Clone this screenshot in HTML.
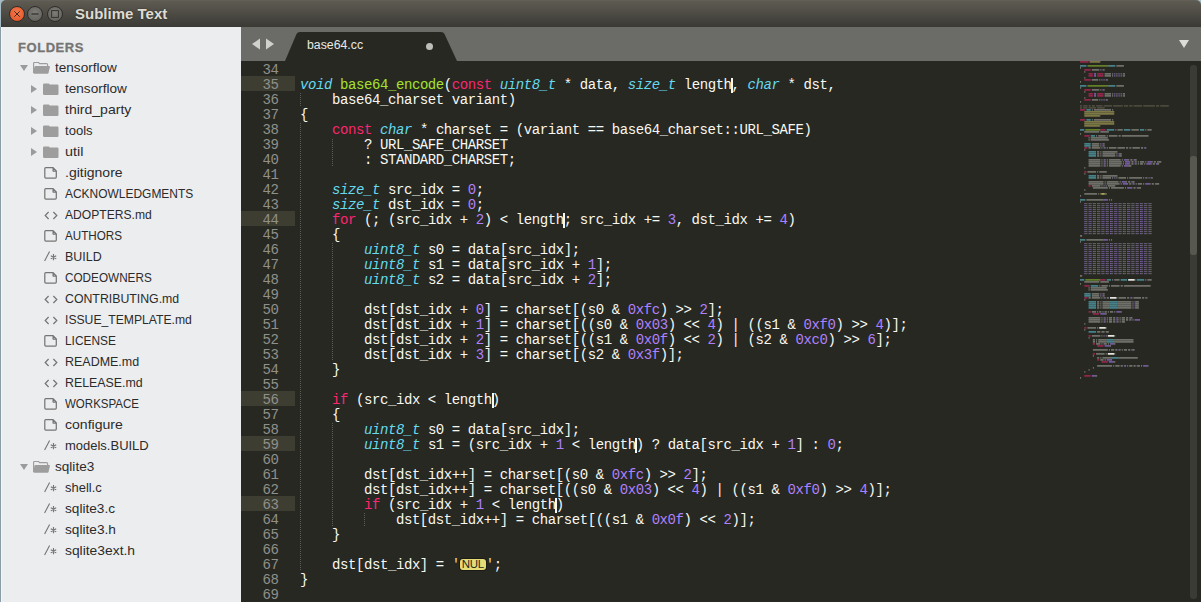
<!DOCTYPE html>
<html><head><meta charset="utf-8">
<style>
*{margin:0;padding:0;box-sizing:border-box}
html,body{width:1201px;height:602px;overflow:hidden;background:#a5bcc6}
body{position:relative;font-family:"Liberation Sans",sans-serif}
#title{position:absolute;left:1px;top:0;width:1200px;height:27px;border-radius:5px 5px 0 0;
 background:linear-gradient(#67645a 0,#5e5b52 1px,#3c3b36 26px);box-shadow:inset 0 -1px 0 #3a3934}
#title .t{position:absolute;left:74px;top:5px;font:bold 15px "Liberation Sans",sans-serif;color:#dfdbd2;letter-spacing:0;text-shadow:0 0 2px rgba(0,0,0,0.45)}
.wb{position:absolute;top:5.5px;width:16px;height:16px;border-radius:50%;border:1px solid #2e2d2a}
#bc{left:7.6px;background:radial-gradient(circle at 50% 40%,#f57a4f,#e0501f)}
#bm{left:26.4px;background:radial-gradient(circle at 50% 40%,#7d7c77,#5d5c57)}
#bx{left:45.7px;background:radial-gradient(circle at 50% 40%,#7d7c77,#5d5c57)}
#side{position:absolute;left:1px;top:27px;width:240px;height:575px;background:#ecedef}
#sideborder{position:absolute;left:0;top:27px;width:1px;height:575px;background:#8b9ea6;box-shadow:1px 0 0 #f3f4f6}
.si{position:absolute;font-size:13.5px;line-height:18px;color:#2b2b2b;white-space:pre;transform-origin:0 0}
.hdr{position:absolute;left:18px;top:40px;font:bold 13px "Liberation Sans",sans-serif;color:#767573;letter-spacing:0.55px;-webkit-text-stroke:0.3px #767573}
.tri-d{position:absolute;width:0;height:0;border-left:4px solid transparent;border-right:4px solid transparent;border-top:6px solid #9a9b9c}
.tri-r{position:absolute;width:0;height:0;border-top:4px solid transparent;border-bottom:4px solid transparent;border-left:6px solid #9a9b9c}
.ic{position:absolute}
.cic{position:absolute;font:13px "Liberation Mono",monospace;color:#8a8b8c;line-height:16px;letter-spacing:-1px}
#tabbar{position:absolute;left:241px;top:27px;width:960px;height:34px;background:#6b6c67}
#editor{position:absolute;left:241px;top:61px;width:960px;height:541px;background:#272822;overflow:hidden}
#edge{position:absolute;left:241px;top:27px;width:1px;height:575px;background:#dcdcdc}
.hl{position:absolute;left:241px;width:54px;height:15px;background:#3e3d32}
.ln{position:absolute;left:242px;width:36.5px;text-align:right;height:15px;margin-top:2px;font:14px "Liberation Mono",monospace;letter-spacing:-0.41px;line-height:15px;color:#90908a}
.cl{position:absolute;left:300px;height:15px;margin-top:2px;font:14px "Liberation Mono",monospace;letter-spacing:-0.41px;line-height:15px;color:#f8f8f2;white-space:pre}
.k{color:#f92672}
.t{color:#66d9ef;font-style:italic}
.f{color:#a6e22e}
.n{color:#ae81ff}
.s{color:#e6db74}
.nul{display:inline-block;position:relative;top:1px;vertical-align:top;width:26px;height:11px;background:#e6db74;color:#272822;border-radius:3px;box-shadow:0 0 0 1px #1a1a16;font:11.5px "Liberation Sans",sans-serif;letter-spacing:-0.2px;line-height:11px;text-align:center}
.ig{position:absolute;width:1px;background:repeating-linear-gradient(#5c5d56 0 1px,transparent 1px 2px)}
.cur{position:absolute;width:2px;height:15px;background:#f8f8f0}
#scroll{position:absolute;left:1190px;top:65px;width:7px;height:534px;border-radius:3px;background:#3a3b35}
#thumb{position:absolute;left:1190px;top:156px;width:7px;height:99px;border-radius:3px;background:#57584f}

#mini{position:absolute;left:1080px;top:61px}
#mini .c{color:#75715e}
#mini .b{background:#f8f8f2;color:#f8f8f2}
#tab{position:absolute;left:280px;top:31px}
.arrow{position:absolute}
#dd{position:absolute;left:1179px;top:40px;width:0;height:0;border-left:5px solid transparent;border-right:5px solid transparent;border-top:8px solid #dcdcd8}
#tabtitle{position:absolute;left:307px;top:38px;font:12.3px "Liberation Sans",sans-serif;color:#e8e8e2}
#dot{position:absolute;left:426px;top:43px;width:7px;height:7px;border-radius:50%;background:#bdbdb9}
</style></head><body>
<div id="title">
 <div class="wb" id="bc"><svg width="14" height="14" viewBox="0 0 14 14" style="position:absolute;left:0;top:0"><path d="M4.3,4.3 L9.7,9.7 M9.7,4.3 L4.3,9.7" stroke="#3a2418" stroke-width="0.95"/></svg></div><div class="wb" id="bm"><svg width="14" height="14" viewBox="0 0 14 14" style="position:absolute;left:0;top:0"><path d="M3.5,7 L10.5,7" stroke="#2e2d2a" stroke-width="1.2"/></svg></div><div class="wb" id="bx"><svg width="14" height="14" viewBox="0 0 14 14" style="position:absolute;left:0;top:0"><rect x="3.6" y="3.6" width="6.8" height="6.8" fill="none" stroke="#33322e" stroke-width="0.95"/></svg></div>
 <div class="t">Sublime Text</div>
</div>
<div id="side">
</div>
<div id="sideborder"></div>
<div class="hdr">FOLDERS</div>
<div class="tri-d" style="left:20px;top:65px"></div>
<svg class="ic" style="left:32px;top:61px" width="20" height="14" viewBox="0 0 20 14"><path d="M1.6,12 L1.6,2.3 Q1.6,1.5 2.4,1.5 L6.6,1.5 L7.6,2.6 L14.6,2.6 Q15.6,2.6 15.6,3.6 L15.6,5.5" fill="none" stroke="#9d9d9d" stroke-width="1.15"/><path d="M3.6,5 L17.2,5 Q18.1,5 17.9,5.9 L16.5,11.9 Q16.3,12.7 15.5,12.7 L2.2,12.7 Q1.1,12.7 1.3,11.6 L2.4,5.9 Q2.6,5 3.6,5 Z" fill="#9d9d9d"/></svg>
<div class="si" style="left:55px;top:59px;transform:scaleX(1.0053)">tensorflow</div>
<div class="tri-r" style="left:31px;top:85px"></div>
<svg class="ic" style="left:42.5px;top:83px" width="16" height="13" viewBox="0 0 16 13"><path d="M0,1.8 Q0,0.5 1.3,0.5 L5.8,0.5 L6.8,1.6 L14.3,1.6 Q15.5,1.6 15.5,2.8 L15.5,10.8 Q15.5,12 14.3,12 L1.3,12 Q0,12 0,10.8 Z" fill="#9d9d9d"/></svg>
<div class="si" style="left:65px;top:80px;transform:scaleX(1.0053)">tensorflow</div>
<div class="tri-r" style="left:31px;top:106px"></div>
<svg class="ic" style="left:42.5px;top:104px" width="16" height="13" viewBox="0 0 16 13"><path d="M0,1.8 Q0,0.5 1.3,0.5 L5.8,0.5 L6.8,1.6 L14.3,1.6 Q15.5,1.6 15.5,2.8 L15.5,10.8 Q15.5,12 14.3,12 L1.3,12 Q0,12 0,10.8 Z" fill="#9d9d9d"/></svg>
<div class="si" style="left:65px;top:101px;transform:scaleX(1.0400)">third_party</div>
<div class="tri-r" style="left:31px;top:127px"></div>
<svg class="ic" style="left:42.5px;top:125px" width="16" height="13" viewBox="0 0 16 13"><path d="M0,1.8 Q0,0.5 1.3,0.5 L5.8,0.5 L6.8,1.6 L14.3,1.6 Q15.5,1.6 15.5,2.8 L15.5,10.8 Q15.5,12 14.3,12 L1.3,12 Q0,12 0,10.8 Z" fill="#9d9d9d"/></svg>
<div class="si" style="left:65px;top:122px;transform:scaleX(0.9668)">tools</div>
<div class="tri-r" style="left:31px;top:148px"></div>
<svg class="ic" style="left:42.5px;top:146px" width="16" height="13" viewBox="0 0 16 13"><path d="M0,1.8 Q0,0.5 1.3,0.5 L5.8,0.5 L6.8,1.6 L14.3,1.6 Q15.5,1.6 15.5,2.8 L15.5,10.8 Q15.5,12 14.3,12 L1.3,12 Q0,12 0,10.8 Z" fill="#9d9d9d"/></svg>
<div class="si" style="left:65px;top:143px;transform:scaleX(1.0612)">util</div>
<svg class="ic" style="left:43px;top:167px" width="15" height="13" viewBox="0 0 15 13"><path d="M2.7,0.7 L10.1,0.7 L13.3,3.9 L13.3,10.1 Q13.3,11.1 12.3,11.1 L2.8,11.1 Q1.8,11.1 1.8,10.1 L1.8,1.7 Q1.8,0.7 2.7,0.7 Z M10.1,0.9 L10.1,4.1 L13.1,4.1" fill="none" stroke="#767676" stroke-width="1.25" stroke-linejoin="round"/></svg>
<div class="si" style="left:65px;top:164px;transform:scaleX(1.0371)">.gitignore</div>
<svg class="ic" style="left:43px;top:188px" width="15" height="13" viewBox="0 0 15 13"><path d="M2.7,0.7 L10.1,0.7 L13.3,3.9 L13.3,10.1 Q13.3,11.1 12.3,11.1 L2.8,11.1 Q1.8,11.1 1.8,10.1 L1.8,1.7 Q1.8,0.7 2.7,0.7 Z M10.1,0.9 L10.1,4.1 L13.1,4.1" fill="none" stroke="#767676" stroke-width="1.25" stroke-linejoin="round"/></svg>
<div class="si" style="left:65px;top:185px;transform:scaleX(0.8859)">ACKNOWLEDGMENTS</div>
<svg class="ic" style="left:43.5px;top:210.5px" width="14" height="10" viewBox="0 0 14 10"><path d="M4.6,1 L1.2,4.5 L4.6,8 M9.4,1 L12.8,4.5 L9.4,8" fill="none" stroke="#767676" stroke-width="1.25"/></svg>
<div class="si" style="left:65px;top:206px;transform:scaleX(0.8965)">ADOPTERS.md</div>
<svg class="ic" style="left:43px;top:230px" width="15" height="13" viewBox="0 0 15 13"><path d="M2.7,0.7 L10.1,0.7 L13.3,3.9 L13.3,10.1 Q13.3,11.1 12.3,11.1 L2.8,11.1 Q1.8,11.1 1.8,10.1 L1.8,1.7 Q1.8,0.7 2.7,0.7 Z M10.1,0.9 L10.1,4.1 L13.1,4.1" fill="none" stroke="#767676" stroke-width="1.25" stroke-linejoin="round"/></svg>
<div class="si" style="left:65px;top:227px;transform:scaleX(0.8628)">AUTHORS</div>
<svg class="ic" style="left:43px;top:251px" width="14" height="14" viewBox="0 0 14 14"><path d="M1.6,10 L6.6,0.4" stroke="#767676" stroke-width="1.1" fill="none"/><path d="M10.5,3.1 L10.5,9.3 M7.8,4.65 L13.2,7.75 M7.8,7.75 L13.2,4.65" stroke="#767676" stroke-width="1.15" fill="none"/></svg>
<div class="si" style="left:65px;top:248px;transform:scaleX(0.9206)">BUILD</div>
<svg class="ic" style="left:43px;top:272px" width="15" height="13" viewBox="0 0 15 13"><path d="M2.7,0.7 L10.1,0.7 L13.3,3.9 L13.3,10.1 Q13.3,11.1 12.3,11.1 L2.8,11.1 Q1.8,11.1 1.8,10.1 L1.8,1.7 Q1.8,0.7 2.7,0.7 Z M10.1,0.9 L10.1,4.1 L13.1,4.1" fill="none" stroke="#767676" stroke-width="1.25" stroke-linejoin="round"/></svg>
<div class="si" style="left:65px;top:269px;transform:scaleX(0.8696)">CODEOWNERS</div>
<svg class="ic" style="left:43.5px;top:294.5px" width="14" height="10" viewBox="0 0 14 10"><path d="M4.6,1 L1.2,4.5 L4.6,8 M9.4,1 L12.8,4.5 L9.4,8" fill="none" stroke="#767676" stroke-width="1.25"/></svg>
<div class="si" style="left:65px;top:290px;transform:scaleX(0.9119)">CONTRIBUTING.md</div>
<svg class="ic" style="left:43.5px;top:315.5px" width="14" height="10" viewBox="0 0 14 10"><path d="M4.6,1 L1.2,4.5 L4.6,8 M9.4,1 L12.8,4.5 L9.4,8" fill="none" stroke="#767676" stroke-width="1.25"/></svg>
<div class="si" style="left:65px;top:311px;transform:scaleX(0.9013)">ISSUE_TEMPLATE.md</div>
<svg class="ic" style="left:43px;top:335px" width="15" height="13" viewBox="0 0 15 13"><path d="M2.7,0.7 L10.1,0.7 L13.3,3.9 L13.3,10.1 Q13.3,11.1 12.3,11.1 L2.8,11.1 Q1.8,11.1 1.8,10.1 L1.8,1.7 Q1.8,0.7 2.7,0.7 Z M10.1,0.9 L10.1,4.1 L13.1,4.1" fill="none" stroke="#767676" stroke-width="1.25" stroke-linejoin="round"/></svg>
<div class="si" style="left:65px;top:332px;transform:scaleX(0.8811)">LICENSE</div>
<svg class="ic" style="left:43.5px;top:357.5px" width="14" height="10" viewBox="0 0 14 10"><path d="M4.6,1 L1.2,4.5 L4.6,8 M9.4,1 L12.8,4.5 L9.4,8" fill="none" stroke="#767676" stroke-width="1.25"/></svg>
<div class="si" style="left:65px;top:353px;transform:scaleX(0.9235)">README.md</div>
<svg class="ic" style="left:43.5px;top:378.5px" width="14" height="10" viewBox="0 0 14 10"><path d="M4.6,1 L1.2,4.5 L4.6,8 M9.4,1 L12.8,4.5 L9.4,8" fill="none" stroke="#767676" stroke-width="1.25"/></svg>
<div class="si" style="left:65px;top:374px;transform:scaleX(0.9158)">RELEASE.md</div>
<svg class="ic" style="left:43px;top:398px" width="15" height="13" viewBox="0 0 15 13"><path d="M2.7,0.7 L10.1,0.7 L13.3,3.9 L13.3,10.1 Q13.3,11.1 12.3,11.1 L2.8,11.1 Q1.8,11.1 1.8,10.1 L1.8,1.7 Q1.8,0.7 2.7,0.7 Z M10.1,0.9 L10.1,4.1 L13.1,4.1" fill="none" stroke="#767676" stroke-width="1.25" stroke-linejoin="round"/></svg>
<div class="si" style="left:65px;top:395px;transform:scaleX(0.8532)">WORKSPACE</div>
<svg class="ic" style="left:43px;top:419px" width="15" height="13" viewBox="0 0 15 13"><path d="M2.7,0.7 L10.1,0.7 L13.3,3.9 L13.3,10.1 Q13.3,11.1 12.3,11.1 L2.8,11.1 Q1.8,11.1 1.8,10.1 L1.8,1.7 Q1.8,0.7 2.7,0.7 Z M10.1,0.9 L10.1,4.1 L13.1,4.1" fill="none" stroke="#767676" stroke-width="1.25" stroke-linejoin="round"/></svg>
<div class="si" style="left:65px;top:416px;transform:scaleX(1.0419)">configure</div>
<svg class="ic" style="left:43px;top:440px" width="14" height="14" viewBox="0 0 14 14"><path d="M1.6,10 L6.6,0.4" stroke="#767676" stroke-width="1.1" fill="none"/><path d="M10.5,3.1 L10.5,9.3 M7.8,4.65 L13.2,7.75 M7.8,7.75 L13.2,4.65" stroke="#767676" stroke-width="1.15" fill="none"/></svg>
<div class="si" style="left:65px;top:437px;transform:scaleX(0.9620)">models.BUILD</div>
<div class="tri-d" style="left:20px;top:464px"></div>
<svg class="ic" style="left:32px;top:460px" width="20" height="14" viewBox="0 0 20 14"><path d="M1.6,12 L1.6,2.3 Q1.6,1.5 2.4,1.5 L6.6,1.5 L7.6,2.6 L14.6,2.6 Q15.6,2.6 15.6,3.6 L15.6,5.5" fill="none" stroke="#9d9d9d" stroke-width="1.15"/><path d="M3.6,5 L17.2,5 Q18.1,5 17.9,5.9 L16.5,11.9 Q16.3,12.7 15.5,12.7 L2.2,12.7 Q1.1,12.7 1.3,11.6 L2.4,5.9 Q2.6,5 3.6,5 Z" fill="#9d9d9d"/></svg>
<div class="si" style="left:55px;top:458px;transform:scaleX(1.0063)">sqlite3</div>
<svg class="ic" style="left:43px;top:482px" width="14" height="14" viewBox="0 0 14 14"><path d="M1.6,10 L6.6,0.4" stroke="#767676" stroke-width="1.1" fill="none"/><path d="M10.5,3.1 L10.5,9.3 M7.8,4.65 L13.2,7.75 M7.8,7.75 L13.2,4.65" stroke="#767676" stroke-width="1.15" fill="none"/></svg>
<div class="si" style="left:65px;top:479px;transform:scaleX(0.9601)">shell.c</div>
<svg class="ic" style="left:43px;top:503px" width="14" height="14" viewBox="0 0 14 14"><path d="M1.6,10 L6.6,0.4" stroke="#767676" stroke-width="1.1" fill="none"/><path d="M10.5,3.1 L10.5,9.3 M7.8,4.65 L13.2,7.75 M7.8,7.75 L13.2,4.65" stroke="#767676" stroke-width="1.15" fill="none"/></svg>
<div class="si" style="left:65px;top:500px;transform:scaleX(1.0111)">sqlite3.c</div>
<svg class="ic" style="left:43px;top:524px" width="14" height="14" viewBox="0 0 14 14"><path d="M1.6,10 L6.6,0.4" stroke="#767676" stroke-width="1.1" fill="none"/><path d="M10.5,3.1 L10.5,9.3 M7.8,4.65 L13.2,7.75 M7.8,7.75 L13.2,4.65" stroke="#767676" stroke-width="1.15" fill="none"/></svg>
<div class="si" style="left:65px;top:521px;transform:scaleX(1.0130)">sqlite3.h</div>
<svg class="ic" style="left:43px;top:545px" width="14" height="14" viewBox="0 0 14 14"><path d="M1.6,10 L6.6,0.4" stroke="#767676" stroke-width="1.1" fill="none"/><path d="M10.5,3.1 L10.5,9.3 M7.8,4.65 L13.2,7.75 M7.8,7.75 L13.2,4.65" stroke="#767676" stroke-width="1.15" fill="none"/></svg>
<div class="si" style="left:65px;top:542px;transform:scaleX(1.0256)">sqlite3ext.h</div>
<div id="tabbar"></div>
<svg id="tab" width="182" height="31" viewBox="0 0 182 31"><path d="M5,30 L16.5,3 Q17.5,1 20,1 L161,1 Q163.5,1 164.5,3 L177,30 Z" fill="#272822"/></svg>
<svg class="arrow" style="left:251px;top:38px" width="24" height="12" viewBox="0 0 24 12"><path d="M9,0.5 L9,11.5 L1,6 Z M15,0.5 L15,11.5 L23,6 Z" fill="#d0d0cc"/></svg>
<div id="dd"></div>
<div id="tabtitle">base64.cc</div>
<div id="dot"></div>
<div id="editor"></div>

<div class="ln" style="top:61px">34</div>
<div class="cl" style="top:61px"></div>
<div class="hl" style="top:76px"></div>
<div class="ln" style="top:76px">35</div>
<div class="cl" style="top:76px"><span class="t">void</span> <span class="f">base64_encode</span>(<span class="k">const</span> <span class="t">uint8_t</span> * data, <span class="t">size_t</span> length, <span class="t">char</span> * dst,</div>
<div class="cur" style="top:78px;left:731px"></div>
<div class="ln" style="top:91px">36</div>
<div class="cl" style="top:91px">    base64_charset variant)</div>
<div class="ln" style="top:106px">37</div>
<div class="cl" style="top:106px">{</div>
<div class="ln" style="top:121px">38</div>
<div class="cl" style="top:121px">    <span class="k">const</span> <span class="t">char</span> * charset = (variant == base64_charset::URL_SAFE)</div>
<div class="ln" style="top:136px">39</div>
<div class="cl" style="top:136px">        ? URL_SAFE_CHARSET</div>
<div class="ln" style="top:151px">40</div>
<div class="cl" style="top:151px">        : STANDARD_CHARSET;</div>
<div class="ln" style="top:166px">41</div>
<div class="cl" style="top:166px"></div>
<div class="ln" style="top:181px">42</div>
<div class="cl" style="top:181px">    <span class="t">size_t</span> src_idx = <span class="n">0</span>;</div>
<div class="ln" style="top:196px">43</div>
<div class="cl" style="top:196px">    <span class="t">size_t</span> dst_idx = <span class="n">0</span>;</div>
<div class="hl" style="top:211px"></div>
<div class="ln" style="top:211px">44</div>
<div class="cl" style="top:211px">    <span class="k">for</span> (; (src_idx + <span class="n">2</span>) &lt; length; src_idx += <span class="n">3</span>, dst_idx += <span class="n">4</span>)</div>
<div class="cur" style="top:213px;left:563px"></div>
<div class="ln" style="top:226px">45</div>
<div class="cl" style="top:226px">    {</div>
<div class="ln" style="top:241px">46</div>
<div class="cl" style="top:241px">        <span class="t">uint8_t</span> s0 = data[src_idx];</div>
<div class="ln" style="top:256px">47</div>
<div class="cl" style="top:256px">        <span class="t">uint8_t</span> s1 = data[src_idx + <span class="n">1</span>];</div>
<div class="ln" style="top:271px">48</div>
<div class="cl" style="top:271px">        <span class="t">uint8_t</span> s2 = data[src_idx + <span class="n">2</span>];</div>
<div class="ln" style="top:286px">49</div>
<div class="cl" style="top:286px"></div>
<div class="ln" style="top:301px">50</div>
<div class="cl" style="top:301px">        dst[dst_idx + <span class="n">0</span>] = charset[(s0 &amp; <span class="n">0xfc</span>) &gt;&gt; <span class="n">2</span>];</div>
<div class="ln" style="top:316px">51</div>
<div class="cl" style="top:316px">        dst[dst_idx + <span class="n">1</span>] = charset[((s0 &amp; <span class="n">0x03</span>) &lt;&lt; <span class="n">4</span>) | ((s1 &amp; <span class="n">0xf0</span>) &gt;&gt; <span class="n">4</span>)];</div>
<div class="ln" style="top:331px">52</div>
<div class="cl" style="top:331px">        dst[dst_idx + <span class="n">2</span>] = charset[((s1 &amp; <span class="n">0x0f</span>) &lt;&lt; <span class="n">2</span>) | (s2 &amp; <span class="n">0xc0</span>) &gt;&gt; <span class="n">6</span>];</div>
<div class="ln" style="top:346px">53</div>
<div class="cl" style="top:346px">        dst[dst_idx + <span class="n">3</span>] = charset[(s2 &amp; <span class="n">0x3f</span>)];</div>
<div class="ln" style="top:361px">54</div>
<div class="cl" style="top:361px">    }</div>
<div class="ln" style="top:376px">55</div>
<div class="cl" style="top:376px"></div>
<div class="hl" style="top:391px"></div>
<div class="ln" style="top:391px">56</div>
<div class="cl" style="top:391px">    <span class="k">if</span> (src_idx &lt; length)</div>
<div class="cur" style="top:393px;left:492px"></div>
<div class="ln" style="top:406px">57</div>
<div class="cl" style="top:406px">    {</div>
<div class="ln" style="top:421px">58</div>
<div class="cl" style="top:421px">        <span class="t">uint8_t</span> s0 = data[src_idx];</div>
<div class="hl" style="top:436px"></div>
<div class="ln" style="top:436px">59</div>
<div class="cl" style="top:436px">        <span class="t">uint8_t</span> s1 = (src_idx + <span class="n">1</span> &lt; length) ? data[src_idx + <span class="n">1</span>] : <span class="n">0</span>;</div>
<div class="cur" style="top:438px;left:635px"></div>
<div class="ln" style="top:451px">60</div>
<div class="cl" style="top:451px"></div>
<div class="ln" style="top:466px">61</div>
<div class="cl" style="top:466px">        dst[dst_idx++] = charset[(s0 &amp; <span class="n">0xfc</span>) &gt;&gt; <span class="n">2</span>];</div>
<div class="ln" style="top:481px">62</div>
<div class="cl" style="top:481px">        dst[dst_idx++] = charset[((s0 &amp; <span class="n">0x03</span>) &lt;&lt; <span class="n">4</span>) | ((s1 &amp; <span class="n">0xf0</span>) &gt;&gt; <span class="n">4</span>)];</div>
<div class="hl" style="top:496px"></div>
<div class="ln" style="top:496px">63</div>
<div class="cl" style="top:496px">        <span class="k">if</span> (src_idx + <span class="n">1</span> &lt; length)</div>
<div class="cur" style="top:498px;left:555px"></div>
<div class="ln" style="top:511px">64</div>
<div class="cl" style="top:511px">            dst[dst_idx++] = charset[((s1 &amp; <span class="n">0x0f</span>) &lt;&lt; <span class="n">2</span>)];</div>
<div class="ln" style="top:526px">65</div>
<div class="cl" style="top:526px">    }</div>
<div class="ln" style="top:541px">66</div>
<div class="cl" style="top:541px"></div>
<div class="ln" style="top:556px">67</div>
<div class="cl" style="top:556px">    dst[dst_idx] = <span class="s">&#x27;</span><span class="nul">NUL</span><span class="s">&#x27;</span>;</div>
<div class="ln" style="top:571px">68</div>
<div class="cl" style="top:571px">}</div>
<div class="ln" style="top:586px">69</div>
<div class="cl" style="top:586px"></div>
<div class="ig" style="top:93px;left:300px;height:13px"></div>
<div class="ig" style="top:123px;left:300px;height:448px"></div>
<div class="ig" style="top:139px;left:332px;height:27px"></div>
<div class="ig" style="top:243px;left:332px;height:118px"></div>
<div class="ig" style="top:423px;left:332px;height:103px"></div>
<div class="ig" style="top:513px;left:364px;height:13px"></div>
<svg id="mini" width="110" height="320" viewBox="0 0 110 320"><rect x="0.00" y="0" width="8.56" height="1.75" fill="#f92672" fill-opacity="0.5"/><rect x="9.63" y="0" width="10.70" height="1.75" fill="#e6db74" fill-opacity="0.45"/><rect x="0.00" y="4" width="6.42" height="1.75" fill="#66d9ef" fill-opacity="0.5"/><rect x="7.49" y="4" width="20.33" height="1.75" fill="#a6e22e" fill-opacity="0.47"/><rect x="27.82" y="4" width="1.07" height="1.75" fill="#f8f8f2" fill-opacity="0.34"/><rect x="28.89" y="4" width="6.42" height="1.75" fill="#66d9ef" fill-opacity="0.5"/><rect x="36.38" y="4" width="7.49" height="1.75" fill="#f8f8f2" fill-opacity="0.34"/><rect x="0.00" y="6" width="1.07" height="1.75" fill="#f8f8f2" fill-opacity="0.34"/><rect x="4.28" y="8" width="6.42" height="1.75" fill="#f92672" fill-opacity="0.5"/><rect x="11.77" y="8" width="7.49" height="1.75" fill="#f8f8f2" fill-opacity="0.34"/><rect x="20.33" y="8" width="1.07" height="1.75" fill="#f8f8f2" fill-opacity="0.34"/><rect x="22.47" y="8" width="1.07" height="1.75" fill="#ae81ff" fill-opacity="0.55"/><rect x="23.54" y="8" width="1.07" height="1.75" fill="#f8f8f2" fill-opacity="0.34"/><rect x="4.28" y="10" width="1.07" height="1.75" fill="#f8f8f2" fill-opacity="0.34"/><rect x="8.56" y="12" width="4.28" height="1.75" fill="#f92672" fill-opacity="0.5"/><rect x="13.91" y="12" width="1.07" height="1.75" fill="#ae81ff" fill-opacity="0.55"/><rect x="14.98" y="12" width="1.07" height="1.75" fill="#f8f8f2" fill-opacity="0.34"/><rect x="17.12" y="12" width="6.42" height="1.75" fill="#f92672" fill-opacity="0.5"/><rect x="24.61" y="12" width="6.42" height="1.75" fill="#f8f8f2" fill-opacity="0.34"/><rect x="32.10" y="12" width="1.07" height="1.75" fill="#f8f8f2" fill-opacity="0.34"/><rect x="34.24" y="12" width="1.07" height="1.75" fill="#ae81ff" fill-opacity="0.55"/><rect x="36.38" y="12" width="1.07" height="1.75" fill="#f8f8f2" fill-opacity="0.34"/><rect x="38.52" y="12" width="1.07" height="1.75" fill="#ae81ff" fill-opacity="0.55"/><rect x="40.66" y="12" width="1.07" height="1.75" fill="#f8f8f2" fill-opacity="0.34"/><rect x="42.80" y="12" width="1.07" height="1.75" fill="#ae81ff" fill-opacity="0.55"/><rect x="43.87" y="12" width="1.07" height="1.75" fill="#f8f8f2" fill-opacity="0.34"/><rect x="8.56" y="14" width="4.28" height="1.75" fill="#f92672" fill-opacity="0.5"/><rect x="13.91" y="14" width="1.07" height="1.75" fill="#ae81ff" fill-opacity="0.55"/><rect x="14.98" y="14" width="1.07" height="1.75" fill="#f8f8f2" fill-opacity="0.34"/><rect x="17.12" y="14" width="6.42" height="1.75" fill="#f92672" fill-opacity="0.5"/><rect x="24.61" y="14" width="6.42" height="1.75" fill="#f8f8f2" fill-opacity="0.34"/><rect x="32.10" y="14" width="1.07" height="1.75" fill="#f8f8f2" fill-opacity="0.34"/><rect x="34.24" y="14" width="1.07" height="1.75" fill="#ae81ff" fill-opacity="0.55"/><rect x="36.38" y="14" width="1.07" height="1.75" fill="#f8f8f2" fill-opacity="0.34"/><rect x="38.52" y="14" width="1.07" height="1.75" fill="#ae81ff" fill-opacity="0.55"/><rect x="40.66" y="14" width="1.07" height="1.75" fill="#f8f8f2" fill-opacity="0.34"/><rect x="42.80" y="14" width="1.07" height="1.75" fill="#ae81ff" fill-opacity="0.55"/><rect x="43.87" y="14" width="1.07" height="1.75" fill="#f8f8f2" fill-opacity="0.34"/><rect x="4.28" y="16" width="1.07" height="1.75" fill="#f8f8f2" fill-opacity="0.34"/><rect x="4.28" y="18" width="6.42" height="1.75" fill="#f92672" fill-opacity="0.5"/><rect x="11.77" y="18" width="6.42" height="1.75" fill="#f8f8f2" fill-opacity="0.34"/><rect x="19.26" y="18" width="1.07" height="1.75" fill="#f8f8f2" fill-opacity="0.34"/><rect x="21.40" y="18" width="1.07" height="1.75" fill="#ae81ff" fill-opacity="0.55"/><rect x="23.54" y="18" width="1.07" height="1.75" fill="#f8f8f2" fill-opacity="0.34"/><rect x="25.68" y="18" width="1.07" height="1.75" fill="#ae81ff" fill-opacity="0.55"/><rect x="26.75" y="18" width="1.07" height="1.75" fill="#f8f8f2" fill-opacity="0.34"/><rect x="0.00" y="20" width="1.07" height="1.75" fill="#f8f8f2" fill-opacity="0.34"/><rect x="0.00" y="24" width="6.42" height="1.75" fill="#66d9ef" fill-opacity="0.5"/><rect x="7.49" y="24" width="20.33" height="1.75" fill="#a6e22e" fill-opacity="0.47"/><rect x="27.82" y="24" width="1.07" height="1.75" fill="#f8f8f2" fill-opacity="0.34"/><rect x="28.89" y="24" width="6.42" height="1.75" fill="#66d9ef" fill-opacity="0.5"/><rect x="36.38" y="24" width="7.49" height="1.75" fill="#f8f8f2" fill-opacity="0.34"/><rect x="0.00" y="26" width="1.07" height="1.75" fill="#f8f8f2" fill-opacity="0.34"/><rect x="4.28" y="28" width="6.42" height="1.75" fill="#f92672" fill-opacity="0.5"/><rect x="11.77" y="28" width="7.49" height="1.75" fill="#f8f8f2" fill-opacity="0.34"/><rect x="20.33" y="28" width="1.07" height="1.75" fill="#f8f8f2" fill-opacity="0.34"/><rect x="22.47" y="28" width="1.07" height="1.75" fill="#ae81ff" fill-opacity="0.55"/><rect x="23.54" y="28" width="1.07" height="1.75" fill="#f8f8f2" fill-opacity="0.34"/><rect x="4.28" y="30" width="1.07" height="1.75" fill="#f8f8f2" fill-opacity="0.34"/><rect x="8.56" y="32" width="4.28" height="1.75" fill="#f92672" fill-opacity="0.5"/><rect x="13.91" y="32" width="1.07" height="1.75" fill="#ae81ff" fill-opacity="0.55"/><rect x="14.98" y="32" width="1.07" height="1.75" fill="#f8f8f2" fill-opacity="0.34"/><rect x="17.12" y="32" width="6.42" height="1.75" fill="#f92672" fill-opacity="0.5"/><rect x="24.61" y="32" width="6.42" height="1.75" fill="#f8f8f2" fill-opacity="0.34"/><rect x="32.10" y="32" width="1.07" height="1.75" fill="#f8f8f2" fill-opacity="0.34"/><rect x="34.24" y="32" width="1.07" height="1.75" fill="#ae81ff" fill-opacity="0.55"/><rect x="36.38" y="32" width="1.07" height="1.75" fill="#f8f8f2" fill-opacity="0.34"/><rect x="38.52" y="32" width="1.07" height="1.75" fill="#ae81ff" fill-opacity="0.55"/><rect x="40.66" y="32" width="1.07" height="1.75" fill="#f8f8f2" fill-opacity="0.34"/><rect x="42.80" y="32" width="1.07" height="1.75" fill="#ae81ff" fill-opacity="0.55"/><rect x="43.87" y="32" width="1.07" height="1.75" fill="#f8f8f2" fill-opacity="0.34"/><rect x="8.56" y="34" width="4.28" height="1.75" fill="#f92672" fill-opacity="0.5"/><rect x="13.91" y="34" width="1.07" height="1.75" fill="#ae81ff" fill-opacity="0.55"/><rect x="14.98" y="34" width="1.07" height="1.75" fill="#f8f8f2" fill-opacity="0.34"/><rect x="17.12" y="34" width="6.42" height="1.75" fill="#f92672" fill-opacity="0.5"/><rect x="24.61" y="34" width="6.42" height="1.75" fill="#f8f8f2" fill-opacity="0.34"/><rect x="32.10" y="34" width="1.07" height="1.75" fill="#f8f8f2" fill-opacity="0.34"/><rect x="34.24" y="34" width="1.07" height="1.75" fill="#ae81ff" fill-opacity="0.55"/><rect x="36.38" y="34" width="1.07" height="1.75" fill="#f8f8f2" fill-opacity="0.34"/><rect x="38.52" y="34" width="1.07" height="1.75" fill="#ae81ff" fill-opacity="0.55"/><rect x="40.66" y="34" width="1.07" height="1.75" fill="#f8f8f2" fill-opacity="0.34"/><rect x="42.80" y="34" width="1.07" height="1.75" fill="#ae81ff" fill-opacity="0.55"/><rect x="43.87" y="34" width="1.07" height="1.75" fill="#f8f8f2" fill-opacity="0.34"/><rect x="4.28" y="36" width="1.07" height="1.75" fill="#f8f8f2" fill-opacity="0.34"/><rect x="4.28" y="38" width="6.42" height="1.75" fill="#f92672" fill-opacity="0.5"/><rect x="11.77" y="38" width="6.42" height="1.75" fill="#f8f8f2" fill-opacity="0.34"/><rect x="19.26" y="38" width="1.07" height="1.75" fill="#f8f8f2" fill-opacity="0.34"/><rect x="21.40" y="38" width="1.07" height="1.75" fill="#ae81ff" fill-opacity="0.55"/><rect x="23.54" y="38" width="1.07" height="1.75" fill="#f8f8f2" fill-opacity="0.34"/><rect x="25.68" y="38" width="1.07" height="1.75" fill="#ae81ff" fill-opacity="0.55"/><rect x="26.75" y="38" width="1.07" height="1.75" fill="#f8f8f2" fill-opacity="0.34"/><rect x="0.00" y="40" width="1.07" height="1.75" fill="#f8f8f2" fill-opacity="0.34"/><rect x="0.00" y="44" width="2.14" height="1.75" fill="#75715e" fill-opacity="0.45"/><rect x="3.21" y="44" width="4.28" height="1.75" fill="#75715e" fill-opacity="0.45"/><rect x="8.56" y="44" width="2.14" height="1.75" fill="#75715e" fill-opacity="0.45"/><rect x="11.77" y="44" width="3.21" height="1.75" fill="#75715e" fill-opacity="0.45"/><rect x="16.05" y="44" width="6.42" height="1.75" fill="#75715e" fill-opacity="0.45"/><rect x="23.54" y="44" width="8.56" height="1.75" fill="#75715e" fill-opacity="0.45"/><rect x="33.17" y="44" width="9.63" height="1.75" fill="#75715e" fill-opacity="0.45"/><rect x="43.87" y="44" width="4.28" height="1.75" fill="#75715e" fill-opacity="0.45"/><rect x="49.22" y="44" width="3.21" height="1.75" fill="#75715e" fill-opacity="0.45"/><rect x="53.50" y="44" width="8.56" height="1.75" fill="#75715e" fill-opacity="0.45"/><rect x="63.13" y="44" width="11.77" height="1.75" fill="#75715e" fill-opacity="0.45"/><rect x="75.97" y="44" width="3.21" height="1.75" fill="#75715e" fill-opacity="0.45"/><rect x="80.25" y="44" width="8.56" height="1.75" fill="#75715e" fill-opacity="0.45"/><rect x="0.00" y="46" width="2.14" height="1.75" fill="#75715e" fill-opacity="0.45"/><rect x="3.21" y="46" width="4.28" height="1.75" fill="#75715e" fill-opacity="0.45"/><rect x="8.56" y="46" width="7.49" height="1.75" fill="#75715e" fill-opacity="0.45"/><rect x="17.12" y="46" width="7.49" height="1.75" fill="#75715e" fill-opacity="0.45"/><rect x="0.00" y="48" width="5.35" height="1.75" fill="#f92672" fill-opacity="0.5"/><rect x="6.42" y="48" width="4.28" height="1.75" fill="#66d9ef" fill-opacity="0.5"/><rect x="11.77" y="48" width="1.07" height="1.75" fill="#f8f8f2" fill-opacity="0.34"/><rect x="13.91" y="48" width="17.12" height="1.75" fill="#f8f8f2" fill-opacity="0.34"/><rect x="32.10" y="48" width="1.07" height="1.75" fill="#f8f8f2" fill-opacity="0.34"/><rect x="4.28" y="50" width="29.96" height="1.75" fill="#e6db74" fill-opacity="0.45"/><rect x="4.28" y="52" width="29.96" height="1.75" fill="#e6db74" fill-opacity="0.45"/><rect x="4.28" y="54" width="14.98" height="1.75" fill="#e6db74" fill-opacity="0.45"/><rect x="19.26" y="54" width="1.07" height="1.75" fill="#f8f8f2" fill-opacity="0.34"/><rect x="0.00" y="58" width="5.35" height="1.75" fill="#f92672" fill-opacity="0.5"/><rect x="6.42" y="58" width="4.28" height="1.75" fill="#66d9ef" fill-opacity="0.5"/><rect x="11.77" y="58" width="1.07" height="1.75" fill="#f8f8f2" fill-opacity="0.34"/><rect x="13.91" y="58" width="17.12" height="1.75" fill="#f8f8f2" fill-opacity="0.34"/><rect x="32.10" y="58" width="1.07" height="1.75" fill="#f8f8f2" fill-opacity="0.34"/><rect x="4.28" y="60" width="29.96" height="1.75" fill="#e6db74" fill-opacity="0.45"/><rect x="4.28" y="62" width="29.96" height="1.75" fill="#e6db74" fill-opacity="0.45"/><rect x="4.28" y="64" width="14.98" height="1.75" fill="#e6db74" fill-opacity="0.45"/><rect x="19.26" y="64" width="1.07" height="1.75" fill="#f8f8f2" fill-opacity="0.34"/><rect x="0.00" y="68" width="4.28" height="1.75" fill="#66d9ef" fill-opacity="0.5"/><rect x="5.35" y="68" width="13.91" height="1.75" fill="#a6e22e" fill-opacity="0.47"/><rect x="19.26" y="68" width="1.07" height="1.75" fill="#f8f8f2" fill-opacity="0.34"/><rect x="20.33" y="68" width="5.35" height="1.75" fill="#f92672" fill-opacity="0.5"/><rect x="26.75" y="68" width="7.49" height="1.75" fill="#66d9ef" fill-opacity="0.5"/><rect x="35.31" y="68" width="1.07" height="1.75" fill="#f8f8f2" fill-opacity="0.34"/><rect x="37.45" y="68" width="5.35" height="1.75" fill="#f8f8f2" fill-opacity="0.34"/><rect x="43.87" y="68" width="6.42" height="1.75" fill="#66d9ef" fill-opacity="0.5"/><rect x="51.36" y="68" width="7.49" height="1.75" fill="#f8f8f2" fill-opacity="0.34"/><rect x="59.92" y="68" width="4.28" height="1.75" fill="#66d9ef" fill-opacity="0.5"/><rect x="65.27" y="68" width="1.07" height="1.75" fill="#f8f8f2" fill-opacity="0.34"/><rect x="67.41" y="68" width="4.28" height="1.75" fill="#f8f8f2" fill-opacity="0.34"/><rect x="4.28" y="70" width="14.98" height="1.75" fill="#f8f8f2" fill-opacity="0.34"/><rect x="20.33" y="70" width="8.56" height="1.75" fill="#f8f8f2" fill-opacity="0.34"/><rect x="0.00" y="72" width="1.07" height="1.75" fill="#f8f8f2" fill-opacity="0.34"/><rect x="4.28" y="74" width="5.35" height="1.75" fill="#f92672" fill-opacity="0.5"/><rect x="10.70" y="74" width="4.28" height="1.75" fill="#66d9ef" fill-opacity="0.5"/><rect x="16.05" y="74" width="1.07" height="1.75" fill="#f8f8f2" fill-opacity="0.34"/><rect x="18.19" y="74" width="7.49" height="1.75" fill="#f8f8f2" fill-opacity="0.34"/><rect x="26.75" y="74" width="1.07" height="1.75" fill="#f8f8f2" fill-opacity="0.34"/><rect x="28.89" y="74" width="8.56" height="1.75" fill="#f8f8f2" fill-opacity="0.34"/><rect x="38.52" y="74" width="2.14" height="1.75" fill="#f8f8f2" fill-opacity="0.34"/><rect x="41.73" y="74" width="26.75" height="1.75" fill="#f8f8f2" fill-opacity="0.34"/><rect x="8.56" y="76" width="1.07" height="1.75" fill="#f8f8f2" fill-opacity="0.34"/><rect x="10.70" y="76" width="17.12" height="1.75" fill="#f8f8f2" fill-opacity="0.34"/><rect x="8.56" y="78" width="1.07" height="1.75" fill="#f8f8f2" fill-opacity="0.34"/><rect x="10.70" y="78" width="18.19" height="1.75" fill="#f8f8f2" fill-opacity="0.34"/><rect x="4.28" y="82" width="6.42" height="1.75" fill="#66d9ef" fill-opacity="0.5"/><rect x="11.77" y="82" width="7.49" height="1.75" fill="#f8f8f2" fill-opacity="0.34"/><rect x="20.33" y="82" width="1.07" height="1.75" fill="#f8f8f2" fill-opacity="0.34"/><rect x="22.47" y="82" width="1.07" height="1.75" fill="#ae81ff" fill-opacity="0.55"/><rect x="23.54" y="82" width="1.07" height="1.75" fill="#f8f8f2" fill-opacity="0.34"/><rect x="4.28" y="84" width="6.42" height="1.75" fill="#66d9ef" fill-opacity="0.5"/><rect x="11.77" y="84" width="7.49" height="1.75" fill="#f8f8f2" fill-opacity="0.34"/><rect x="20.33" y="84" width="1.07" height="1.75" fill="#f8f8f2" fill-opacity="0.34"/><rect x="22.47" y="84" width="1.07" height="1.75" fill="#ae81ff" fill-opacity="0.55"/><rect x="23.54" y="84" width="1.07" height="1.75" fill="#f8f8f2" fill-opacity="0.34"/><rect x="4.28" y="86" width="3.21" height="1.75" fill="#f92672" fill-opacity="0.5"/><rect x="8.56" y="86" width="2.14" height="1.75" fill="#f8f8f2" fill-opacity="0.34"/><rect x="11.77" y="86" width="8.56" height="1.75" fill="#f8f8f2" fill-opacity="0.34"/><rect x="21.40" y="86" width="1.07" height="1.75" fill="#f8f8f2" fill-opacity="0.34"/><rect x="23.54" y="86" width="1.07" height="1.75" fill="#ae81ff" fill-opacity="0.55"/><rect x="24.61" y="86" width="1.07" height="1.75" fill="#f8f8f2" fill-opacity="0.34"/><rect x="26.75" y="86" width="1.07" height="1.75" fill="#f8f8f2" fill-opacity="0.34"/><rect x="28.89" y="86" width="7.49" height="1.75" fill="#f8f8f2" fill-opacity="0.34"/><rect x="37.45" y="86" width="7.49" height="1.75" fill="#f8f8f2" fill-opacity="0.34"/><rect x="46.01" y="86" width="2.14" height="1.75" fill="#f8f8f2" fill-opacity="0.34"/><rect x="49.22" y="86" width="1.07" height="1.75" fill="#ae81ff" fill-opacity="0.55"/><rect x="50.29" y="86" width="1.07" height="1.75" fill="#f8f8f2" fill-opacity="0.34"/><rect x="52.43" y="86" width="7.49" height="1.75" fill="#f8f8f2" fill-opacity="0.34"/><rect x="60.99" y="86" width="2.14" height="1.75" fill="#f8f8f2" fill-opacity="0.34"/><rect x="64.20" y="86" width="1.07" height="1.75" fill="#ae81ff" fill-opacity="0.55"/><rect x="65.27" y="86" width="1.07" height="1.75" fill="#f8f8f2" fill-opacity="0.34"/><rect x="4.28" y="88" width="1.07" height="1.75" fill="#f8f8f2" fill-opacity="0.34"/><rect x="8.56" y="90" width="7.49" height="1.75" fill="#66d9ef" fill-opacity="0.5"/><rect x="17.12" y="90" width="2.14" height="1.75" fill="#f8f8f2" fill-opacity="0.34"/><rect x="20.33" y="90" width="1.07" height="1.75" fill="#f8f8f2" fill-opacity="0.34"/><rect x="22.47" y="90" width="14.98" height="1.75" fill="#f8f8f2" fill-opacity="0.34"/><rect x="8.56" y="92" width="7.49" height="1.75" fill="#66d9ef" fill-opacity="0.5"/><rect x="17.12" y="92" width="2.14" height="1.75" fill="#f8f8f2" fill-opacity="0.34"/><rect x="20.33" y="92" width="1.07" height="1.75" fill="#f8f8f2" fill-opacity="0.34"/><rect x="22.47" y="92" width="12.84" height="1.75" fill="#f8f8f2" fill-opacity="0.34"/><rect x="36.38" y="92" width="1.07" height="1.75" fill="#f8f8f2" fill-opacity="0.34"/><rect x="38.52" y="92" width="1.07" height="1.75" fill="#ae81ff" fill-opacity="0.55"/><rect x="39.59" y="92" width="2.14" height="1.75" fill="#f8f8f2" fill-opacity="0.34"/><rect x="8.56" y="94" width="7.49" height="1.75" fill="#66d9ef" fill-opacity="0.5"/><rect x="17.12" y="94" width="2.14" height="1.75" fill="#f8f8f2" fill-opacity="0.34"/><rect x="20.33" y="94" width="1.07" height="1.75" fill="#f8f8f2" fill-opacity="0.34"/><rect x="22.47" y="94" width="12.84" height="1.75" fill="#f8f8f2" fill-opacity="0.34"/><rect x="36.38" y="94" width="1.07" height="1.75" fill="#f8f8f2" fill-opacity="0.34"/><rect x="38.52" y="94" width="1.07" height="1.75" fill="#ae81ff" fill-opacity="0.55"/><rect x="39.59" y="94" width="2.14" height="1.75" fill="#f8f8f2" fill-opacity="0.34"/><rect x="8.56" y="98" width="11.77" height="1.75" fill="#f8f8f2" fill-opacity="0.34"/><rect x="21.40" y="98" width="1.07" height="1.75" fill="#f8f8f2" fill-opacity="0.34"/><rect x="23.54" y="98" width="1.07" height="1.75" fill="#ae81ff" fill-opacity="0.55"/><rect x="24.61" y="98" width="1.07" height="1.75" fill="#f8f8f2" fill-opacity="0.34"/><rect x="26.75" y="98" width="1.07" height="1.75" fill="#f8f8f2" fill-opacity="0.34"/><rect x="28.89" y="98" width="11.77" height="1.75" fill="#f8f8f2" fill-opacity="0.34"/><rect x="41.73" y="98" width="1.07" height="1.75" fill="#f8f8f2" fill-opacity="0.34"/><rect x="43.87" y="98" width="4.28" height="1.75" fill="#ae81ff" fill-opacity="0.55"/><rect x="48.15" y="98" width="1.07" height="1.75" fill="#f8f8f2" fill-opacity="0.34"/><rect x="50.29" y="98" width="2.14" height="1.75" fill="#f8f8f2" fill-opacity="0.34"/><rect x="53.50" y="98" width="1.07" height="1.75" fill="#ae81ff" fill-opacity="0.55"/><rect x="54.57" y="98" width="2.14" height="1.75" fill="#f8f8f2" fill-opacity="0.34"/><rect x="8.56" y="100" width="11.77" height="1.75" fill="#f8f8f2" fill-opacity="0.34"/><rect x="21.40" y="100" width="1.07" height="1.75" fill="#f8f8f2" fill-opacity="0.34"/><rect x="23.54" y="100" width="1.07" height="1.75" fill="#ae81ff" fill-opacity="0.55"/><rect x="24.61" y="100" width="1.07" height="1.75" fill="#f8f8f2" fill-opacity="0.34"/><rect x="26.75" y="100" width="1.07" height="1.75" fill="#f8f8f2" fill-opacity="0.34"/><rect x="28.89" y="100" width="12.84" height="1.75" fill="#f8f8f2" fill-opacity="0.34"/><rect x="42.80" y="100" width="1.07" height="1.75" fill="#f8f8f2" fill-opacity="0.34"/><rect x="44.94" y="100" width="4.28" height="1.75" fill="#ae81ff" fill-opacity="0.55"/><rect x="49.22" y="100" width="1.07" height="1.75" fill="#f8f8f2" fill-opacity="0.34"/><rect x="51.36" y="100" width="2.14" height="1.75" fill="#f8f8f2" fill-opacity="0.34"/><rect x="54.57" y="100" width="1.07" height="1.75" fill="#ae81ff" fill-opacity="0.55"/><rect x="55.64" y="100" width="1.07" height="1.75" fill="#f8f8f2" fill-opacity="0.34"/><rect x="57.78" y="100" width="1.07" height="1.75" fill="#f8f8f2" fill-opacity="0.34"/><rect x="59.92" y="100" width="4.28" height="1.75" fill="#f8f8f2" fill-opacity="0.34"/><rect x="65.27" y="100" width="1.07" height="1.75" fill="#f8f8f2" fill-opacity="0.34"/><rect x="67.41" y="100" width="4.28" height="1.75" fill="#ae81ff" fill-opacity="0.55"/><rect x="71.69" y="100" width="1.07" height="1.75" fill="#f8f8f2" fill-opacity="0.34"/><rect x="73.83" y="100" width="2.14" height="1.75" fill="#f8f8f2" fill-opacity="0.34"/><rect x="77.04" y="100" width="1.07" height="1.75" fill="#ae81ff" fill-opacity="0.55"/><rect x="78.11" y="100" width="3.21" height="1.75" fill="#f8f8f2" fill-opacity="0.34"/><rect x="8.56" y="102" width="11.77" height="1.75" fill="#f8f8f2" fill-opacity="0.34"/><rect x="21.40" y="102" width="1.07" height="1.75" fill="#f8f8f2" fill-opacity="0.34"/><rect x="23.54" y="102" width="1.07" height="1.75" fill="#ae81ff" fill-opacity="0.55"/><rect x="24.61" y="102" width="1.07" height="1.75" fill="#f8f8f2" fill-opacity="0.34"/><rect x="26.75" y="102" width="1.07" height="1.75" fill="#f8f8f2" fill-opacity="0.34"/><rect x="28.89" y="102" width="12.84" height="1.75" fill="#f8f8f2" fill-opacity="0.34"/><rect x="42.80" y="102" width="1.07" height="1.75" fill="#f8f8f2" fill-opacity="0.34"/><rect x="44.94" y="102" width="4.28" height="1.75" fill="#ae81ff" fill-opacity="0.55"/><rect x="49.22" y="102" width="1.07" height="1.75" fill="#f8f8f2" fill-opacity="0.34"/><rect x="51.36" y="102" width="2.14" height="1.75" fill="#f8f8f2" fill-opacity="0.34"/><rect x="54.57" y="102" width="1.07" height="1.75" fill="#ae81ff" fill-opacity="0.55"/><rect x="55.64" y="102" width="1.07" height="1.75" fill="#f8f8f2" fill-opacity="0.34"/><rect x="57.78" y="102" width="1.07" height="1.75" fill="#f8f8f2" fill-opacity="0.34"/><rect x="59.92" y="102" width="3.21" height="1.75" fill="#f8f8f2" fill-opacity="0.34"/><rect x="64.20" y="102" width="1.07" height="1.75" fill="#f8f8f2" fill-opacity="0.34"/><rect x="66.34" y="102" width="4.28" height="1.75" fill="#ae81ff" fill-opacity="0.55"/><rect x="70.62" y="102" width="1.07" height="1.75" fill="#f8f8f2" fill-opacity="0.34"/><rect x="72.76" y="102" width="2.14" height="1.75" fill="#f8f8f2" fill-opacity="0.34"/><rect x="75.97" y="102" width="1.07" height="1.75" fill="#ae81ff" fill-opacity="0.55"/><rect x="77.04" y="102" width="2.14" height="1.75" fill="#f8f8f2" fill-opacity="0.34"/><rect x="8.56" y="104" width="11.77" height="1.75" fill="#f8f8f2" fill-opacity="0.34"/><rect x="21.40" y="104" width="1.07" height="1.75" fill="#f8f8f2" fill-opacity="0.34"/><rect x="23.54" y="104" width="1.07" height="1.75" fill="#ae81ff" fill-opacity="0.55"/><rect x="24.61" y="104" width="1.07" height="1.75" fill="#f8f8f2" fill-opacity="0.34"/><rect x="26.75" y="104" width="1.07" height="1.75" fill="#f8f8f2" fill-opacity="0.34"/><rect x="28.89" y="104" width="11.77" height="1.75" fill="#f8f8f2" fill-opacity="0.34"/><rect x="41.73" y="104" width="1.07" height="1.75" fill="#f8f8f2" fill-opacity="0.34"/><rect x="43.87" y="104" width="4.28" height="1.75" fill="#ae81ff" fill-opacity="0.55"/><rect x="48.15" y="104" width="3.21" height="1.75" fill="#f8f8f2" fill-opacity="0.34"/><rect x="4.28" y="106" width="1.07" height="1.75" fill="#f8f8f2" fill-opacity="0.34"/><rect x="4.28" y="110" width="2.14" height="1.75" fill="#f92672" fill-opacity="0.5"/><rect x="7.49" y="110" width="8.56" height="1.75" fill="#f8f8f2" fill-opacity="0.34"/><rect x="17.12" y="110" width="1.07" height="1.75" fill="#f8f8f2" fill-opacity="0.34"/><rect x="19.26" y="110" width="7.49" height="1.75" fill="#f8f8f2" fill-opacity="0.34"/><rect x="4.28" y="112" width="1.07" height="1.75" fill="#f8f8f2" fill-opacity="0.34"/><rect x="8.56" y="114" width="7.49" height="1.75" fill="#66d9ef" fill-opacity="0.5"/><rect x="17.12" y="114" width="2.14" height="1.75" fill="#f8f8f2" fill-opacity="0.34"/><rect x="20.33" y="114" width="1.07" height="1.75" fill="#f8f8f2" fill-opacity="0.34"/><rect x="22.47" y="114" width="14.98" height="1.75" fill="#f8f8f2" fill-opacity="0.34"/><rect x="8.56" y="116" width="7.49" height="1.75" fill="#66d9ef" fill-opacity="0.5"/><rect x="17.12" y="116" width="2.14" height="1.75" fill="#f8f8f2" fill-opacity="0.34"/><rect x="20.33" y="116" width="1.07" height="1.75" fill="#f8f8f2" fill-opacity="0.34"/><rect x="22.47" y="116" width="8.56" height="1.75" fill="#f8f8f2" fill-opacity="0.34"/><rect x="32.10" y="116" width="1.07" height="1.75" fill="#f8f8f2" fill-opacity="0.34"/><rect x="34.24" y="116" width="1.07" height="1.75" fill="#ae81ff" fill-opacity="0.55"/><rect x="36.38" y="116" width="1.07" height="1.75" fill="#f8f8f2" fill-opacity="0.34"/><rect x="38.52" y="116" width="7.49" height="1.75" fill="#f8f8f2" fill-opacity="0.34"/><rect x="47.08" y="116" width="1.07" height="1.75" fill="#f8f8f2" fill-opacity="0.34"/><rect x="49.22" y="116" width="12.84" height="1.75" fill="#f8f8f2" fill-opacity="0.34"/><rect x="63.13" y="116" width="1.07" height="1.75" fill="#f8f8f2" fill-opacity="0.34"/><rect x="65.27" y="116" width="1.07" height="1.75" fill="#ae81ff" fill-opacity="0.55"/><rect x="66.34" y="116" width="1.07" height="1.75" fill="#f8f8f2" fill-opacity="0.34"/><rect x="68.48" y="116" width="1.07" height="1.75" fill="#f8f8f2" fill-opacity="0.34"/><rect x="70.62" y="116" width="1.07" height="1.75" fill="#ae81ff" fill-opacity="0.55"/><rect x="71.69" y="116" width="1.07" height="1.75" fill="#f8f8f2" fill-opacity="0.34"/><rect x="8.56" y="120" width="14.98" height="1.75" fill="#f8f8f2" fill-opacity="0.34"/><rect x="24.61" y="120" width="1.07" height="1.75" fill="#f8f8f2" fill-opacity="0.34"/><rect x="26.75" y="120" width="11.77" height="1.75" fill="#f8f8f2" fill-opacity="0.34"/><rect x="39.59" y="120" width="1.07" height="1.75" fill="#f8f8f2" fill-opacity="0.34"/><rect x="41.73" y="120" width="4.28" height="1.75" fill="#ae81ff" fill-opacity="0.55"/><rect x="46.01" y="120" width="1.07" height="1.75" fill="#f8f8f2" fill-opacity="0.34"/><rect x="48.15" y="120" width="2.14" height="1.75" fill="#f8f8f2" fill-opacity="0.34"/><rect x="51.36" y="120" width="1.07" height="1.75" fill="#ae81ff" fill-opacity="0.55"/><rect x="52.43" y="120" width="2.14" height="1.75" fill="#f8f8f2" fill-opacity="0.34"/><rect x="8.56" y="122" width="14.98" height="1.75" fill="#f8f8f2" fill-opacity="0.34"/><rect x="24.61" y="122" width="1.07" height="1.75" fill="#f8f8f2" fill-opacity="0.34"/><rect x="26.75" y="122" width="12.84" height="1.75" fill="#f8f8f2" fill-opacity="0.34"/><rect x="40.66" y="122" width="1.07" height="1.75" fill="#f8f8f2" fill-opacity="0.34"/><rect x="42.80" y="122" width="4.28" height="1.75" fill="#ae81ff" fill-opacity="0.55"/><rect x="47.08" y="122" width="1.07" height="1.75" fill="#f8f8f2" fill-opacity="0.34"/><rect x="49.22" y="122" width="2.14" height="1.75" fill="#f8f8f2" fill-opacity="0.34"/><rect x="52.43" y="122" width="1.07" height="1.75" fill="#ae81ff" fill-opacity="0.55"/><rect x="53.50" y="122" width="1.07" height="1.75" fill="#f8f8f2" fill-opacity="0.34"/><rect x="55.64" y="122" width="1.07" height="1.75" fill="#f8f8f2" fill-opacity="0.34"/><rect x="57.78" y="122" width="4.28" height="1.75" fill="#f8f8f2" fill-opacity="0.34"/><rect x="63.13" y="122" width="1.07" height="1.75" fill="#f8f8f2" fill-opacity="0.34"/><rect x="65.27" y="122" width="4.28" height="1.75" fill="#ae81ff" fill-opacity="0.55"/><rect x="69.55" y="122" width="1.07" height="1.75" fill="#f8f8f2" fill-opacity="0.34"/><rect x="71.69" y="122" width="2.14" height="1.75" fill="#f8f8f2" fill-opacity="0.34"/><rect x="74.90" y="122" width="1.07" height="1.75" fill="#ae81ff" fill-opacity="0.55"/><rect x="75.97" y="122" width="3.21" height="1.75" fill="#f8f8f2" fill-opacity="0.34"/><rect x="8.56" y="124" width="2.14" height="1.75" fill="#f92672" fill-opacity="0.5"/><rect x="11.77" y="124" width="8.56" height="1.75" fill="#f8f8f2" fill-opacity="0.34"/><rect x="21.40" y="124" width="1.07" height="1.75" fill="#f8f8f2" fill-opacity="0.34"/><rect x="23.54" y="124" width="1.07" height="1.75" fill="#ae81ff" fill-opacity="0.55"/><rect x="25.68" y="124" width="1.07" height="1.75" fill="#f8f8f2" fill-opacity="0.34"/><rect x="27.82" y="124" width="7.49" height="1.75" fill="#f8f8f2" fill-opacity="0.34"/><rect x="12.84" y="126" width="14.98" height="1.75" fill="#f8f8f2" fill-opacity="0.34"/><rect x="28.89" y="126" width="1.07" height="1.75" fill="#f8f8f2" fill-opacity="0.34"/><rect x="31.03" y="126" width="12.84" height="1.75" fill="#f8f8f2" fill-opacity="0.34"/><rect x="44.94" y="126" width="1.07" height="1.75" fill="#f8f8f2" fill-opacity="0.34"/><rect x="47.08" y="126" width="4.28" height="1.75" fill="#ae81ff" fill-opacity="0.55"/><rect x="51.36" y="126" width="1.07" height="1.75" fill="#f8f8f2" fill-opacity="0.34"/><rect x="53.50" y="126" width="2.14" height="1.75" fill="#f8f8f2" fill-opacity="0.34"/><rect x="56.71" y="126" width="1.07" height="1.75" fill="#ae81ff" fill-opacity="0.55"/><rect x="57.78" y="126" width="3.21" height="1.75" fill="#f8f8f2" fill-opacity="0.34"/><rect x="4.28" y="128" width="1.07" height="1.75" fill="#f8f8f2" fill-opacity="0.34"/><rect x="4.28" y="132" width="12.84" height="1.75" fill="#f8f8f2" fill-opacity="0.34"/><rect x="18.19" y="132" width="1.07" height="1.75" fill="#f8f8f2" fill-opacity="0.34"/><rect x="20.33" y="132" width="1.07" height="1.75" fill="#e6db74" fill-opacity="0.45"/><rect x="21.40" y="132" width="3.21" height="1.75" fill="#e6db74" fill-opacity="0.7"/><rect x="24.61" y="132" width="1.07" height="1.75" fill="#e6db74" fill-opacity="0.45"/><rect x="25.68" y="132" width="1.07" height="1.75" fill="#f8f8f2" fill-opacity="0.34"/><rect x="0.00" y="134" width="1.07" height="1.75" fill="#f8f8f2" fill-opacity="0.34"/><rect x="0.00" y="138" width="5.35" height="1.75" fill="#66d9ef" fill-opacity="0.5"/><rect x="6.42" y="138" width="17.12" height="1.75" fill="#f8f8f2" fill-opacity="0.34"/><rect x="23.54" y="138" width="3.21" height="1.75" fill="#ae81ff" fill-opacity="0.55"/><rect x="26.75" y="138" width="1.07" height="1.75" fill="#f8f8f2" fill-opacity="0.34"/><rect x="28.89" y="138" width="1.07" height="1.75" fill="#f8f8f2" fill-opacity="0.34"/><rect x="31.03" y="138" width="1.07" height="1.75" fill="#f8f8f2" fill-opacity="0.34"/><rect x="0.00" y="140" width="1.07" height="1.75" fill="#f8f8f2" fill-opacity="0.34"/><rect x="4.28" y="142" width="1.07" height="1.2" fill="#ae81ff" fill-opacity="0.55"/><rect x="5.35" y="142" width="2.14" height="1.2" fill="#f8f8f2" fill-opacity="0.25"/><rect x="8.56" y="142" width="1.07" height="1.2" fill="#ae81ff" fill-opacity="0.55"/><rect x="9.63" y="142" width="2.14" height="1.2" fill="#f8f8f2" fill-opacity="0.25"/><rect x="12.84" y="142" width="1.07" height="1.2" fill="#ae81ff" fill-opacity="0.55"/><rect x="13.91" y="142" width="2.14" height="1.2" fill="#f8f8f2" fill-opacity="0.25"/><rect x="17.12" y="142" width="1.07" height="1.2" fill="#ae81ff" fill-opacity="0.55"/><rect x="18.19" y="142" width="2.14" height="1.2" fill="#f8f8f2" fill-opacity="0.25"/><rect x="21.40" y="142" width="1.07" height="1.2" fill="#ae81ff" fill-opacity="0.55"/><rect x="22.47" y="142" width="2.14" height="1.2" fill="#f8f8f2" fill-opacity="0.25"/><rect x="25.68" y="142" width="1.07" height="1.2" fill="#ae81ff" fill-opacity="0.55"/><rect x="26.75" y="142" width="2.14" height="1.2" fill="#f8f8f2" fill-opacity="0.25"/><rect x="29.96" y="142" width="1.07" height="1.2" fill="#ae81ff" fill-opacity="0.55"/><rect x="31.03" y="142" width="2.14" height="1.2" fill="#f8f8f2" fill-opacity="0.25"/><rect x="34.24" y="142" width="1.07" height="1.2" fill="#ae81ff" fill-opacity="0.55"/><rect x="35.31" y="142" width="2.14" height="1.2" fill="#f8f8f2" fill-opacity="0.25"/><rect x="38.52" y="142" width="1.07" height="1.2" fill="#ae81ff" fill-opacity="0.55"/><rect x="39.59" y="142" width="2.14" height="1.2" fill="#f8f8f2" fill-opacity="0.25"/><rect x="42.80" y="142" width="1.07" height="1.2" fill="#ae81ff" fill-opacity="0.55"/><rect x="43.87" y="142" width="2.14" height="1.2" fill="#f8f8f2" fill-opacity="0.25"/><rect x="47.08" y="142" width="1.07" height="1.2" fill="#ae81ff" fill-opacity="0.55"/><rect x="48.15" y="142" width="2.14" height="1.2" fill="#f8f8f2" fill-opacity="0.25"/><rect x="51.36" y="142" width="1.07" height="1.2" fill="#ae81ff" fill-opacity="0.55"/><rect x="52.43" y="142" width="2.14" height="1.2" fill="#f8f8f2" fill-opacity="0.25"/><rect x="55.64" y="142" width="1.07" height="1.2" fill="#ae81ff" fill-opacity="0.55"/><rect x="56.71" y="142" width="2.14" height="1.2" fill="#f8f8f2" fill-opacity="0.25"/><rect x="59.92" y="142" width="1.07" height="1.2" fill="#ae81ff" fill-opacity="0.55"/><rect x="60.99" y="142" width="2.14" height="1.2" fill="#f8f8f2" fill-opacity="0.25"/><rect x="64.20" y="142" width="1.07" height="1.2" fill="#ae81ff" fill-opacity="0.55"/><rect x="65.27" y="142" width="2.14" height="1.2" fill="#f8f8f2" fill-opacity="0.25"/><rect x="68.48" y="142" width="1.07" height="1.2" fill="#ae81ff" fill-opacity="0.55"/><rect x="69.55" y="142" width="2.14" height="1.2" fill="#f8f8f2" fill-opacity="0.25"/><rect x="4.28" y="144" width="1.07" height="1.2" fill="#ae81ff" fill-opacity="0.55"/><rect x="5.35" y="144" width="2.14" height="1.2" fill="#f8f8f2" fill-opacity="0.25"/><rect x="8.56" y="144" width="1.07" height="1.2" fill="#ae81ff" fill-opacity="0.55"/><rect x="9.63" y="144" width="2.14" height="1.2" fill="#f8f8f2" fill-opacity="0.25"/><rect x="12.84" y="144" width="1.07" height="1.2" fill="#ae81ff" fill-opacity="0.55"/><rect x="13.91" y="144" width="2.14" height="1.2" fill="#f8f8f2" fill-opacity="0.25"/><rect x="17.12" y="144" width="1.07" height="1.2" fill="#ae81ff" fill-opacity="0.55"/><rect x="18.19" y="144" width="2.14" height="1.2" fill="#f8f8f2" fill-opacity="0.25"/><rect x="21.40" y="144" width="1.07" height="1.2" fill="#ae81ff" fill-opacity="0.55"/><rect x="22.47" y="144" width="2.14" height="1.2" fill="#f8f8f2" fill-opacity="0.25"/><rect x="25.68" y="144" width="1.07" height="1.2" fill="#ae81ff" fill-opacity="0.55"/><rect x="26.75" y="144" width="2.14" height="1.2" fill="#f8f8f2" fill-opacity="0.25"/><rect x="29.96" y="144" width="1.07" height="1.2" fill="#ae81ff" fill-opacity="0.55"/><rect x="31.03" y="144" width="2.14" height="1.2" fill="#f8f8f2" fill-opacity="0.25"/><rect x="34.24" y="144" width="1.07" height="1.2" fill="#ae81ff" fill-opacity="0.55"/><rect x="35.31" y="144" width="2.14" height="1.2" fill="#f8f8f2" fill-opacity="0.25"/><rect x="38.52" y="144" width="1.07" height="1.2" fill="#ae81ff" fill-opacity="0.55"/><rect x="39.59" y="144" width="2.14" height="1.2" fill="#f8f8f2" fill-opacity="0.25"/><rect x="42.80" y="144" width="1.07" height="1.2" fill="#ae81ff" fill-opacity="0.55"/><rect x="43.87" y="144" width="2.14" height="1.2" fill="#f8f8f2" fill-opacity="0.25"/><rect x="47.08" y="144" width="1.07" height="1.2" fill="#ae81ff" fill-opacity="0.55"/><rect x="48.15" y="144" width="2.14" height="1.2" fill="#f8f8f2" fill-opacity="0.25"/><rect x="51.36" y="144" width="1.07" height="1.2" fill="#ae81ff" fill-opacity="0.55"/><rect x="52.43" y="144" width="2.14" height="1.2" fill="#f8f8f2" fill-opacity="0.25"/><rect x="55.64" y="144" width="1.07" height="1.2" fill="#ae81ff" fill-opacity="0.55"/><rect x="56.71" y="144" width="2.14" height="1.2" fill="#f8f8f2" fill-opacity="0.25"/><rect x="59.92" y="144" width="1.07" height="1.2" fill="#ae81ff" fill-opacity="0.55"/><rect x="60.99" y="144" width="2.14" height="1.2" fill="#f8f8f2" fill-opacity="0.25"/><rect x="64.20" y="144" width="1.07" height="1.2" fill="#ae81ff" fill-opacity="0.55"/><rect x="65.27" y="144" width="2.14" height="1.2" fill="#f8f8f2" fill-opacity="0.25"/><rect x="68.48" y="144" width="1.07" height="1.2" fill="#ae81ff" fill-opacity="0.55"/><rect x="69.55" y="144" width="2.14" height="1.2" fill="#f8f8f2" fill-opacity="0.25"/><rect x="4.28" y="146" width="1.07" height="1.2" fill="#ae81ff" fill-opacity="0.55"/><rect x="5.35" y="146" width="2.14" height="1.2" fill="#f8f8f2" fill-opacity="0.25"/><rect x="8.56" y="146" width="1.07" height="1.2" fill="#ae81ff" fill-opacity="0.55"/><rect x="9.63" y="146" width="2.14" height="1.2" fill="#f8f8f2" fill-opacity="0.25"/><rect x="12.84" y="146" width="1.07" height="1.2" fill="#ae81ff" fill-opacity="0.55"/><rect x="13.91" y="146" width="2.14" height="1.2" fill="#f8f8f2" fill-opacity="0.25"/><rect x="17.12" y="146" width="1.07" height="1.2" fill="#ae81ff" fill-opacity="0.55"/><rect x="18.19" y="146" width="2.14" height="1.2" fill="#f8f8f2" fill-opacity="0.25"/><rect x="21.40" y="146" width="1.07" height="1.2" fill="#ae81ff" fill-opacity="0.55"/><rect x="22.47" y="146" width="2.14" height="1.2" fill="#f8f8f2" fill-opacity="0.25"/><rect x="25.68" y="146" width="1.07" height="1.2" fill="#ae81ff" fill-opacity="0.55"/><rect x="26.75" y="146" width="2.14" height="1.2" fill="#f8f8f2" fill-opacity="0.25"/><rect x="29.96" y="146" width="1.07" height="1.2" fill="#ae81ff" fill-opacity="0.55"/><rect x="31.03" y="146" width="2.14" height="1.2" fill="#f8f8f2" fill-opacity="0.25"/><rect x="34.24" y="146" width="1.07" height="1.2" fill="#ae81ff" fill-opacity="0.55"/><rect x="35.31" y="146" width="2.14" height="1.2" fill="#f8f8f2" fill-opacity="0.25"/><rect x="38.52" y="146" width="1.07" height="1.2" fill="#ae81ff" fill-opacity="0.55"/><rect x="39.59" y="146" width="2.14" height="1.2" fill="#f8f8f2" fill-opacity="0.25"/><rect x="42.80" y="146" width="1.07" height="1.2" fill="#ae81ff" fill-opacity="0.55"/><rect x="43.87" y="146" width="2.14" height="1.2" fill="#f8f8f2" fill-opacity="0.25"/><rect x="47.08" y="146" width="1.07" height="1.2" fill="#ae81ff" fill-opacity="0.55"/><rect x="48.15" y="146" width="2.14" height="1.2" fill="#f8f8f2" fill-opacity="0.25"/><rect x="51.36" y="146" width="1.07" height="1.2" fill="#ae81ff" fill-opacity="0.55"/><rect x="52.43" y="146" width="2.14" height="1.2" fill="#f8f8f2" fill-opacity="0.25"/><rect x="55.64" y="146" width="1.07" height="1.2" fill="#ae81ff" fill-opacity="0.55"/><rect x="56.71" y="146" width="2.14" height="1.2" fill="#f8f8f2" fill-opacity="0.25"/><rect x="59.92" y="146" width="1.07" height="1.2" fill="#ae81ff" fill-opacity="0.55"/><rect x="60.99" y="146" width="2.14" height="1.2" fill="#f8f8f2" fill-opacity="0.25"/><rect x="64.20" y="146" width="1.07" height="1.2" fill="#ae81ff" fill-opacity="0.55"/><rect x="65.27" y="146" width="2.14" height="1.2" fill="#f8f8f2" fill-opacity="0.25"/><rect x="68.48" y="146" width="1.07" height="1.2" fill="#ae81ff" fill-opacity="0.55"/><rect x="69.55" y="146" width="2.14" height="1.2" fill="#f8f8f2" fill-opacity="0.25"/><rect x="4.28" y="148" width="1.07" height="1.2" fill="#ae81ff" fill-opacity="0.55"/><rect x="5.35" y="148" width="2.14" height="1.2" fill="#f8f8f2" fill-opacity="0.25"/><rect x="8.56" y="148" width="1.07" height="1.2" fill="#ae81ff" fill-opacity="0.55"/><rect x="9.63" y="148" width="2.14" height="1.2" fill="#ae81ff" fill-opacity="0.45"/><rect x="12.84" y="148" width="1.07" height="1.2" fill="#ae81ff" fill-opacity="0.55"/><rect x="13.91" y="148" width="2.14" height="1.2" fill="#f8f8f2" fill-opacity="0.25"/><rect x="17.12" y="148" width="1.07" height="1.2" fill="#ae81ff" fill-opacity="0.55"/><rect x="18.19" y="148" width="2.14" height="1.2" fill="#f8f8f2" fill-opacity="0.25"/><rect x="21.40" y="148" width="1.07" height="1.2" fill="#ae81ff" fill-opacity="0.55"/><rect x="22.47" y="148" width="2.14" height="1.2" fill="#ae81ff" fill-opacity="0.45"/><rect x="25.68" y="148" width="1.07" height="1.2" fill="#ae81ff" fill-opacity="0.55"/><rect x="26.75" y="148" width="2.14" height="1.2" fill="#f8f8f2" fill-opacity="0.25"/><rect x="29.96" y="148" width="1.07" height="1.2" fill="#ae81ff" fill-opacity="0.55"/><rect x="31.03" y="148" width="2.14" height="1.2" fill="#f8f8f2" fill-opacity="0.25"/><rect x="34.24" y="148" width="1.07" height="1.2" fill="#ae81ff" fill-opacity="0.55"/><rect x="35.31" y="148" width="2.14" height="1.2" fill="#ae81ff" fill-opacity="0.45"/><rect x="38.52" y="148" width="1.07" height="1.2" fill="#ae81ff" fill-opacity="0.55"/><rect x="39.59" y="148" width="2.14" height="1.2" fill="#f8f8f2" fill-opacity="0.25"/><rect x="42.80" y="148" width="1.07" height="1.2" fill="#ae81ff" fill-opacity="0.55"/><rect x="43.87" y="148" width="2.14" height="1.2" fill="#f8f8f2" fill-opacity="0.25"/><rect x="47.08" y="148" width="1.07" height="1.2" fill="#ae81ff" fill-opacity="0.55"/><rect x="48.15" y="148" width="2.14" height="1.2" fill="#ae81ff" fill-opacity="0.45"/><rect x="51.36" y="148" width="1.07" height="1.2" fill="#ae81ff" fill-opacity="0.55"/><rect x="52.43" y="148" width="2.14" height="1.2" fill="#f8f8f2" fill-opacity="0.25"/><rect x="55.64" y="148" width="1.07" height="1.2" fill="#ae81ff" fill-opacity="0.55"/><rect x="56.71" y="148" width="2.14" height="1.2" fill="#f8f8f2" fill-opacity="0.25"/><rect x="59.92" y="148" width="1.07" height="1.2" fill="#ae81ff" fill-opacity="0.55"/><rect x="60.99" y="148" width="2.14" height="1.2" fill="#ae81ff" fill-opacity="0.45"/><rect x="64.20" y="148" width="1.07" height="1.2" fill="#ae81ff" fill-opacity="0.55"/><rect x="65.27" y="148" width="2.14" height="1.2" fill="#f8f8f2" fill-opacity="0.25"/><rect x="68.48" y="148" width="1.07" height="1.2" fill="#ae81ff" fill-opacity="0.55"/><rect x="69.55" y="148" width="2.14" height="1.2" fill="#f8f8f2" fill-opacity="0.25"/><rect x="4.28" y="150" width="1.07" height="1.2" fill="#ae81ff" fill-opacity="0.55"/><rect x="5.35" y="150" width="2.14" height="1.2" fill="#f8f8f2" fill-opacity="0.25"/><rect x="8.56" y="150" width="1.07" height="1.2" fill="#ae81ff" fill-opacity="0.55"/><rect x="9.63" y="150" width="2.14" height="1.2" fill="#ae81ff" fill-opacity="0.45"/><rect x="12.84" y="150" width="1.07" height="1.2" fill="#ae81ff" fill-opacity="0.55"/><rect x="13.91" y="150" width="2.14" height="1.2" fill="#f8f8f2" fill-opacity="0.25"/><rect x="17.12" y="150" width="1.07" height="1.2" fill="#ae81ff" fill-opacity="0.55"/><rect x="18.19" y="150" width="2.14" height="1.2" fill="#f8f8f2" fill-opacity="0.25"/><rect x="21.40" y="150" width="1.07" height="1.2" fill="#ae81ff" fill-opacity="0.55"/><rect x="22.47" y="150" width="2.14" height="1.2" fill="#ae81ff" fill-opacity="0.45"/><rect x="25.68" y="150" width="1.07" height="1.2" fill="#ae81ff" fill-opacity="0.55"/><rect x="26.75" y="150" width="2.14" height="1.2" fill="#f8f8f2" fill-opacity="0.25"/><rect x="29.96" y="150" width="1.07" height="1.2" fill="#ae81ff" fill-opacity="0.55"/><rect x="31.03" y="150" width="2.14" height="1.2" fill="#f8f8f2" fill-opacity="0.25"/><rect x="34.24" y="150" width="1.07" height="1.2" fill="#ae81ff" fill-opacity="0.55"/><rect x="35.31" y="150" width="2.14" height="1.2" fill="#ae81ff" fill-opacity="0.45"/><rect x="38.52" y="150" width="1.07" height="1.2" fill="#ae81ff" fill-opacity="0.55"/><rect x="39.59" y="150" width="2.14" height="1.2" fill="#f8f8f2" fill-opacity="0.25"/><rect x="42.80" y="150" width="1.07" height="1.2" fill="#ae81ff" fill-opacity="0.55"/><rect x="43.87" y="150" width="2.14" height="1.2" fill="#f8f8f2" fill-opacity="0.25"/><rect x="47.08" y="150" width="1.07" height="1.2" fill="#ae81ff" fill-opacity="0.55"/><rect x="48.15" y="150" width="2.14" height="1.2" fill="#ae81ff" fill-opacity="0.45"/><rect x="51.36" y="150" width="1.07" height="1.2" fill="#ae81ff" fill-opacity="0.55"/><rect x="52.43" y="150" width="2.14" height="1.2" fill="#f8f8f2" fill-opacity="0.25"/><rect x="55.64" y="150" width="1.07" height="1.2" fill="#ae81ff" fill-opacity="0.55"/><rect x="56.71" y="150" width="2.14" height="1.2" fill="#f8f8f2" fill-opacity="0.25"/><rect x="59.92" y="150" width="1.07" height="1.2" fill="#ae81ff" fill-opacity="0.55"/><rect x="60.99" y="150" width="2.14" height="1.2" fill="#ae81ff" fill-opacity="0.45"/><rect x="64.20" y="150" width="1.07" height="1.2" fill="#ae81ff" fill-opacity="0.55"/><rect x="65.27" y="150" width="2.14" height="1.2" fill="#f8f8f2" fill-opacity="0.25"/><rect x="68.48" y="150" width="1.07" height="1.2" fill="#ae81ff" fill-opacity="0.55"/><rect x="69.55" y="150" width="2.14" height="1.2" fill="#f8f8f2" fill-opacity="0.25"/><rect x="4.28" y="152" width="1.07" height="1.2" fill="#ae81ff" fill-opacity="0.55"/><rect x="5.35" y="152" width="2.14" height="1.2" fill="#f8f8f2" fill-opacity="0.25"/><rect x="8.56" y="152" width="1.07" height="1.2" fill="#ae81ff" fill-opacity="0.55"/><rect x="9.63" y="152" width="2.14" height="1.2" fill="#ae81ff" fill-opacity="0.45"/><rect x="12.84" y="152" width="1.07" height="1.2" fill="#ae81ff" fill-opacity="0.55"/><rect x="13.91" y="152" width="2.14" height="1.2" fill="#f8f8f2" fill-opacity="0.25"/><rect x="17.12" y="152" width="1.07" height="1.2" fill="#ae81ff" fill-opacity="0.55"/><rect x="18.19" y="152" width="2.14" height="1.2" fill="#f8f8f2" fill-opacity="0.25"/><rect x="21.40" y="152" width="1.07" height="1.2" fill="#ae81ff" fill-opacity="0.55"/><rect x="22.47" y="152" width="2.14" height="1.2" fill="#ae81ff" fill-opacity="0.45"/><rect x="25.68" y="152" width="1.07" height="1.2" fill="#ae81ff" fill-opacity="0.55"/><rect x="26.75" y="152" width="2.14" height="1.2" fill="#f8f8f2" fill-opacity="0.25"/><rect x="29.96" y="152" width="1.07" height="1.2" fill="#ae81ff" fill-opacity="0.55"/><rect x="31.03" y="152" width="2.14" height="1.2" fill="#f8f8f2" fill-opacity="0.25"/><rect x="34.24" y="152" width="1.07" height="1.2" fill="#ae81ff" fill-opacity="0.55"/><rect x="35.31" y="152" width="2.14" height="1.2" fill="#ae81ff" fill-opacity="0.45"/><rect x="38.52" y="152" width="1.07" height="1.2" fill="#ae81ff" fill-opacity="0.55"/><rect x="39.59" y="152" width="2.14" height="1.2" fill="#f8f8f2" fill-opacity="0.25"/><rect x="42.80" y="152" width="1.07" height="1.2" fill="#ae81ff" fill-opacity="0.55"/><rect x="43.87" y="152" width="2.14" height="1.2" fill="#f8f8f2" fill-opacity="0.25"/><rect x="47.08" y="152" width="1.07" height="1.2" fill="#ae81ff" fill-opacity="0.55"/><rect x="48.15" y="152" width="2.14" height="1.2" fill="#ae81ff" fill-opacity="0.45"/><rect x="51.36" y="152" width="1.07" height="1.2" fill="#ae81ff" fill-opacity="0.55"/><rect x="52.43" y="152" width="2.14" height="1.2" fill="#f8f8f2" fill-opacity="0.25"/><rect x="55.64" y="152" width="1.07" height="1.2" fill="#ae81ff" fill-opacity="0.55"/><rect x="56.71" y="152" width="2.14" height="1.2" fill="#f8f8f2" fill-opacity="0.25"/><rect x="59.92" y="152" width="1.07" height="1.2" fill="#ae81ff" fill-opacity="0.55"/><rect x="60.99" y="152" width="2.14" height="1.2" fill="#ae81ff" fill-opacity="0.45"/><rect x="64.20" y="152" width="1.07" height="1.2" fill="#ae81ff" fill-opacity="0.55"/><rect x="65.27" y="152" width="2.14" height="1.2" fill="#f8f8f2" fill-opacity="0.25"/><rect x="68.48" y="152" width="1.07" height="1.2" fill="#ae81ff" fill-opacity="0.55"/><rect x="69.55" y="152" width="2.14" height="1.2" fill="#f8f8f2" fill-opacity="0.25"/><rect x="4.28" y="154" width="1.07" height="1.2" fill="#ae81ff" fill-opacity="0.55"/><rect x="5.35" y="154" width="2.14" height="1.2" fill="#f8f8f2" fill-opacity="0.25"/><rect x="8.56" y="154" width="1.07" height="1.2" fill="#ae81ff" fill-opacity="0.55"/><rect x="9.63" y="154" width="2.14" height="1.2" fill="#ae81ff" fill-opacity="0.45"/><rect x="12.84" y="154" width="1.07" height="1.2" fill="#ae81ff" fill-opacity="0.55"/><rect x="13.91" y="154" width="2.14" height="1.2" fill="#f8f8f2" fill-opacity="0.25"/><rect x="17.12" y="154" width="1.07" height="1.2" fill="#ae81ff" fill-opacity="0.55"/><rect x="18.19" y="154" width="2.14" height="1.2" fill="#f8f8f2" fill-opacity="0.25"/><rect x="21.40" y="154" width="1.07" height="1.2" fill="#ae81ff" fill-opacity="0.55"/><rect x="22.47" y="154" width="2.14" height="1.2" fill="#ae81ff" fill-opacity="0.45"/><rect x="25.68" y="154" width="1.07" height="1.2" fill="#ae81ff" fill-opacity="0.55"/><rect x="26.75" y="154" width="2.14" height="1.2" fill="#f8f8f2" fill-opacity="0.25"/><rect x="29.96" y="154" width="1.07" height="1.2" fill="#ae81ff" fill-opacity="0.55"/><rect x="31.03" y="154" width="2.14" height="1.2" fill="#f8f8f2" fill-opacity="0.25"/><rect x="34.24" y="154" width="1.07" height="1.2" fill="#ae81ff" fill-opacity="0.55"/><rect x="35.31" y="154" width="2.14" height="1.2" fill="#ae81ff" fill-opacity="0.45"/><rect x="38.52" y="154" width="1.07" height="1.2" fill="#ae81ff" fill-opacity="0.55"/><rect x="39.59" y="154" width="2.14" height="1.2" fill="#f8f8f2" fill-opacity="0.25"/><rect x="42.80" y="154" width="1.07" height="1.2" fill="#ae81ff" fill-opacity="0.55"/><rect x="43.87" y="154" width="2.14" height="1.2" fill="#f8f8f2" fill-opacity="0.25"/><rect x="47.08" y="154" width="1.07" height="1.2" fill="#ae81ff" fill-opacity="0.55"/><rect x="48.15" y="154" width="2.14" height="1.2" fill="#ae81ff" fill-opacity="0.45"/><rect x="51.36" y="154" width="1.07" height="1.2" fill="#ae81ff" fill-opacity="0.55"/><rect x="52.43" y="154" width="2.14" height="1.2" fill="#f8f8f2" fill-opacity="0.25"/><rect x="55.64" y="154" width="1.07" height="1.2" fill="#ae81ff" fill-opacity="0.55"/><rect x="56.71" y="154" width="2.14" height="1.2" fill="#f8f8f2" fill-opacity="0.25"/><rect x="59.92" y="154" width="1.07" height="1.2" fill="#ae81ff" fill-opacity="0.55"/><rect x="60.99" y="154" width="2.14" height="1.2" fill="#ae81ff" fill-opacity="0.45"/><rect x="64.20" y="154" width="1.07" height="1.2" fill="#ae81ff" fill-opacity="0.55"/><rect x="65.27" y="154" width="2.14" height="1.2" fill="#f8f8f2" fill-opacity="0.25"/><rect x="68.48" y="154" width="1.07" height="1.2" fill="#ae81ff" fill-opacity="0.55"/><rect x="69.55" y="154" width="2.14" height="1.2" fill="#f8f8f2" fill-opacity="0.25"/><rect x="4.28" y="156" width="1.07" height="1.2" fill="#ae81ff" fill-opacity="0.55"/><rect x="5.35" y="156" width="2.14" height="1.2" fill="#f8f8f2" fill-opacity="0.25"/><rect x="8.56" y="156" width="1.07" height="1.2" fill="#ae81ff" fill-opacity="0.55"/><rect x="9.63" y="156" width="2.14" height="1.2" fill="#ae81ff" fill-opacity="0.45"/><rect x="12.84" y="156" width="1.07" height="1.2" fill="#ae81ff" fill-opacity="0.55"/><rect x="13.91" y="156" width="2.14" height="1.2" fill="#f8f8f2" fill-opacity="0.25"/><rect x="17.12" y="156" width="1.07" height="1.2" fill="#ae81ff" fill-opacity="0.55"/><rect x="18.19" y="156" width="2.14" height="1.2" fill="#f8f8f2" fill-opacity="0.25"/><rect x="21.40" y="156" width="1.07" height="1.2" fill="#ae81ff" fill-opacity="0.55"/><rect x="22.47" y="156" width="2.14" height="1.2" fill="#ae81ff" fill-opacity="0.45"/><rect x="25.68" y="156" width="1.07" height="1.2" fill="#ae81ff" fill-opacity="0.55"/><rect x="26.75" y="156" width="2.14" height="1.2" fill="#f8f8f2" fill-opacity="0.25"/><rect x="29.96" y="156" width="1.07" height="1.2" fill="#ae81ff" fill-opacity="0.55"/><rect x="31.03" y="156" width="2.14" height="1.2" fill="#f8f8f2" fill-opacity="0.25"/><rect x="34.24" y="156" width="1.07" height="1.2" fill="#ae81ff" fill-opacity="0.55"/><rect x="35.31" y="156" width="2.14" height="1.2" fill="#ae81ff" fill-opacity="0.45"/><rect x="38.52" y="156" width="1.07" height="1.2" fill="#ae81ff" fill-opacity="0.55"/><rect x="39.59" y="156" width="2.14" height="1.2" fill="#f8f8f2" fill-opacity="0.25"/><rect x="42.80" y="156" width="1.07" height="1.2" fill="#ae81ff" fill-opacity="0.55"/><rect x="43.87" y="156" width="2.14" height="1.2" fill="#f8f8f2" fill-opacity="0.25"/><rect x="47.08" y="156" width="1.07" height="1.2" fill="#ae81ff" fill-opacity="0.55"/><rect x="48.15" y="156" width="2.14" height="1.2" fill="#ae81ff" fill-opacity="0.45"/><rect x="51.36" y="156" width="1.07" height="1.2" fill="#ae81ff" fill-opacity="0.55"/><rect x="52.43" y="156" width="2.14" height="1.2" fill="#f8f8f2" fill-opacity="0.25"/><rect x="55.64" y="156" width="1.07" height="1.2" fill="#ae81ff" fill-opacity="0.55"/><rect x="56.71" y="156" width="2.14" height="1.2" fill="#f8f8f2" fill-opacity="0.25"/><rect x="59.92" y="156" width="1.07" height="1.2" fill="#ae81ff" fill-opacity="0.55"/><rect x="60.99" y="156" width="2.14" height="1.2" fill="#ae81ff" fill-opacity="0.45"/><rect x="64.20" y="156" width="1.07" height="1.2" fill="#ae81ff" fill-opacity="0.55"/><rect x="65.27" y="156" width="2.14" height="1.2" fill="#f8f8f2" fill-opacity="0.25"/><rect x="68.48" y="156" width="1.07" height="1.2" fill="#ae81ff" fill-opacity="0.55"/><rect x="69.55" y="156" width="2.14" height="1.2" fill="#f8f8f2" fill-opacity="0.25"/><rect x="4.28" y="158" width="1.07" height="1.2" fill="#ae81ff" fill-opacity="0.55"/><rect x="5.35" y="158" width="2.14" height="1.2" fill="#f8f8f2" fill-opacity="0.25"/><rect x="8.56" y="158" width="1.07" height="1.2" fill="#ae81ff" fill-opacity="0.55"/><rect x="9.63" y="158" width="2.14" height="1.2" fill="#ae81ff" fill-opacity="0.45"/><rect x="12.84" y="158" width="1.07" height="1.2" fill="#ae81ff" fill-opacity="0.55"/><rect x="13.91" y="158" width="2.14" height="1.2" fill="#f8f8f2" fill-opacity="0.25"/><rect x="17.12" y="158" width="1.07" height="1.2" fill="#ae81ff" fill-opacity="0.55"/><rect x="18.19" y="158" width="2.14" height="1.2" fill="#f8f8f2" fill-opacity="0.25"/><rect x="21.40" y="158" width="1.07" height="1.2" fill="#ae81ff" fill-opacity="0.55"/><rect x="22.47" y="158" width="2.14" height="1.2" fill="#ae81ff" fill-opacity="0.45"/><rect x="25.68" y="158" width="1.07" height="1.2" fill="#ae81ff" fill-opacity="0.55"/><rect x="26.75" y="158" width="2.14" height="1.2" fill="#f8f8f2" fill-opacity="0.25"/><rect x="29.96" y="158" width="1.07" height="1.2" fill="#ae81ff" fill-opacity="0.55"/><rect x="31.03" y="158" width="2.14" height="1.2" fill="#f8f8f2" fill-opacity="0.25"/><rect x="34.24" y="158" width="1.07" height="1.2" fill="#ae81ff" fill-opacity="0.55"/><rect x="35.31" y="158" width="2.14" height="1.2" fill="#ae81ff" fill-opacity="0.45"/><rect x="38.52" y="158" width="1.07" height="1.2" fill="#ae81ff" fill-opacity="0.55"/><rect x="39.59" y="158" width="2.14" height="1.2" fill="#f8f8f2" fill-opacity="0.25"/><rect x="42.80" y="158" width="1.07" height="1.2" fill="#ae81ff" fill-opacity="0.55"/><rect x="43.87" y="158" width="2.14" height="1.2" fill="#f8f8f2" fill-opacity="0.25"/><rect x="47.08" y="158" width="1.07" height="1.2" fill="#ae81ff" fill-opacity="0.55"/><rect x="48.15" y="158" width="2.14" height="1.2" fill="#ae81ff" fill-opacity="0.45"/><rect x="51.36" y="158" width="1.07" height="1.2" fill="#ae81ff" fill-opacity="0.55"/><rect x="52.43" y="158" width="2.14" height="1.2" fill="#f8f8f2" fill-opacity="0.25"/><rect x="55.64" y="158" width="1.07" height="1.2" fill="#ae81ff" fill-opacity="0.55"/><rect x="56.71" y="158" width="2.14" height="1.2" fill="#f8f8f2" fill-opacity="0.25"/><rect x="59.92" y="158" width="1.07" height="1.2" fill="#ae81ff" fill-opacity="0.55"/><rect x="60.99" y="158" width="2.14" height="1.2" fill="#ae81ff" fill-opacity="0.45"/><rect x="64.20" y="158" width="1.07" height="1.2" fill="#ae81ff" fill-opacity="0.55"/><rect x="65.27" y="158" width="2.14" height="1.2" fill="#f8f8f2" fill-opacity="0.25"/><rect x="68.48" y="158" width="1.07" height="1.2" fill="#ae81ff" fill-opacity="0.55"/><rect x="69.55" y="158" width="2.14" height="1.2" fill="#f8f8f2" fill-opacity="0.25"/><rect x="4.28" y="160" width="1.07" height="1.2" fill="#ae81ff" fill-opacity="0.55"/><rect x="5.35" y="160" width="2.14" height="1.2" fill="#f8f8f2" fill-opacity="0.25"/><rect x="8.56" y="160" width="1.07" height="1.2" fill="#ae81ff" fill-opacity="0.55"/><rect x="9.63" y="160" width="2.14" height="1.2" fill="#ae81ff" fill-opacity="0.45"/><rect x="12.84" y="160" width="1.07" height="1.2" fill="#ae81ff" fill-opacity="0.55"/><rect x="13.91" y="160" width="2.14" height="1.2" fill="#f8f8f2" fill-opacity="0.25"/><rect x="17.12" y="160" width="1.07" height="1.2" fill="#ae81ff" fill-opacity="0.55"/><rect x="18.19" y="160" width="2.14" height="1.2" fill="#f8f8f2" fill-opacity="0.25"/><rect x="21.40" y="160" width="1.07" height="1.2" fill="#ae81ff" fill-opacity="0.55"/><rect x="22.47" y="160" width="2.14" height="1.2" fill="#ae81ff" fill-opacity="0.45"/><rect x="25.68" y="160" width="1.07" height="1.2" fill="#ae81ff" fill-opacity="0.55"/><rect x="26.75" y="160" width="2.14" height="1.2" fill="#f8f8f2" fill-opacity="0.25"/><rect x="29.96" y="160" width="1.07" height="1.2" fill="#ae81ff" fill-opacity="0.55"/><rect x="31.03" y="160" width="2.14" height="1.2" fill="#f8f8f2" fill-opacity="0.25"/><rect x="34.24" y="160" width="1.07" height="1.2" fill="#ae81ff" fill-opacity="0.55"/><rect x="35.31" y="160" width="2.14" height="1.2" fill="#ae81ff" fill-opacity="0.45"/><rect x="38.52" y="160" width="1.07" height="1.2" fill="#ae81ff" fill-opacity="0.55"/><rect x="39.59" y="160" width="2.14" height="1.2" fill="#f8f8f2" fill-opacity="0.25"/><rect x="42.80" y="160" width="1.07" height="1.2" fill="#ae81ff" fill-opacity="0.55"/><rect x="43.87" y="160" width="2.14" height="1.2" fill="#f8f8f2" fill-opacity="0.25"/><rect x="47.08" y="160" width="1.07" height="1.2" fill="#ae81ff" fill-opacity="0.55"/><rect x="48.15" y="160" width="2.14" height="1.2" fill="#ae81ff" fill-opacity="0.45"/><rect x="51.36" y="160" width="1.07" height="1.2" fill="#ae81ff" fill-opacity="0.55"/><rect x="52.43" y="160" width="2.14" height="1.2" fill="#f8f8f2" fill-opacity="0.25"/><rect x="55.64" y="160" width="1.07" height="1.2" fill="#ae81ff" fill-opacity="0.55"/><rect x="56.71" y="160" width="2.14" height="1.2" fill="#f8f8f2" fill-opacity="0.25"/><rect x="59.92" y="160" width="1.07" height="1.2" fill="#ae81ff" fill-opacity="0.55"/><rect x="60.99" y="160" width="2.14" height="1.2" fill="#ae81ff" fill-opacity="0.45"/><rect x="64.20" y="160" width="1.07" height="1.2" fill="#ae81ff" fill-opacity="0.55"/><rect x="65.27" y="160" width="2.14" height="1.2" fill="#f8f8f2" fill-opacity="0.25"/><rect x="68.48" y="160" width="1.07" height="1.2" fill="#ae81ff" fill-opacity="0.55"/><rect x="69.55" y="160" width="2.14" height="1.2" fill="#f8f8f2" fill-opacity="0.25"/><rect x="4.28" y="162" width="1.07" height="1.2" fill="#ae81ff" fill-opacity="0.55"/><rect x="5.35" y="162" width="2.14" height="1.2" fill="#f8f8f2" fill-opacity="0.25"/><rect x="8.56" y="162" width="1.07" height="1.2" fill="#ae81ff" fill-opacity="0.55"/><rect x="9.63" y="162" width="2.14" height="1.2" fill="#ae81ff" fill-opacity="0.45"/><rect x="12.84" y="162" width="1.07" height="1.2" fill="#ae81ff" fill-opacity="0.55"/><rect x="13.91" y="162" width="2.14" height="1.2" fill="#f8f8f2" fill-opacity="0.25"/><rect x="17.12" y="162" width="1.07" height="1.2" fill="#ae81ff" fill-opacity="0.55"/><rect x="18.19" y="162" width="2.14" height="1.2" fill="#f8f8f2" fill-opacity="0.25"/><rect x="21.40" y="162" width="1.07" height="1.2" fill="#ae81ff" fill-opacity="0.55"/><rect x="22.47" y="162" width="2.14" height="1.2" fill="#ae81ff" fill-opacity="0.45"/><rect x="25.68" y="162" width="1.07" height="1.2" fill="#ae81ff" fill-opacity="0.55"/><rect x="26.75" y="162" width="2.14" height="1.2" fill="#f8f8f2" fill-opacity="0.25"/><rect x="29.96" y="162" width="1.07" height="1.2" fill="#ae81ff" fill-opacity="0.55"/><rect x="31.03" y="162" width="2.14" height="1.2" fill="#f8f8f2" fill-opacity="0.25"/><rect x="34.24" y="162" width="1.07" height="1.2" fill="#ae81ff" fill-opacity="0.55"/><rect x="35.31" y="162" width="2.14" height="1.2" fill="#ae81ff" fill-opacity="0.45"/><rect x="38.52" y="162" width="1.07" height="1.2" fill="#ae81ff" fill-opacity="0.55"/><rect x="39.59" y="162" width="2.14" height="1.2" fill="#f8f8f2" fill-opacity="0.25"/><rect x="42.80" y="162" width="1.07" height="1.2" fill="#ae81ff" fill-opacity="0.55"/><rect x="43.87" y="162" width="2.14" height="1.2" fill="#f8f8f2" fill-opacity="0.25"/><rect x="47.08" y="162" width="1.07" height="1.2" fill="#ae81ff" fill-opacity="0.55"/><rect x="48.15" y="162" width="2.14" height="1.2" fill="#ae81ff" fill-opacity="0.45"/><rect x="51.36" y="162" width="1.07" height="1.2" fill="#ae81ff" fill-opacity="0.55"/><rect x="52.43" y="162" width="2.14" height="1.2" fill="#f8f8f2" fill-opacity="0.25"/><rect x="55.64" y="162" width="1.07" height="1.2" fill="#ae81ff" fill-opacity="0.55"/><rect x="56.71" y="162" width="2.14" height="1.2" fill="#f8f8f2" fill-opacity="0.25"/><rect x="59.92" y="162" width="1.07" height="1.2" fill="#ae81ff" fill-opacity="0.55"/><rect x="60.99" y="162" width="2.14" height="1.2" fill="#ae81ff" fill-opacity="0.45"/><rect x="64.20" y="162" width="1.07" height="1.2" fill="#ae81ff" fill-opacity="0.55"/><rect x="65.27" y="162" width="2.14" height="1.2" fill="#f8f8f2" fill-opacity="0.25"/><rect x="68.48" y="162" width="1.07" height="1.2" fill="#ae81ff" fill-opacity="0.55"/><rect x="69.55" y="162" width="2.14" height="1.2" fill="#f8f8f2" fill-opacity="0.25"/><rect x="4.28" y="164" width="1.07" height="1.2" fill="#ae81ff" fill-opacity="0.55"/><rect x="5.35" y="164" width="2.14" height="1.2" fill="#f8f8f2" fill-opacity="0.25"/><rect x="8.56" y="164" width="1.07" height="1.2" fill="#ae81ff" fill-opacity="0.55"/><rect x="9.63" y="164" width="2.14" height="1.2" fill="#ae81ff" fill-opacity="0.45"/><rect x="12.84" y="164" width="1.07" height="1.2" fill="#ae81ff" fill-opacity="0.55"/><rect x="13.91" y="164" width="2.14" height="1.2" fill="#f8f8f2" fill-opacity="0.25"/><rect x="17.12" y="164" width="1.07" height="1.2" fill="#ae81ff" fill-opacity="0.55"/><rect x="18.19" y="164" width="2.14" height="1.2" fill="#f8f8f2" fill-opacity="0.25"/><rect x="21.40" y="164" width="1.07" height="1.2" fill="#ae81ff" fill-opacity="0.55"/><rect x="22.47" y="164" width="2.14" height="1.2" fill="#ae81ff" fill-opacity="0.45"/><rect x="25.68" y="164" width="1.07" height="1.2" fill="#ae81ff" fill-opacity="0.55"/><rect x="26.75" y="164" width="2.14" height="1.2" fill="#f8f8f2" fill-opacity="0.25"/><rect x="29.96" y="164" width="1.07" height="1.2" fill="#ae81ff" fill-opacity="0.55"/><rect x="31.03" y="164" width="2.14" height="1.2" fill="#f8f8f2" fill-opacity="0.25"/><rect x="34.24" y="164" width="1.07" height="1.2" fill="#ae81ff" fill-opacity="0.55"/><rect x="35.31" y="164" width="2.14" height="1.2" fill="#ae81ff" fill-opacity="0.45"/><rect x="38.52" y="164" width="1.07" height="1.2" fill="#ae81ff" fill-opacity="0.55"/><rect x="39.59" y="164" width="2.14" height="1.2" fill="#f8f8f2" fill-opacity="0.25"/><rect x="42.80" y="164" width="1.07" height="1.2" fill="#ae81ff" fill-opacity="0.55"/><rect x="43.87" y="164" width="2.14" height="1.2" fill="#f8f8f2" fill-opacity="0.25"/><rect x="47.08" y="164" width="1.07" height="1.2" fill="#ae81ff" fill-opacity="0.55"/><rect x="48.15" y="164" width="2.14" height="1.2" fill="#ae81ff" fill-opacity="0.45"/><rect x="51.36" y="164" width="1.07" height="1.2" fill="#ae81ff" fill-opacity="0.55"/><rect x="52.43" y="164" width="2.14" height="1.2" fill="#f8f8f2" fill-opacity="0.25"/><rect x="55.64" y="164" width="1.07" height="1.2" fill="#ae81ff" fill-opacity="0.55"/><rect x="56.71" y="164" width="2.14" height="1.2" fill="#f8f8f2" fill-opacity="0.25"/><rect x="59.92" y="164" width="1.07" height="1.2" fill="#ae81ff" fill-opacity="0.55"/><rect x="60.99" y="164" width="2.14" height="1.2" fill="#ae81ff" fill-opacity="0.45"/><rect x="64.20" y="164" width="1.07" height="1.2" fill="#ae81ff" fill-opacity="0.55"/><rect x="65.27" y="164" width="2.14" height="1.2" fill="#f8f8f2" fill-opacity="0.25"/><rect x="68.48" y="164" width="1.07" height="1.2" fill="#ae81ff" fill-opacity="0.55"/><rect x="69.55" y="164" width="2.14" height="1.2" fill="#f8f8f2" fill-opacity="0.25"/><rect x="4.28" y="166" width="1.07" height="1.2" fill="#ae81ff" fill-opacity="0.55"/><rect x="5.35" y="166" width="2.14" height="1.2" fill="#f8f8f2" fill-opacity="0.25"/><rect x="8.56" y="166" width="1.07" height="1.2" fill="#ae81ff" fill-opacity="0.55"/><rect x="9.63" y="166" width="2.14" height="1.2" fill="#f8f8f2" fill-opacity="0.25"/><rect x="12.84" y="166" width="1.07" height="1.2" fill="#ae81ff" fill-opacity="0.55"/><rect x="13.91" y="166" width="2.14" height="1.2" fill="#f8f8f2" fill-opacity="0.25"/><rect x="17.12" y="166" width="1.07" height="1.2" fill="#ae81ff" fill-opacity="0.55"/><rect x="18.19" y="166" width="2.14" height="1.2" fill="#f8f8f2" fill-opacity="0.25"/><rect x="21.40" y="166" width="1.07" height="1.2" fill="#ae81ff" fill-opacity="0.55"/><rect x="22.47" y="166" width="2.14" height="1.2" fill="#f8f8f2" fill-opacity="0.25"/><rect x="25.68" y="166" width="1.07" height="1.2" fill="#ae81ff" fill-opacity="0.55"/><rect x="26.75" y="166" width="2.14" height="1.2" fill="#f8f8f2" fill-opacity="0.25"/><rect x="29.96" y="166" width="1.07" height="1.2" fill="#ae81ff" fill-opacity="0.55"/><rect x="31.03" y="166" width="2.14" height="1.2" fill="#f8f8f2" fill-opacity="0.25"/><rect x="34.24" y="166" width="1.07" height="1.2" fill="#ae81ff" fill-opacity="0.55"/><rect x="35.31" y="166" width="2.14" height="1.2" fill="#f8f8f2" fill-opacity="0.25"/><rect x="38.52" y="166" width="1.07" height="1.2" fill="#ae81ff" fill-opacity="0.55"/><rect x="39.59" y="166" width="2.14" height="1.2" fill="#f8f8f2" fill-opacity="0.25"/><rect x="42.80" y="166" width="1.07" height="1.2" fill="#ae81ff" fill-opacity="0.55"/><rect x="43.87" y="166" width="2.14" height="1.2" fill="#f8f8f2" fill-opacity="0.25"/><rect x="47.08" y="166" width="1.07" height="1.2" fill="#ae81ff" fill-opacity="0.55"/><rect x="48.15" y="166" width="2.14" height="1.2" fill="#f8f8f2" fill-opacity="0.25"/><rect x="51.36" y="166" width="1.07" height="1.2" fill="#ae81ff" fill-opacity="0.55"/><rect x="52.43" y="166" width="2.14" height="1.2" fill="#f8f8f2" fill-opacity="0.25"/><rect x="55.64" y="166" width="1.07" height="1.2" fill="#ae81ff" fill-opacity="0.55"/><rect x="56.71" y="166" width="2.14" height="1.2" fill="#f8f8f2" fill-opacity="0.25"/><rect x="59.92" y="166" width="1.07" height="1.2" fill="#ae81ff" fill-opacity="0.55"/><rect x="60.99" y="166" width="2.14" height="1.2" fill="#f8f8f2" fill-opacity="0.25"/><rect x="64.20" y="166" width="1.07" height="1.2" fill="#ae81ff" fill-opacity="0.55"/><rect x="65.27" y="166" width="2.14" height="1.2" fill="#f8f8f2" fill-opacity="0.25"/><rect x="68.48" y="166" width="1.07" height="1.2" fill="#ae81ff" fill-opacity="0.55"/><rect x="69.55" y="166" width="2.14" height="1.2" fill="#f8f8f2" fill-opacity="0.25"/><rect x="4.28" y="168" width="1.07" height="1.2" fill="#ae81ff" fill-opacity="0.55"/><rect x="5.35" y="168" width="2.14" height="1.2" fill="#f8f8f2" fill-opacity="0.25"/><rect x="8.56" y="168" width="1.07" height="1.2" fill="#ae81ff" fill-opacity="0.55"/><rect x="9.63" y="168" width="2.14" height="1.2" fill="#f8f8f2" fill-opacity="0.25"/><rect x="12.84" y="168" width="1.07" height="1.2" fill="#ae81ff" fill-opacity="0.55"/><rect x="13.91" y="168" width="2.14" height="1.2" fill="#f8f8f2" fill-opacity="0.25"/><rect x="17.12" y="168" width="1.07" height="1.2" fill="#ae81ff" fill-opacity="0.55"/><rect x="18.19" y="168" width="2.14" height="1.2" fill="#f8f8f2" fill-opacity="0.25"/><rect x="21.40" y="168" width="1.07" height="1.2" fill="#ae81ff" fill-opacity="0.55"/><rect x="22.47" y="168" width="2.14" height="1.2" fill="#f8f8f2" fill-opacity="0.25"/><rect x="25.68" y="168" width="1.07" height="1.2" fill="#ae81ff" fill-opacity="0.55"/><rect x="26.75" y="168" width="2.14" height="1.2" fill="#f8f8f2" fill-opacity="0.25"/><rect x="29.96" y="168" width="1.07" height="1.2" fill="#ae81ff" fill-opacity="0.55"/><rect x="31.03" y="168" width="2.14" height="1.2" fill="#f8f8f2" fill-opacity="0.25"/><rect x="34.24" y="168" width="1.07" height="1.2" fill="#ae81ff" fill-opacity="0.55"/><rect x="35.31" y="168" width="2.14" height="1.2" fill="#f8f8f2" fill-opacity="0.25"/><rect x="38.52" y="168" width="1.07" height="1.2" fill="#ae81ff" fill-opacity="0.55"/><rect x="39.59" y="168" width="2.14" height="1.2" fill="#f8f8f2" fill-opacity="0.25"/><rect x="42.80" y="168" width="1.07" height="1.2" fill="#ae81ff" fill-opacity="0.55"/><rect x="43.87" y="168" width="2.14" height="1.2" fill="#f8f8f2" fill-opacity="0.25"/><rect x="47.08" y="168" width="1.07" height="1.2" fill="#ae81ff" fill-opacity="0.55"/><rect x="48.15" y="168" width="2.14" height="1.2" fill="#f8f8f2" fill-opacity="0.25"/><rect x="51.36" y="168" width="1.07" height="1.2" fill="#ae81ff" fill-opacity="0.55"/><rect x="52.43" y="168" width="2.14" height="1.2" fill="#f8f8f2" fill-opacity="0.25"/><rect x="55.64" y="168" width="1.07" height="1.2" fill="#ae81ff" fill-opacity="0.55"/><rect x="56.71" y="168" width="2.14" height="1.2" fill="#f8f8f2" fill-opacity="0.25"/><rect x="59.92" y="168" width="1.07" height="1.2" fill="#ae81ff" fill-opacity="0.55"/><rect x="60.99" y="168" width="2.14" height="1.2" fill="#f8f8f2" fill-opacity="0.25"/><rect x="64.20" y="168" width="1.07" height="1.2" fill="#ae81ff" fill-opacity="0.55"/><rect x="65.27" y="168" width="2.14" height="1.2" fill="#f8f8f2" fill-opacity="0.25"/><rect x="68.48" y="168" width="1.07" height="1.2" fill="#ae81ff" fill-opacity="0.55"/><rect x="69.55" y="168" width="2.14" height="1.2" fill="#f8f8f2" fill-opacity="0.25"/><rect x="4.28" y="170" width="1.07" height="1.2" fill="#ae81ff" fill-opacity="0.55"/><rect x="5.35" y="170" width="2.14" height="1.2" fill="#f8f8f2" fill-opacity="0.25"/><rect x="8.56" y="170" width="1.07" height="1.2" fill="#ae81ff" fill-opacity="0.55"/><rect x="9.63" y="170" width="2.14" height="1.2" fill="#f8f8f2" fill-opacity="0.25"/><rect x="12.84" y="170" width="1.07" height="1.2" fill="#ae81ff" fill-opacity="0.55"/><rect x="13.91" y="170" width="2.14" height="1.2" fill="#f8f8f2" fill-opacity="0.25"/><rect x="17.12" y="170" width="1.07" height="1.2" fill="#ae81ff" fill-opacity="0.55"/><rect x="18.19" y="170" width="2.14" height="1.2" fill="#f8f8f2" fill-opacity="0.25"/><rect x="21.40" y="170" width="1.07" height="1.2" fill="#ae81ff" fill-opacity="0.55"/><rect x="22.47" y="170" width="2.14" height="1.2" fill="#f8f8f2" fill-opacity="0.25"/><rect x="25.68" y="170" width="1.07" height="1.2" fill="#ae81ff" fill-opacity="0.55"/><rect x="26.75" y="170" width="2.14" height="1.2" fill="#f8f8f2" fill-opacity="0.25"/><rect x="29.96" y="170" width="1.07" height="1.2" fill="#ae81ff" fill-opacity="0.55"/><rect x="31.03" y="170" width="2.14" height="1.2" fill="#f8f8f2" fill-opacity="0.25"/><rect x="34.24" y="170" width="1.07" height="1.2" fill="#ae81ff" fill-opacity="0.55"/><rect x="35.31" y="170" width="2.14" height="1.2" fill="#f8f8f2" fill-opacity="0.25"/><rect x="38.52" y="170" width="1.07" height="1.2" fill="#ae81ff" fill-opacity="0.55"/><rect x="39.59" y="170" width="2.14" height="1.2" fill="#f8f8f2" fill-opacity="0.25"/><rect x="42.80" y="170" width="1.07" height="1.2" fill="#ae81ff" fill-opacity="0.55"/><rect x="43.87" y="170" width="2.14" height="1.2" fill="#f8f8f2" fill-opacity="0.25"/><rect x="47.08" y="170" width="1.07" height="1.2" fill="#ae81ff" fill-opacity="0.55"/><rect x="48.15" y="170" width="2.14" height="1.2" fill="#f8f8f2" fill-opacity="0.25"/><rect x="51.36" y="170" width="1.07" height="1.2" fill="#ae81ff" fill-opacity="0.55"/><rect x="52.43" y="170" width="2.14" height="1.2" fill="#f8f8f2" fill-opacity="0.25"/><rect x="55.64" y="170" width="1.07" height="1.2" fill="#ae81ff" fill-opacity="0.55"/><rect x="56.71" y="170" width="2.14" height="1.2" fill="#f8f8f2" fill-opacity="0.25"/><rect x="59.92" y="170" width="1.07" height="1.2" fill="#ae81ff" fill-opacity="0.55"/><rect x="60.99" y="170" width="2.14" height="1.2" fill="#f8f8f2" fill-opacity="0.25"/><rect x="64.20" y="170" width="1.07" height="1.2" fill="#ae81ff" fill-opacity="0.55"/><rect x="65.27" y="170" width="2.14" height="1.2" fill="#f8f8f2" fill-opacity="0.25"/><rect x="68.48" y="170" width="1.07" height="1.2" fill="#ae81ff" fill-opacity="0.55"/><rect x="69.55" y="170" width="2.14" height="1.2" fill="#f8f8f2" fill-opacity="0.25"/><rect x="4.28" y="172" width="1.07" height="1.2" fill="#ae81ff" fill-opacity="0.55"/><rect x="5.35" y="172" width="2.14" height="1.2" fill="#f8f8f2" fill-opacity="0.25"/><rect x="8.56" y="172" width="1.07" height="1.2" fill="#ae81ff" fill-opacity="0.55"/><rect x="9.63" y="172" width="2.14" height="1.2" fill="#f8f8f2" fill-opacity="0.25"/><rect x="12.84" y="172" width="1.07" height="1.2" fill="#ae81ff" fill-opacity="0.55"/><rect x="13.91" y="172" width="2.14" height="1.2" fill="#f8f8f2" fill-opacity="0.25"/><rect x="17.12" y="172" width="1.07" height="1.2" fill="#ae81ff" fill-opacity="0.55"/><rect x="18.19" y="172" width="2.14" height="1.2" fill="#f8f8f2" fill-opacity="0.25"/><rect x="21.40" y="172" width="1.07" height="1.2" fill="#ae81ff" fill-opacity="0.55"/><rect x="22.47" y="172" width="2.14" height="1.2" fill="#f8f8f2" fill-opacity="0.25"/><rect x="25.68" y="172" width="1.07" height="1.2" fill="#ae81ff" fill-opacity="0.55"/><rect x="26.75" y="172" width="2.14" height="1.2" fill="#f8f8f2" fill-opacity="0.25"/><rect x="29.96" y="172" width="1.07" height="1.2" fill="#ae81ff" fill-opacity="0.55"/><rect x="31.03" y="172" width="2.14" height="1.2" fill="#f8f8f2" fill-opacity="0.25"/><rect x="34.24" y="172" width="1.07" height="1.2" fill="#ae81ff" fill-opacity="0.55"/><rect x="35.31" y="172" width="2.14" height="1.2" fill="#f8f8f2" fill-opacity="0.25"/><rect x="38.52" y="172" width="1.07" height="1.2" fill="#ae81ff" fill-opacity="0.55"/><rect x="39.59" y="172" width="2.14" height="1.2" fill="#f8f8f2" fill-opacity="0.25"/><rect x="42.80" y="172" width="1.07" height="1.2" fill="#ae81ff" fill-opacity="0.55"/><rect x="43.87" y="172" width="2.14" height="1.2" fill="#f8f8f2" fill-opacity="0.25"/><rect x="47.08" y="172" width="1.07" height="1.2" fill="#ae81ff" fill-opacity="0.55"/><rect x="48.15" y="172" width="2.14" height="1.2" fill="#f8f8f2" fill-opacity="0.25"/><rect x="51.36" y="172" width="1.07" height="1.2" fill="#ae81ff" fill-opacity="0.55"/><rect x="52.43" y="172" width="2.14" height="1.2" fill="#f8f8f2" fill-opacity="0.25"/><rect x="55.64" y="172" width="1.07" height="1.2" fill="#ae81ff" fill-opacity="0.55"/><rect x="56.71" y="172" width="2.14" height="1.2" fill="#f8f8f2" fill-opacity="0.25"/><rect x="59.92" y="172" width="1.07" height="1.2" fill="#ae81ff" fill-opacity="0.55"/><rect x="60.99" y="172" width="2.14" height="1.2" fill="#f8f8f2" fill-opacity="0.25"/><rect x="64.20" y="172" width="1.07" height="1.2" fill="#ae81ff" fill-opacity="0.55"/><rect x="65.27" y="172" width="2.14" height="1.2" fill="#f8f8f2" fill-opacity="0.25"/><rect x="68.48" y="172" width="1.07" height="1.2" fill="#ae81ff" fill-opacity="0.55"/><rect x="69.55" y="172" width="2.14" height="1.2" fill="#f8f8f2" fill-opacity="0.25"/><rect x="0.00" y="174" width="2.14" height="1.75" fill="#f8f8f2" fill-opacity="0.34"/><rect x="0.00" y="178" width="5.35" height="1.75" fill="#66d9ef" fill-opacity="0.5"/><rect x="6.42" y="178" width="17.12" height="1.75" fill="#f8f8f2" fill-opacity="0.34"/><rect x="23.54" y="178" width="3.21" height="1.75" fill="#ae81ff" fill-opacity="0.55"/><rect x="26.75" y="178" width="1.07" height="1.75" fill="#f8f8f2" fill-opacity="0.34"/><rect x="28.89" y="178" width="1.07" height="1.75" fill="#f8f8f2" fill-opacity="0.34"/><rect x="31.03" y="178" width="1.07" height="1.75" fill="#f8f8f2" fill-opacity="0.34"/><rect x="0.00" y="180" width="1.07" height="1.75" fill="#f8f8f2" fill-opacity="0.34"/><rect x="4.28" y="182" width="1.07" height="1.2" fill="#ae81ff" fill-opacity="0.55"/><rect x="5.35" y="182" width="2.14" height="1.2" fill="#f8f8f2" fill-opacity="0.25"/><rect x="8.56" y="182" width="1.07" height="1.2" fill="#ae81ff" fill-opacity="0.55"/><rect x="9.63" y="182" width="2.14" height="1.2" fill="#f8f8f2" fill-opacity="0.25"/><rect x="12.84" y="182" width="1.07" height="1.2" fill="#ae81ff" fill-opacity="0.55"/><rect x="13.91" y="182" width="2.14" height="1.2" fill="#f8f8f2" fill-opacity="0.25"/><rect x="17.12" y="182" width="1.07" height="1.2" fill="#ae81ff" fill-opacity="0.55"/><rect x="18.19" y="182" width="2.14" height="1.2" fill="#f8f8f2" fill-opacity="0.25"/><rect x="21.40" y="182" width="1.07" height="1.2" fill="#ae81ff" fill-opacity="0.55"/><rect x="22.47" y="182" width="2.14" height="1.2" fill="#f8f8f2" fill-opacity="0.25"/><rect x="25.68" y="182" width="1.07" height="1.2" fill="#ae81ff" fill-opacity="0.55"/><rect x="26.75" y="182" width="2.14" height="1.2" fill="#f8f8f2" fill-opacity="0.25"/><rect x="29.96" y="182" width="1.07" height="1.2" fill="#ae81ff" fill-opacity="0.55"/><rect x="31.03" y="182" width="2.14" height="1.2" fill="#f8f8f2" fill-opacity="0.25"/><rect x="34.24" y="182" width="1.07" height="1.2" fill="#ae81ff" fill-opacity="0.55"/><rect x="35.31" y="182" width="2.14" height="1.2" fill="#f8f8f2" fill-opacity="0.25"/><rect x="38.52" y="182" width="1.07" height="1.2" fill="#ae81ff" fill-opacity="0.55"/><rect x="39.59" y="182" width="2.14" height="1.2" fill="#f8f8f2" fill-opacity="0.25"/><rect x="42.80" y="182" width="1.07" height="1.2" fill="#ae81ff" fill-opacity="0.55"/><rect x="43.87" y="182" width="2.14" height="1.2" fill="#f8f8f2" fill-opacity="0.25"/><rect x="47.08" y="182" width="1.07" height="1.2" fill="#ae81ff" fill-opacity="0.55"/><rect x="48.15" y="182" width="2.14" height="1.2" fill="#f8f8f2" fill-opacity="0.25"/><rect x="51.36" y="182" width="1.07" height="1.2" fill="#ae81ff" fill-opacity="0.55"/><rect x="52.43" y="182" width="2.14" height="1.2" fill="#f8f8f2" fill-opacity="0.25"/><rect x="55.64" y="182" width="1.07" height="1.2" fill="#ae81ff" fill-opacity="0.55"/><rect x="56.71" y="182" width="2.14" height="1.2" fill="#f8f8f2" fill-opacity="0.25"/><rect x="59.92" y="182" width="1.07" height="1.2" fill="#ae81ff" fill-opacity="0.55"/><rect x="60.99" y="182" width="2.14" height="1.2" fill="#f8f8f2" fill-opacity="0.25"/><rect x="64.20" y="182" width="1.07" height="1.2" fill="#ae81ff" fill-opacity="0.55"/><rect x="65.27" y="182" width="2.14" height="1.2" fill="#f8f8f2" fill-opacity="0.25"/><rect x="68.48" y="182" width="1.07" height="1.2" fill="#ae81ff" fill-opacity="0.55"/><rect x="69.55" y="182" width="2.14" height="1.2" fill="#f8f8f2" fill-opacity="0.25"/><rect x="4.28" y="184" width="1.07" height="1.2" fill="#ae81ff" fill-opacity="0.55"/><rect x="5.35" y="184" width="2.14" height="1.2" fill="#f8f8f2" fill-opacity="0.25"/><rect x="8.56" y="184" width="1.07" height="1.2" fill="#ae81ff" fill-opacity="0.55"/><rect x="9.63" y="184" width="2.14" height="1.2" fill="#f8f8f2" fill-opacity="0.25"/><rect x="12.84" y="184" width="1.07" height="1.2" fill="#ae81ff" fill-opacity="0.55"/><rect x="13.91" y="184" width="2.14" height="1.2" fill="#f8f8f2" fill-opacity="0.25"/><rect x="17.12" y="184" width="1.07" height="1.2" fill="#ae81ff" fill-opacity="0.55"/><rect x="18.19" y="184" width="2.14" height="1.2" fill="#f8f8f2" fill-opacity="0.25"/><rect x="21.40" y="184" width="1.07" height="1.2" fill="#ae81ff" fill-opacity="0.55"/><rect x="22.47" y="184" width="2.14" height="1.2" fill="#f8f8f2" fill-opacity="0.25"/><rect x="25.68" y="184" width="1.07" height="1.2" fill="#ae81ff" fill-opacity="0.55"/><rect x="26.75" y="184" width="2.14" height="1.2" fill="#f8f8f2" fill-opacity="0.25"/><rect x="29.96" y="184" width="1.07" height="1.2" fill="#ae81ff" fill-opacity="0.55"/><rect x="31.03" y="184" width="2.14" height="1.2" fill="#f8f8f2" fill-opacity="0.25"/><rect x="34.24" y="184" width="1.07" height="1.2" fill="#ae81ff" fill-opacity="0.55"/><rect x="35.31" y="184" width="2.14" height="1.2" fill="#f8f8f2" fill-opacity="0.25"/><rect x="38.52" y="184" width="1.07" height="1.2" fill="#ae81ff" fill-opacity="0.55"/><rect x="39.59" y="184" width="2.14" height="1.2" fill="#f8f8f2" fill-opacity="0.25"/><rect x="42.80" y="184" width="1.07" height="1.2" fill="#ae81ff" fill-opacity="0.55"/><rect x="43.87" y="184" width="2.14" height="1.2" fill="#f8f8f2" fill-opacity="0.25"/><rect x="47.08" y="184" width="1.07" height="1.2" fill="#ae81ff" fill-opacity="0.55"/><rect x="48.15" y="184" width="2.14" height="1.2" fill="#f8f8f2" fill-opacity="0.25"/><rect x="51.36" y="184" width="1.07" height="1.2" fill="#ae81ff" fill-opacity="0.55"/><rect x="52.43" y="184" width="2.14" height="1.2" fill="#f8f8f2" fill-opacity="0.25"/><rect x="55.64" y="184" width="1.07" height="1.2" fill="#ae81ff" fill-opacity="0.55"/><rect x="56.71" y="184" width="2.14" height="1.2" fill="#f8f8f2" fill-opacity="0.25"/><rect x="59.92" y="184" width="1.07" height="1.2" fill="#ae81ff" fill-opacity="0.55"/><rect x="60.99" y="184" width="2.14" height="1.2" fill="#f8f8f2" fill-opacity="0.25"/><rect x="64.20" y="184" width="1.07" height="1.2" fill="#ae81ff" fill-opacity="0.55"/><rect x="65.27" y="184" width="2.14" height="1.2" fill="#f8f8f2" fill-opacity="0.25"/><rect x="68.48" y="184" width="1.07" height="1.2" fill="#ae81ff" fill-opacity="0.55"/><rect x="69.55" y="184" width="2.14" height="1.2" fill="#f8f8f2" fill-opacity="0.25"/><rect x="4.28" y="186" width="1.07" height="1.2" fill="#ae81ff" fill-opacity="0.55"/><rect x="5.35" y="186" width="2.14" height="1.2" fill="#f8f8f2" fill-opacity="0.25"/><rect x="8.56" y="186" width="1.07" height="1.2" fill="#ae81ff" fill-opacity="0.55"/><rect x="9.63" y="186" width="2.14" height="1.2" fill="#f8f8f2" fill-opacity="0.25"/><rect x="12.84" y="186" width="1.07" height="1.2" fill="#ae81ff" fill-opacity="0.55"/><rect x="13.91" y="186" width="2.14" height="1.2" fill="#f8f8f2" fill-opacity="0.25"/><rect x="17.12" y="186" width="1.07" height="1.2" fill="#ae81ff" fill-opacity="0.55"/><rect x="18.19" y="186" width="2.14" height="1.2" fill="#f8f8f2" fill-opacity="0.25"/><rect x="21.40" y="186" width="1.07" height="1.2" fill="#ae81ff" fill-opacity="0.55"/><rect x="22.47" y="186" width="2.14" height="1.2" fill="#f8f8f2" fill-opacity="0.25"/><rect x="25.68" y="186" width="1.07" height="1.2" fill="#ae81ff" fill-opacity="0.55"/><rect x="26.75" y="186" width="2.14" height="1.2" fill="#f8f8f2" fill-opacity="0.25"/><rect x="29.96" y="186" width="1.07" height="1.2" fill="#ae81ff" fill-opacity="0.55"/><rect x="31.03" y="186" width="2.14" height="1.2" fill="#f8f8f2" fill-opacity="0.25"/><rect x="34.24" y="186" width="1.07" height="1.2" fill="#ae81ff" fill-opacity="0.55"/><rect x="35.31" y="186" width="2.14" height="1.2" fill="#f8f8f2" fill-opacity="0.25"/><rect x="38.52" y="186" width="1.07" height="1.2" fill="#ae81ff" fill-opacity="0.55"/><rect x="39.59" y="186" width="2.14" height="1.2" fill="#f8f8f2" fill-opacity="0.25"/><rect x="42.80" y="186" width="1.07" height="1.2" fill="#ae81ff" fill-opacity="0.55"/><rect x="43.87" y="186" width="2.14" height="1.2" fill="#f8f8f2" fill-opacity="0.25"/><rect x="47.08" y="186" width="1.07" height="1.2" fill="#ae81ff" fill-opacity="0.55"/><rect x="48.15" y="186" width="2.14" height="1.2" fill="#f8f8f2" fill-opacity="0.25"/><rect x="51.36" y="186" width="1.07" height="1.2" fill="#ae81ff" fill-opacity="0.55"/><rect x="52.43" y="186" width="2.14" height="1.2" fill="#f8f8f2" fill-opacity="0.25"/><rect x="55.64" y="186" width="1.07" height="1.2" fill="#ae81ff" fill-opacity="0.55"/><rect x="56.71" y="186" width="2.14" height="1.2" fill="#f8f8f2" fill-opacity="0.25"/><rect x="59.92" y="186" width="1.07" height="1.2" fill="#ae81ff" fill-opacity="0.55"/><rect x="60.99" y="186" width="2.14" height="1.2" fill="#f8f8f2" fill-opacity="0.25"/><rect x="64.20" y="186" width="1.07" height="1.2" fill="#ae81ff" fill-opacity="0.55"/><rect x="65.27" y="186" width="2.14" height="1.2" fill="#f8f8f2" fill-opacity="0.25"/><rect x="68.48" y="186" width="1.07" height="1.2" fill="#ae81ff" fill-opacity="0.55"/><rect x="69.55" y="186" width="2.14" height="1.2" fill="#f8f8f2" fill-opacity="0.25"/><rect x="4.28" y="188" width="1.07" height="1.2" fill="#ae81ff" fill-opacity="0.55"/><rect x="5.35" y="188" width="2.14" height="1.2" fill="#f8f8f2" fill-opacity="0.25"/><rect x="8.56" y="188" width="1.07" height="1.2" fill="#ae81ff" fill-opacity="0.55"/><rect x="9.63" y="188" width="2.14" height="1.2" fill="#ae81ff" fill-opacity="0.45"/><rect x="12.84" y="188" width="1.07" height="1.2" fill="#ae81ff" fill-opacity="0.55"/><rect x="13.91" y="188" width="2.14" height="1.2" fill="#f8f8f2" fill-opacity="0.25"/><rect x="17.12" y="188" width="1.07" height="1.2" fill="#ae81ff" fill-opacity="0.55"/><rect x="18.19" y="188" width="2.14" height="1.2" fill="#f8f8f2" fill-opacity="0.25"/><rect x="21.40" y="188" width="1.07" height="1.2" fill="#ae81ff" fill-opacity="0.55"/><rect x="22.47" y="188" width="2.14" height="1.2" fill="#ae81ff" fill-opacity="0.45"/><rect x="25.68" y="188" width="1.07" height="1.2" fill="#ae81ff" fill-opacity="0.55"/><rect x="26.75" y="188" width="2.14" height="1.2" fill="#f8f8f2" fill-opacity="0.25"/><rect x="29.96" y="188" width="1.07" height="1.2" fill="#ae81ff" fill-opacity="0.55"/><rect x="31.03" y="188" width="2.14" height="1.2" fill="#f8f8f2" fill-opacity="0.25"/><rect x="34.24" y="188" width="1.07" height="1.2" fill="#ae81ff" fill-opacity="0.55"/><rect x="35.31" y="188" width="2.14" height="1.2" fill="#ae81ff" fill-opacity="0.45"/><rect x="38.52" y="188" width="1.07" height="1.2" fill="#ae81ff" fill-opacity="0.55"/><rect x="39.59" y="188" width="2.14" height="1.2" fill="#f8f8f2" fill-opacity="0.25"/><rect x="42.80" y="188" width="1.07" height="1.2" fill="#ae81ff" fill-opacity="0.55"/><rect x="43.87" y="188" width="2.14" height="1.2" fill="#f8f8f2" fill-opacity="0.25"/><rect x="47.08" y="188" width="1.07" height="1.2" fill="#ae81ff" fill-opacity="0.55"/><rect x="48.15" y="188" width="2.14" height="1.2" fill="#ae81ff" fill-opacity="0.45"/><rect x="51.36" y="188" width="1.07" height="1.2" fill="#ae81ff" fill-opacity="0.55"/><rect x="52.43" y="188" width="2.14" height="1.2" fill="#f8f8f2" fill-opacity="0.25"/><rect x="55.64" y="188" width="1.07" height="1.2" fill="#ae81ff" fill-opacity="0.55"/><rect x="56.71" y="188" width="2.14" height="1.2" fill="#f8f8f2" fill-opacity="0.25"/><rect x="59.92" y="188" width="1.07" height="1.2" fill="#ae81ff" fill-opacity="0.55"/><rect x="60.99" y="188" width="2.14" height="1.2" fill="#ae81ff" fill-opacity="0.45"/><rect x="64.20" y="188" width="1.07" height="1.2" fill="#ae81ff" fill-opacity="0.55"/><rect x="65.27" y="188" width="2.14" height="1.2" fill="#f8f8f2" fill-opacity="0.25"/><rect x="68.48" y="188" width="1.07" height="1.2" fill="#ae81ff" fill-opacity="0.55"/><rect x="69.55" y="188" width="2.14" height="1.2" fill="#f8f8f2" fill-opacity="0.25"/><rect x="4.28" y="190" width="1.07" height="1.2" fill="#ae81ff" fill-opacity="0.55"/><rect x="5.35" y="190" width="2.14" height="1.2" fill="#f8f8f2" fill-opacity="0.25"/><rect x="8.56" y="190" width="1.07" height="1.2" fill="#ae81ff" fill-opacity="0.55"/><rect x="9.63" y="190" width="2.14" height="1.2" fill="#ae81ff" fill-opacity="0.45"/><rect x="12.84" y="190" width="1.07" height="1.2" fill="#ae81ff" fill-opacity="0.55"/><rect x="13.91" y="190" width="2.14" height="1.2" fill="#f8f8f2" fill-opacity="0.25"/><rect x="17.12" y="190" width="1.07" height="1.2" fill="#ae81ff" fill-opacity="0.55"/><rect x="18.19" y="190" width="2.14" height="1.2" fill="#f8f8f2" fill-opacity="0.25"/><rect x="21.40" y="190" width="1.07" height="1.2" fill="#ae81ff" fill-opacity="0.55"/><rect x="22.47" y="190" width="2.14" height="1.2" fill="#ae81ff" fill-opacity="0.45"/><rect x="25.68" y="190" width="1.07" height="1.2" fill="#ae81ff" fill-opacity="0.55"/><rect x="26.75" y="190" width="2.14" height="1.2" fill="#f8f8f2" fill-opacity="0.25"/><rect x="29.96" y="190" width="1.07" height="1.2" fill="#ae81ff" fill-opacity="0.55"/><rect x="31.03" y="190" width="2.14" height="1.2" fill="#f8f8f2" fill-opacity="0.25"/><rect x="34.24" y="190" width="1.07" height="1.2" fill="#ae81ff" fill-opacity="0.55"/><rect x="35.31" y="190" width="2.14" height="1.2" fill="#ae81ff" fill-opacity="0.45"/><rect x="38.52" y="190" width="1.07" height="1.2" fill="#ae81ff" fill-opacity="0.55"/><rect x="39.59" y="190" width="2.14" height="1.2" fill="#f8f8f2" fill-opacity="0.25"/><rect x="42.80" y="190" width="1.07" height="1.2" fill="#ae81ff" fill-opacity="0.55"/><rect x="43.87" y="190" width="2.14" height="1.2" fill="#f8f8f2" fill-opacity="0.25"/><rect x="47.08" y="190" width="1.07" height="1.2" fill="#ae81ff" fill-opacity="0.55"/><rect x="48.15" y="190" width="2.14" height="1.2" fill="#ae81ff" fill-opacity="0.45"/><rect x="51.36" y="190" width="1.07" height="1.2" fill="#ae81ff" fill-opacity="0.55"/><rect x="52.43" y="190" width="2.14" height="1.2" fill="#f8f8f2" fill-opacity="0.25"/><rect x="55.64" y="190" width="1.07" height="1.2" fill="#ae81ff" fill-opacity="0.55"/><rect x="56.71" y="190" width="2.14" height="1.2" fill="#f8f8f2" fill-opacity="0.25"/><rect x="59.92" y="190" width="1.07" height="1.2" fill="#ae81ff" fill-opacity="0.55"/><rect x="60.99" y="190" width="2.14" height="1.2" fill="#ae81ff" fill-opacity="0.45"/><rect x="64.20" y="190" width="1.07" height="1.2" fill="#ae81ff" fill-opacity="0.55"/><rect x="65.27" y="190" width="2.14" height="1.2" fill="#f8f8f2" fill-opacity="0.25"/><rect x="68.48" y="190" width="1.07" height="1.2" fill="#ae81ff" fill-opacity="0.55"/><rect x="69.55" y="190" width="2.14" height="1.2" fill="#f8f8f2" fill-opacity="0.25"/><rect x="4.28" y="192" width="1.07" height="1.2" fill="#ae81ff" fill-opacity="0.55"/><rect x="5.35" y="192" width="2.14" height="1.2" fill="#f8f8f2" fill-opacity="0.25"/><rect x="8.56" y="192" width="1.07" height="1.2" fill="#ae81ff" fill-opacity="0.55"/><rect x="9.63" y="192" width="2.14" height="1.2" fill="#ae81ff" fill-opacity="0.45"/><rect x="12.84" y="192" width="1.07" height="1.2" fill="#ae81ff" fill-opacity="0.55"/><rect x="13.91" y="192" width="2.14" height="1.2" fill="#f8f8f2" fill-opacity="0.25"/><rect x="17.12" y="192" width="1.07" height="1.2" fill="#ae81ff" fill-opacity="0.55"/><rect x="18.19" y="192" width="2.14" height="1.2" fill="#f8f8f2" fill-opacity="0.25"/><rect x="21.40" y="192" width="1.07" height="1.2" fill="#ae81ff" fill-opacity="0.55"/><rect x="22.47" y="192" width="2.14" height="1.2" fill="#ae81ff" fill-opacity="0.45"/><rect x="25.68" y="192" width="1.07" height="1.2" fill="#ae81ff" fill-opacity="0.55"/><rect x="26.75" y="192" width="2.14" height="1.2" fill="#f8f8f2" fill-opacity="0.25"/><rect x="29.96" y="192" width="1.07" height="1.2" fill="#ae81ff" fill-opacity="0.55"/><rect x="31.03" y="192" width="2.14" height="1.2" fill="#f8f8f2" fill-opacity="0.25"/><rect x="34.24" y="192" width="1.07" height="1.2" fill="#ae81ff" fill-opacity="0.55"/><rect x="35.31" y="192" width="2.14" height="1.2" fill="#ae81ff" fill-opacity="0.45"/><rect x="38.52" y="192" width="1.07" height="1.2" fill="#ae81ff" fill-opacity="0.55"/><rect x="39.59" y="192" width="2.14" height="1.2" fill="#f8f8f2" fill-opacity="0.25"/><rect x="42.80" y="192" width="1.07" height="1.2" fill="#ae81ff" fill-opacity="0.55"/><rect x="43.87" y="192" width="2.14" height="1.2" fill="#f8f8f2" fill-opacity="0.25"/><rect x="47.08" y="192" width="1.07" height="1.2" fill="#ae81ff" fill-opacity="0.55"/><rect x="48.15" y="192" width="2.14" height="1.2" fill="#ae81ff" fill-opacity="0.45"/><rect x="51.36" y="192" width="1.07" height="1.2" fill="#ae81ff" fill-opacity="0.55"/><rect x="52.43" y="192" width="2.14" height="1.2" fill="#f8f8f2" fill-opacity="0.25"/><rect x="55.64" y="192" width="1.07" height="1.2" fill="#ae81ff" fill-opacity="0.55"/><rect x="56.71" y="192" width="2.14" height="1.2" fill="#f8f8f2" fill-opacity="0.25"/><rect x="59.92" y="192" width="1.07" height="1.2" fill="#ae81ff" fill-opacity="0.55"/><rect x="60.99" y="192" width="2.14" height="1.2" fill="#ae81ff" fill-opacity="0.45"/><rect x="64.20" y="192" width="1.07" height="1.2" fill="#ae81ff" fill-opacity="0.55"/><rect x="65.27" y="192" width="2.14" height="1.2" fill="#f8f8f2" fill-opacity="0.25"/><rect x="68.48" y="192" width="1.07" height="1.2" fill="#ae81ff" fill-opacity="0.55"/><rect x="69.55" y="192" width="2.14" height="1.2" fill="#f8f8f2" fill-opacity="0.25"/><rect x="4.28" y="194" width="1.07" height="1.2" fill="#ae81ff" fill-opacity="0.55"/><rect x="5.35" y="194" width="2.14" height="1.2" fill="#f8f8f2" fill-opacity="0.25"/><rect x="8.56" y="194" width="1.07" height="1.2" fill="#ae81ff" fill-opacity="0.55"/><rect x="9.63" y="194" width="2.14" height="1.2" fill="#ae81ff" fill-opacity="0.45"/><rect x="12.84" y="194" width="1.07" height="1.2" fill="#ae81ff" fill-opacity="0.55"/><rect x="13.91" y="194" width="2.14" height="1.2" fill="#f8f8f2" fill-opacity="0.25"/><rect x="17.12" y="194" width="1.07" height="1.2" fill="#ae81ff" fill-opacity="0.55"/><rect x="18.19" y="194" width="2.14" height="1.2" fill="#f8f8f2" fill-opacity="0.25"/><rect x="21.40" y="194" width="1.07" height="1.2" fill="#ae81ff" fill-opacity="0.55"/><rect x="22.47" y="194" width="2.14" height="1.2" fill="#ae81ff" fill-opacity="0.45"/><rect x="25.68" y="194" width="1.07" height="1.2" fill="#ae81ff" fill-opacity="0.55"/><rect x="26.75" y="194" width="2.14" height="1.2" fill="#f8f8f2" fill-opacity="0.25"/><rect x="29.96" y="194" width="1.07" height="1.2" fill="#ae81ff" fill-opacity="0.55"/><rect x="31.03" y="194" width="2.14" height="1.2" fill="#f8f8f2" fill-opacity="0.25"/><rect x="34.24" y="194" width="1.07" height="1.2" fill="#ae81ff" fill-opacity="0.55"/><rect x="35.31" y="194" width="2.14" height="1.2" fill="#ae81ff" fill-opacity="0.45"/><rect x="38.52" y="194" width="1.07" height="1.2" fill="#ae81ff" fill-opacity="0.55"/><rect x="39.59" y="194" width="2.14" height="1.2" fill="#f8f8f2" fill-opacity="0.25"/><rect x="42.80" y="194" width="1.07" height="1.2" fill="#ae81ff" fill-opacity="0.55"/><rect x="43.87" y="194" width="2.14" height="1.2" fill="#f8f8f2" fill-opacity="0.25"/><rect x="47.08" y="194" width="1.07" height="1.2" fill="#ae81ff" fill-opacity="0.55"/><rect x="48.15" y="194" width="2.14" height="1.2" fill="#ae81ff" fill-opacity="0.45"/><rect x="51.36" y="194" width="1.07" height="1.2" fill="#ae81ff" fill-opacity="0.55"/><rect x="52.43" y="194" width="2.14" height="1.2" fill="#f8f8f2" fill-opacity="0.25"/><rect x="55.64" y="194" width="1.07" height="1.2" fill="#ae81ff" fill-opacity="0.55"/><rect x="56.71" y="194" width="2.14" height="1.2" fill="#f8f8f2" fill-opacity="0.25"/><rect x="59.92" y="194" width="1.07" height="1.2" fill="#ae81ff" fill-opacity="0.55"/><rect x="60.99" y="194" width="2.14" height="1.2" fill="#ae81ff" fill-opacity="0.45"/><rect x="64.20" y="194" width="1.07" height="1.2" fill="#ae81ff" fill-opacity="0.55"/><rect x="65.27" y="194" width="2.14" height="1.2" fill="#f8f8f2" fill-opacity="0.25"/><rect x="68.48" y="194" width="1.07" height="1.2" fill="#ae81ff" fill-opacity="0.55"/><rect x="69.55" y="194" width="2.14" height="1.2" fill="#f8f8f2" fill-opacity="0.25"/><rect x="4.28" y="196" width="1.07" height="1.2" fill="#ae81ff" fill-opacity="0.55"/><rect x="5.35" y="196" width="2.14" height="1.2" fill="#f8f8f2" fill-opacity="0.25"/><rect x="8.56" y="196" width="1.07" height="1.2" fill="#ae81ff" fill-opacity="0.55"/><rect x="9.63" y="196" width="2.14" height="1.2" fill="#ae81ff" fill-opacity="0.45"/><rect x="12.84" y="196" width="1.07" height="1.2" fill="#ae81ff" fill-opacity="0.55"/><rect x="13.91" y="196" width="2.14" height="1.2" fill="#f8f8f2" fill-opacity="0.25"/><rect x="17.12" y="196" width="1.07" height="1.2" fill="#ae81ff" fill-opacity="0.55"/><rect x="18.19" y="196" width="2.14" height="1.2" fill="#f8f8f2" fill-opacity="0.25"/><rect x="21.40" y="196" width="1.07" height="1.2" fill="#ae81ff" fill-opacity="0.55"/><rect x="22.47" y="196" width="2.14" height="1.2" fill="#ae81ff" fill-opacity="0.45"/><rect x="25.68" y="196" width="1.07" height="1.2" fill="#ae81ff" fill-opacity="0.55"/><rect x="26.75" y="196" width="2.14" height="1.2" fill="#f8f8f2" fill-opacity="0.25"/><rect x="29.96" y="196" width="1.07" height="1.2" fill="#ae81ff" fill-opacity="0.55"/><rect x="31.03" y="196" width="2.14" height="1.2" fill="#f8f8f2" fill-opacity="0.25"/><rect x="34.24" y="196" width="1.07" height="1.2" fill="#ae81ff" fill-opacity="0.55"/><rect x="35.31" y="196" width="2.14" height="1.2" fill="#ae81ff" fill-opacity="0.45"/><rect x="38.52" y="196" width="1.07" height="1.2" fill="#ae81ff" fill-opacity="0.55"/><rect x="39.59" y="196" width="2.14" height="1.2" fill="#f8f8f2" fill-opacity="0.25"/><rect x="42.80" y="196" width="1.07" height="1.2" fill="#ae81ff" fill-opacity="0.55"/><rect x="43.87" y="196" width="2.14" height="1.2" fill="#f8f8f2" fill-opacity="0.25"/><rect x="47.08" y="196" width="1.07" height="1.2" fill="#ae81ff" fill-opacity="0.55"/><rect x="48.15" y="196" width="2.14" height="1.2" fill="#ae81ff" fill-opacity="0.45"/><rect x="51.36" y="196" width="1.07" height="1.2" fill="#ae81ff" fill-opacity="0.55"/><rect x="52.43" y="196" width="2.14" height="1.2" fill="#f8f8f2" fill-opacity="0.25"/><rect x="55.64" y="196" width="1.07" height="1.2" fill="#ae81ff" fill-opacity="0.55"/><rect x="56.71" y="196" width="2.14" height="1.2" fill="#f8f8f2" fill-opacity="0.25"/><rect x="59.92" y="196" width="1.07" height="1.2" fill="#ae81ff" fill-opacity="0.55"/><rect x="60.99" y="196" width="2.14" height="1.2" fill="#ae81ff" fill-opacity="0.45"/><rect x="64.20" y="196" width="1.07" height="1.2" fill="#ae81ff" fill-opacity="0.55"/><rect x="65.27" y="196" width="2.14" height="1.2" fill="#f8f8f2" fill-opacity="0.25"/><rect x="68.48" y="196" width="1.07" height="1.2" fill="#ae81ff" fill-opacity="0.55"/><rect x="69.55" y="196" width="2.14" height="1.2" fill="#f8f8f2" fill-opacity="0.25"/><rect x="4.28" y="198" width="1.07" height="1.2" fill="#ae81ff" fill-opacity="0.55"/><rect x="5.35" y="198" width="2.14" height="1.2" fill="#f8f8f2" fill-opacity="0.25"/><rect x="8.56" y="198" width="1.07" height="1.2" fill="#ae81ff" fill-opacity="0.55"/><rect x="9.63" y="198" width="2.14" height="1.2" fill="#ae81ff" fill-opacity="0.45"/><rect x="12.84" y="198" width="1.07" height="1.2" fill="#ae81ff" fill-opacity="0.55"/><rect x="13.91" y="198" width="2.14" height="1.2" fill="#f8f8f2" fill-opacity="0.25"/><rect x="17.12" y="198" width="1.07" height="1.2" fill="#ae81ff" fill-opacity="0.55"/><rect x="18.19" y="198" width="2.14" height="1.2" fill="#f8f8f2" fill-opacity="0.25"/><rect x="21.40" y="198" width="1.07" height="1.2" fill="#ae81ff" fill-opacity="0.55"/><rect x="22.47" y="198" width="2.14" height="1.2" fill="#ae81ff" fill-opacity="0.45"/><rect x="25.68" y="198" width="1.07" height="1.2" fill="#ae81ff" fill-opacity="0.55"/><rect x="26.75" y="198" width="2.14" height="1.2" fill="#f8f8f2" fill-opacity="0.25"/><rect x="29.96" y="198" width="1.07" height="1.2" fill="#ae81ff" fill-opacity="0.55"/><rect x="31.03" y="198" width="2.14" height="1.2" fill="#f8f8f2" fill-opacity="0.25"/><rect x="34.24" y="198" width="1.07" height="1.2" fill="#ae81ff" fill-opacity="0.55"/><rect x="35.31" y="198" width="2.14" height="1.2" fill="#ae81ff" fill-opacity="0.45"/><rect x="38.52" y="198" width="1.07" height="1.2" fill="#ae81ff" fill-opacity="0.55"/><rect x="39.59" y="198" width="2.14" height="1.2" fill="#f8f8f2" fill-opacity="0.25"/><rect x="42.80" y="198" width="1.07" height="1.2" fill="#ae81ff" fill-opacity="0.55"/><rect x="43.87" y="198" width="2.14" height="1.2" fill="#f8f8f2" fill-opacity="0.25"/><rect x="47.08" y="198" width="1.07" height="1.2" fill="#ae81ff" fill-opacity="0.55"/><rect x="48.15" y="198" width="2.14" height="1.2" fill="#ae81ff" fill-opacity="0.45"/><rect x="51.36" y="198" width="1.07" height="1.2" fill="#ae81ff" fill-opacity="0.55"/><rect x="52.43" y="198" width="2.14" height="1.2" fill="#f8f8f2" fill-opacity="0.25"/><rect x="55.64" y="198" width="1.07" height="1.2" fill="#ae81ff" fill-opacity="0.55"/><rect x="56.71" y="198" width="2.14" height="1.2" fill="#f8f8f2" fill-opacity="0.25"/><rect x="59.92" y="198" width="1.07" height="1.2" fill="#ae81ff" fill-opacity="0.55"/><rect x="60.99" y="198" width="2.14" height="1.2" fill="#ae81ff" fill-opacity="0.45"/><rect x="64.20" y="198" width="1.07" height="1.2" fill="#ae81ff" fill-opacity="0.55"/><rect x="65.27" y="198" width="2.14" height="1.2" fill="#f8f8f2" fill-opacity="0.25"/><rect x="68.48" y="198" width="1.07" height="1.2" fill="#ae81ff" fill-opacity="0.55"/><rect x="69.55" y="198" width="2.14" height="1.2" fill="#f8f8f2" fill-opacity="0.25"/><rect x="4.28" y="200" width="1.07" height="1.2" fill="#ae81ff" fill-opacity="0.55"/><rect x="5.35" y="200" width="2.14" height="1.2" fill="#f8f8f2" fill-opacity="0.25"/><rect x="8.56" y="200" width="1.07" height="1.2" fill="#ae81ff" fill-opacity="0.55"/><rect x="9.63" y="200" width="2.14" height="1.2" fill="#ae81ff" fill-opacity="0.45"/><rect x="12.84" y="200" width="1.07" height="1.2" fill="#ae81ff" fill-opacity="0.55"/><rect x="13.91" y="200" width="2.14" height="1.2" fill="#f8f8f2" fill-opacity="0.25"/><rect x="17.12" y="200" width="1.07" height="1.2" fill="#ae81ff" fill-opacity="0.55"/><rect x="18.19" y="200" width="2.14" height="1.2" fill="#f8f8f2" fill-opacity="0.25"/><rect x="21.40" y="200" width="1.07" height="1.2" fill="#ae81ff" fill-opacity="0.55"/><rect x="22.47" y="200" width="2.14" height="1.2" fill="#ae81ff" fill-opacity="0.45"/><rect x="25.68" y="200" width="1.07" height="1.2" fill="#ae81ff" fill-opacity="0.55"/><rect x="26.75" y="200" width="2.14" height="1.2" fill="#f8f8f2" fill-opacity="0.25"/><rect x="29.96" y="200" width="1.07" height="1.2" fill="#ae81ff" fill-opacity="0.55"/><rect x="31.03" y="200" width="2.14" height="1.2" fill="#f8f8f2" fill-opacity="0.25"/><rect x="34.24" y="200" width="1.07" height="1.2" fill="#ae81ff" fill-opacity="0.55"/><rect x="35.31" y="200" width="2.14" height="1.2" fill="#ae81ff" fill-opacity="0.45"/><rect x="38.52" y="200" width="1.07" height="1.2" fill="#ae81ff" fill-opacity="0.55"/><rect x="39.59" y="200" width="2.14" height="1.2" fill="#f8f8f2" fill-opacity="0.25"/><rect x="42.80" y="200" width="1.07" height="1.2" fill="#ae81ff" fill-opacity="0.55"/><rect x="43.87" y="200" width="2.14" height="1.2" fill="#f8f8f2" fill-opacity="0.25"/><rect x="47.08" y="200" width="1.07" height="1.2" fill="#ae81ff" fill-opacity="0.55"/><rect x="48.15" y="200" width="2.14" height="1.2" fill="#ae81ff" fill-opacity="0.45"/><rect x="51.36" y="200" width="1.07" height="1.2" fill="#ae81ff" fill-opacity="0.55"/><rect x="52.43" y="200" width="2.14" height="1.2" fill="#f8f8f2" fill-opacity="0.25"/><rect x="55.64" y="200" width="1.07" height="1.2" fill="#ae81ff" fill-opacity="0.55"/><rect x="56.71" y="200" width="2.14" height="1.2" fill="#f8f8f2" fill-opacity="0.25"/><rect x="59.92" y="200" width="1.07" height="1.2" fill="#ae81ff" fill-opacity="0.55"/><rect x="60.99" y="200" width="2.14" height="1.2" fill="#ae81ff" fill-opacity="0.45"/><rect x="64.20" y="200" width="1.07" height="1.2" fill="#ae81ff" fill-opacity="0.55"/><rect x="65.27" y="200" width="2.14" height="1.2" fill="#f8f8f2" fill-opacity="0.25"/><rect x="68.48" y="200" width="1.07" height="1.2" fill="#ae81ff" fill-opacity="0.55"/><rect x="69.55" y="200" width="2.14" height="1.2" fill="#f8f8f2" fill-opacity="0.25"/><rect x="4.28" y="202" width="1.07" height="1.2" fill="#ae81ff" fill-opacity="0.55"/><rect x="5.35" y="202" width="2.14" height="1.2" fill="#f8f8f2" fill-opacity="0.25"/><rect x="8.56" y="202" width="1.07" height="1.2" fill="#ae81ff" fill-opacity="0.55"/><rect x="9.63" y="202" width="2.14" height="1.2" fill="#ae81ff" fill-opacity="0.45"/><rect x="12.84" y="202" width="1.07" height="1.2" fill="#ae81ff" fill-opacity="0.55"/><rect x="13.91" y="202" width="2.14" height="1.2" fill="#f8f8f2" fill-opacity="0.25"/><rect x="17.12" y="202" width="1.07" height="1.2" fill="#ae81ff" fill-opacity="0.55"/><rect x="18.19" y="202" width="2.14" height="1.2" fill="#f8f8f2" fill-opacity="0.25"/><rect x="21.40" y="202" width="1.07" height="1.2" fill="#ae81ff" fill-opacity="0.55"/><rect x="22.47" y="202" width="2.14" height="1.2" fill="#ae81ff" fill-opacity="0.45"/><rect x="25.68" y="202" width="1.07" height="1.2" fill="#ae81ff" fill-opacity="0.55"/><rect x="26.75" y="202" width="2.14" height="1.2" fill="#f8f8f2" fill-opacity="0.25"/><rect x="29.96" y="202" width="1.07" height="1.2" fill="#ae81ff" fill-opacity="0.55"/><rect x="31.03" y="202" width="2.14" height="1.2" fill="#f8f8f2" fill-opacity="0.25"/><rect x="34.24" y="202" width="1.07" height="1.2" fill="#ae81ff" fill-opacity="0.55"/><rect x="35.31" y="202" width="2.14" height="1.2" fill="#ae81ff" fill-opacity="0.45"/><rect x="38.52" y="202" width="1.07" height="1.2" fill="#ae81ff" fill-opacity="0.55"/><rect x="39.59" y="202" width="2.14" height="1.2" fill="#f8f8f2" fill-opacity="0.25"/><rect x="42.80" y="202" width="1.07" height="1.2" fill="#ae81ff" fill-opacity="0.55"/><rect x="43.87" y="202" width="2.14" height="1.2" fill="#f8f8f2" fill-opacity="0.25"/><rect x="47.08" y="202" width="1.07" height="1.2" fill="#ae81ff" fill-opacity="0.55"/><rect x="48.15" y="202" width="2.14" height="1.2" fill="#ae81ff" fill-opacity="0.45"/><rect x="51.36" y="202" width="1.07" height="1.2" fill="#ae81ff" fill-opacity="0.55"/><rect x="52.43" y="202" width="2.14" height="1.2" fill="#f8f8f2" fill-opacity="0.25"/><rect x="55.64" y="202" width="1.07" height="1.2" fill="#ae81ff" fill-opacity="0.55"/><rect x="56.71" y="202" width="2.14" height="1.2" fill="#f8f8f2" fill-opacity="0.25"/><rect x="59.92" y="202" width="1.07" height="1.2" fill="#ae81ff" fill-opacity="0.55"/><rect x="60.99" y="202" width="2.14" height="1.2" fill="#ae81ff" fill-opacity="0.45"/><rect x="64.20" y="202" width="1.07" height="1.2" fill="#ae81ff" fill-opacity="0.55"/><rect x="65.27" y="202" width="2.14" height="1.2" fill="#f8f8f2" fill-opacity="0.25"/><rect x="68.48" y="202" width="1.07" height="1.2" fill="#ae81ff" fill-opacity="0.55"/><rect x="69.55" y="202" width="2.14" height="1.2" fill="#f8f8f2" fill-opacity="0.25"/><rect x="4.28" y="204" width="1.07" height="1.2" fill="#ae81ff" fill-opacity="0.55"/><rect x="5.35" y="204" width="2.14" height="1.2" fill="#f8f8f2" fill-opacity="0.25"/><rect x="8.56" y="204" width="1.07" height="1.2" fill="#ae81ff" fill-opacity="0.55"/><rect x="9.63" y="204" width="2.14" height="1.2" fill="#ae81ff" fill-opacity="0.45"/><rect x="12.84" y="204" width="1.07" height="1.2" fill="#ae81ff" fill-opacity="0.55"/><rect x="13.91" y="204" width="2.14" height="1.2" fill="#f8f8f2" fill-opacity="0.25"/><rect x="17.12" y="204" width="1.07" height="1.2" fill="#ae81ff" fill-opacity="0.55"/><rect x="18.19" y="204" width="2.14" height="1.2" fill="#f8f8f2" fill-opacity="0.25"/><rect x="21.40" y="204" width="1.07" height="1.2" fill="#ae81ff" fill-opacity="0.55"/><rect x="22.47" y="204" width="2.14" height="1.2" fill="#ae81ff" fill-opacity="0.45"/><rect x="25.68" y="204" width="1.07" height="1.2" fill="#ae81ff" fill-opacity="0.55"/><rect x="26.75" y="204" width="2.14" height="1.2" fill="#f8f8f2" fill-opacity="0.25"/><rect x="29.96" y="204" width="1.07" height="1.2" fill="#ae81ff" fill-opacity="0.55"/><rect x="31.03" y="204" width="2.14" height="1.2" fill="#f8f8f2" fill-opacity="0.25"/><rect x="34.24" y="204" width="1.07" height="1.2" fill="#ae81ff" fill-opacity="0.55"/><rect x="35.31" y="204" width="2.14" height="1.2" fill="#ae81ff" fill-opacity="0.45"/><rect x="38.52" y="204" width="1.07" height="1.2" fill="#ae81ff" fill-opacity="0.55"/><rect x="39.59" y="204" width="2.14" height="1.2" fill="#f8f8f2" fill-opacity="0.25"/><rect x="42.80" y="204" width="1.07" height="1.2" fill="#ae81ff" fill-opacity="0.55"/><rect x="43.87" y="204" width="2.14" height="1.2" fill="#f8f8f2" fill-opacity="0.25"/><rect x="47.08" y="204" width="1.07" height="1.2" fill="#ae81ff" fill-opacity="0.55"/><rect x="48.15" y="204" width="2.14" height="1.2" fill="#ae81ff" fill-opacity="0.45"/><rect x="51.36" y="204" width="1.07" height="1.2" fill="#ae81ff" fill-opacity="0.55"/><rect x="52.43" y="204" width="2.14" height="1.2" fill="#f8f8f2" fill-opacity="0.25"/><rect x="55.64" y="204" width="1.07" height="1.2" fill="#ae81ff" fill-opacity="0.55"/><rect x="56.71" y="204" width="2.14" height="1.2" fill="#f8f8f2" fill-opacity="0.25"/><rect x="59.92" y="204" width="1.07" height="1.2" fill="#ae81ff" fill-opacity="0.55"/><rect x="60.99" y="204" width="2.14" height="1.2" fill="#ae81ff" fill-opacity="0.45"/><rect x="64.20" y="204" width="1.07" height="1.2" fill="#ae81ff" fill-opacity="0.55"/><rect x="65.27" y="204" width="2.14" height="1.2" fill="#f8f8f2" fill-opacity="0.25"/><rect x="68.48" y="204" width="1.07" height="1.2" fill="#ae81ff" fill-opacity="0.55"/><rect x="69.55" y="204" width="2.14" height="1.2" fill="#f8f8f2" fill-opacity="0.25"/><rect x="4.28" y="206" width="1.07" height="1.2" fill="#ae81ff" fill-opacity="0.55"/><rect x="5.35" y="206" width="2.14" height="1.2" fill="#f8f8f2" fill-opacity="0.25"/><rect x="8.56" y="206" width="1.07" height="1.2" fill="#ae81ff" fill-opacity="0.55"/><rect x="9.63" y="206" width="2.14" height="1.2" fill="#f8f8f2" fill-opacity="0.25"/><rect x="12.84" y="206" width="1.07" height="1.2" fill="#ae81ff" fill-opacity="0.55"/><rect x="13.91" y="206" width="2.14" height="1.2" fill="#f8f8f2" fill-opacity="0.25"/><rect x="17.12" y="206" width="1.07" height="1.2" fill="#ae81ff" fill-opacity="0.55"/><rect x="18.19" y="206" width="2.14" height="1.2" fill="#f8f8f2" fill-opacity="0.25"/><rect x="21.40" y="206" width="1.07" height="1.2" fill="#ae81ff" fill-opacity="0.55"/><rect x="22.47" y="206" width="2.14" height="1.2" fill="#f8f8f2" fill-opacity="0.25"/><rect x="25.68" y="206" width="1.07" height="1.2" fill="#ae81ff" fill-opacity="0.55"/><rect x="26.75" y="206" width="2.14" height="1.2" fill="#f8f8f2" fill-opacity="0.25"/><rect x="29.96" y="206" width="1.07" height="1.2" fill="#ae81ff" fill-opacity="0.55"/><rect x="31.03" y="206" width="2.14" height="1.2" fill="#f8f8f2" fill-opacity="0.25"/><rect x="34.24" y="206" width="1.07" height="1.2" fill="#ae81ff" fill-opacity="0.55"/><rect x="35.31" y="206" width="2.14" height="1.2" fill="#f8f8f2" fill-opacity="0.25"/><rect x="38.52" y="206" width="1.07" height="1.2" fill="#ae81ff" fill-opacity="0.55"/><rect x="39.59" y="206" width="2.14" height="1.2" fill="#f8f8f2" fill-opacity="0.25"/><rect x="42.80" y="206" width="1.07" height="1.2" fill="#ae81ff" fill-opacity="0.55"/><rect x="43.87" y="206" width="2.14" height="1.2" fill="#f8f8f2" fill-opacity="0.25"/><rect x="47.08" y="206" width="1.07" height="1.2" fill="#ae81ff" fill-opacity="0.55"/><rect x="48.15" y="206" width="2.14" height="1.2" fill="#f8f8f2" fill-opacity="0.25"/><rect x="51.36" y="206" width="1.07" height="1.2" fill="#ae81ff" fill-opacity="0.55"/><rect x="52.43" y="206" width="2.14" height="1.2" fill="#f8f8f2" fill-opacity="0.25"/><rect x="55.64" y="206" width="1.07" height="1.2" fill="#ae81ff" fill-opacity="0.55"/><rect x="56.71" y="206" width="2.14" height="1.2" fill="#f8f8f2" fill-opacity="0.25"/><rect x="59.92" y="206" width="1.07" height="1.2" fill="#ae81ff" fill-opacity="0.55"/><rect x="60.99" y="206" width="2.14" height="1.2" fill="#f8f8f2" fill-opacity="0.25"/><rect x="64.20" y="206" width="1.07" height="1.2" fill="#ae81ff" fill-opacity="0.55"/><rect x="65.27" y="206" width="2.14" height="1.2" fill="#f8f8f2" fill-opacity="0.25"/><rect x="68.48" y="206" width="1.07" height="1.2" fill="#ae81ff" fill-opacity="0.55"/><rect x="69.55" y="206" width="2.14" height="1.2" fill="#f8f8f2" fill-opacity="0.25"/><rect x="4.28" y="208" width="1.07" height="1.2" fill="#ae81ff" fill-opacity="0.55"/><rect x="5.35" y="208" width="2.14" height="1.2" fill="#f8f8f2" fill-opacity="0.25"/><rect x="8.56" y="208" width="1.07" height="1.2" fill="#ae81ff" fill-opacity="0.55"/><rect x="9.63" y="208" width="2.14" height="1.2" fill="#f8f8f2" fill-opacity="0.25"/><rect x="12.84" y="208" width="1.07" height="1.2" fill="#ae81ff" fill-opacity="0.55"/><rect x="13.91" y="208" width="2.14" height="1.2" fill="#f8f8f2" fill-opacity="0.25"/><rect x="17.12" y="208" width="1.07" height="1.2" fill="#ae81ff" fill-opacity="0.55"/><rect x="18.19" y="208" width="2.14" height="1.2" fill="#f8f8f2" fill-opacity="0.25"/><rect x="21.40" y="208" width="1.07" height="1.2" fill="#ae81ff" fill-opacity="0.55"/><rect x="22.47" y="208" width="2.14" height="1.2" fill="#f8f8f2" fill-opacity="0.25"/><rect x="25.68" y="208" width="1.07" height="1.2" fill="#ae81ff" fill-opacity="0.55"/><rect x="26.75" y="208" width="2.14" height="1.2" fill="#f8f8f2" fill-opacity="0.25"/><rect x="29.96" y="208" width="1.07" height="1.2" fill="#ae81ff" fill-opacity="0.55"/><rect x="31.03" y="208" width="2.14" height="1.2" fill="#f8f8f2" fill-opacity="0.25"/><rect x="34.24" y="208" width="1.07" height="1.2" fill="#ae81ff" fill-opacity="0.55"/><rect x="35.31" y="208" width="2.14" height="1.2" fill="#f8f8f2" fill-opacity="0.25"/><rect x="38.52" y="208" width="1.07" height="1.2" fill="#ae81ff" fill-opacity="0.55"/><rect x="39.59" y="208" width="2.14" height="1.2" fill="#f8f8f2" fill-opacity="0.25"/><rect x="42.80" y="208" width="1.07" height="1.2" fill="#ae81ff" fill-opacity="0.55"/><rect x="43.87" y="208" width="2.14" height="1.2" fill="#f8f8f2" fill-opacity="0.25"/><rect x="47.08" y="208" width="1.07" height="1.2" fill="#ae81ff" fill-opacity="0.55"/><rect x="48.15" y="208" width="2.14" height="1.2" fill="#f8f8f2" fill-opacity="0.25"/><rect x="51.36" y="208" width="1.07" height="1.2" fill="#ae81ff" fill-opacity="0.55"/><rect x="52.43" y="208" width="2.14" height="1.2" fill="#f8f8f2" fill-opacity="0.25"/><rect x="55.64" y="208" width="1.07" height="1.2" fill="#ae81ff" fill-opacity="0.55"/><rect x="56.71" y="208" width="2.14" height="1.2" fill="#f8f8f2" fill-opacity="0.25"/><rect x="59.92" y="208" width="1.07" height="1.2" fill="#ae81ff" fill-opacity="0.55"/><rect x="60.99" y="208" width="2.14" height="1.2" fill="#f8f8f2" fill-opacity="0.25"/><rect x="64.20" y="208" width="1.07" height="1.2" fill="#ae81ff" fill-opacity="0.55"/><rect x="65.27" y="208" width="2.14" height="1.2" fill="#f8f8f2" fill-opacity="0.25"/><rect x="68.48" y="208" width="1.07" height="1.2" fill="#ae81ff" fill-opacity="0.55"/><rect x="69.55" y="208" width="2.14" height="1.2" fill="#f8f8f2" fill-opacity="0.25"/><rect x="4.28" y="210" width="1.07" height="1.2" fill="#ae81ff" fill-opacity="0.55"/><rect x="5.35" y="210" width="2.14" height="1.2" fill="#f8f8f2" fill-opacity="0.25"/><rect x="8.56" y="210" width="1.07" height="1.2" fill="#ae81ff" fill-opacity="0.55"/><rect x="9.63" y="210" width="2.14" height="1.2" fill="#f8f8f2" fill-opacity="0.25"/><rect x="12.84" y="210" width="1.07" height="1.2" fill="#ae81ff" fill-opacity="0.55"/><rect x="13.91" y="210" width="2.14" height="1.2" fill="#f8f8f2" fill-opacity="0.25"/><rect x="17.12" y="210" width="1.07" height="1.2" fill="#ae81ff" fill-opacity="0.55"/><rect x="18.19" y="210" width="2.14" height="1.2" fill="#f8f8f2" fill-opacity="0.25"/><rect x="21.40" y="210" width="1.07" height="1.2" fill="#ae81ff" fill-opacity="0.55"/><rect x="22.47" y="210" width="2.14" height="1.2" fill="#f8f8f2" fill-opacity="0.25"/><rect x="25.68" y="210" width="1.07" height="1.2" fill="#ae81ff" fill-opacity="0.55"/><rect x="26.75" y="210" width="2.14" height="1.2" fill="#f8f8f2" fill-opacity="0.25"/><rect x="29.96" y="210" width="1.07" height="1.2" fill="#ae81ff" fill-opacity="0.55"/><rect x="31.03" y="210" width="2.14" height="1.2" fill="#f8f8f2" fill-opacity="0.25"/><rect x="34.24" y="210" width="1.07" height="1.2" fill="#ae81ff" fill-opacity="0.55"/><rect x="35.31" y="210" width="2.14" height="1.2" fill="#f8f8f2" fill-opacity="0.25"/><rect x="38.52" y="210" width="1.07" height="1.2" fill="#ae81ff" fill-opacity="0.55"/><rect x="39.59" y="210" width="2.14" height="1.2" fill="#f8f8f2" fill-opacity="0.25"/><rect x="42.80" y="210" width="1.07" height="1.2" fill="#ae81ff" fill-opacity="0.55"/><rect x="43.87" y="210" width="2.14" height="1.2" fill="#f8f8f2" fill-opacity="0.25"/><rect x="47.08" y="210" width="1.07" height="1.2" fill="#ae81ff" fill-opacity="0.55"/><rect x="48.15" y="210" width="2.14" height="1.2" fill="#f8f8f2" fill-opacity="0.25"/><rect x="51.36" y="210" width="1.07" height="1.2" fill="#ae81ff" fill-opacity="0.55"/><rect x="52.43" y="210" width="2.14" height="1.2" fill="#f8f8f2" fill-opacity="0.25"/><rect x="55.64" y="210" width="1.07" height="1.2" fill="#ae81ff" fill-opacity="0.55"/><rect x="56.71" y="210" width="2.14" height="1.2" fill="#f8f8f2" fill-opacity="0.25"/><rect x="59.92" y="210" width="1.07" height="1.2" fill="#ae81ff" fill-opacity="0.55"/><rect x="60.99" y="210" width="2.14" height="1.2" fill="#f8f8f2" fill-opacity="0.25"/><rect x="64.20" y="210" width="1.07" height="1.2" fill="#ae81ff" fill-opacity="0.55"/><rect x="65.27" y="210" width="2.14" height="1.2" fill="#f8f8f2" fill-opacity="0.25"/><rect x="68.48" y="210" width="1.07" height="1.2" fill="#ae81ff" fill-opacity="0.55"/><rect x="69.55" y="210" width="2.14" height="1.2" fill="#f8f8f2" fill-opacity="0.25"/><rect x="4.28" y="212" width="1.07" height="1.2" fill="#ae81ff" fill-opacity="0.55"/><rect x="5.35" y="212" width="2.14" height="1.2" fill="#f8f8f2" fill-opacity="0.25"/><rect x="8.56" y="212" width="1.07" height="1.2" fill="#ae81ff" fill-opacity="0.55"/><rect x="9.63" y="212" width="2.14" height="1.2" fill="#f8f8f2" fill-opacity="0.25"/><rect x="12.84" y="212" width="1.07" height="1.2" fill="#ae81ff" fill-opacity="0.55"/><rect x="13.91" y="212" width="2.14" height="1.2" fill="#f8f8f2" fill-opacity="0.25"/><rect x="17.12" y="212" width="1.07" height="1.2" fill="#ae81ff" fill-opacity="0.55"/><rect x="18.19" y="212" width="2.14" height="1.2" fill="#f8f8f2" fill-opacity="0.25"/><rect x="21.40" y="212" width="1.07" height="1.2" fill="#ae81ff" fill-opacity="0.55"/><rect x="22.47" y="212" width="2.14" height="1.2" fill="#f8f8f2" fill-opacity="0.25"/><rect x="25.68" y="212" width="1.07" height="1.2" fill="#ae81ff" fill-opacity="0.55"/><rect x="26.75" y="212" width="2.14" height="1.2" fill="#f8f8f2" fill-opacity="0.25"/><rect x="29.96" y="212" width="1.07" height="1.2" fill="#ae81ff" fill-opacity="0.55"/><rect x="31.03" y="212" width="2.14" height="1.2" fill="#f8f8f2" fill-opacity="0.25"/><rect x="34.24" y="212" width="1.07" height="1.2" fill="#ae81ff" fill-opacity="0.55"/><rect x="35.31" y="212" width="2.14" height="1.2" fill="#f8f8f2" fill-opacity="0.25"/><rect x="38.52" y="212" width="1.07" height="1.2" fill="#ae81ff" fill-opacity="0.55"/><rect x="39.59" y="212" width="2.14" height="1.2" fill="#f8f8f2" fill-opacity="0.25"/><rect x="42.80" y="212" width="1.07" height="1.2" fill="#ae81ff" fill-opacity="0.55"/><rect x="43.87" y="212" width="2.14" height="1.2" fill="#f8f8f2" fill-opacity="0.25"/><rect x="47.08" y="212" width="1.07" height="1.2" fill="#ae81ff" fill-opacity="0.55"/><rect x="48.15" y="212" width="2.14" height="1.2" fill="#f8f8f2" fill-opacity="0.25"/><rect x="51.36" y="212" width="1.07" height="1.2" fill="#ae81ff" fill-opacity="0.55"/><rect x="52.43" y="212" width="2.14" height="1.2" fill="#f8f8f2" fill-opacity="0.25"/><rect x="55.64" y="212" width="1.07" height="1.2" fill="#ae81ff" fill-opacity="0.55"/><rect x="56.71" y="212" width="2.14" height="1.2" fill="#f8f8f2" fill-opacity="0.25"/><rect x="59.92" y="212" width="1.07" height="1.2" fill="#ae81ff" fill-opacity="0.55"/><rect x="60.99" y="212" width="2.14" height="1.2" fill="#f8f8f2" fill-opacity="0.25"/><rect x="64.20" y="212" width="1.07" height="1.2" fill="#ae81ff" fill-opacity="0.55"/><rect x="65.27" y="212" width="2.14" height="1.2" fill="#f8f8f2" fill-opacity="0.25"/><rect x="68.48" y="212" width="1.07" height="1.2" fill="#ae81ff" fill-opacity="0.55"/><rect x="69.55" y="212" width="2.14" height="1.2" fill="#f8f8f2" fill-opacity="0.25"/><rect x="0.00" y="214" width="2.14" height="1.75" fill="#f8f8f2" fill-opacity="0.34"/><rect x="0.00" y="218" width="4.28" height="1.75" fill="#66d9ef" fill-opacity="0.5"/><rect x="5.35" y="218" width="13.91" height="1.75" fill="#a6e22e" fill-opacity="0.47"/><rect x="19.26" y="218" width="1.07" height="1.75" fill="#f8f8f2" fill-opacity="0.34"/><rect x="20.33" y="218" width="5.35" height="1.75" fill="#f92672" fill-opacity="0.5"/><rect x="26.75" y="218" width="4.28" height="1.75" fill="#66d9ef" fill-opacity="0.5"/><rect x="32.10" y="218" width="1.07" height="1.75" fill="#f8f8f2" fill-opacity="0.34"/><rect x="34.24" y="218" width="5.35" height="1.75" fill="#f8f8f2" fill-opacity="0.34"/><rect x="40.66" y="218" width="6.42" height="1.75" fill="#66d9ef" fill-opacity="0.5"/><rect x="48.15" y="218" width="6.42" height="1.75" fill="#f8f8f2" fill-opacity="0.9"/><rect x="54.57" y="218" width="1.07" height="1.75" fill="#f8f8f2" fill-opacity="0.34"/><rect x="56.71" y="218" width="7.49" height="1.75" fill="#66d9ef" fill-opacity="0.5"/><rect x="65.27" y="218" width="1.07" height="1.75" fill="#f8f8f2" fill-opacity="0.34"/><rect x="67.41" y="218" width="4.28" height="1.75" fill="#f8f8f2" fill-opacity="0.34"/><rect x="4.28" y="220" width="14.98" height="1.75" fill="#f8f8f2" fill-opacity="0.34"/><rect x="20.33" y="220" width="8.56" height="1.75" fill="#f8f8f2" fill-opacity="0.34"/><rect x="0.00" y="222" width="1.07" height="1.75" fill="#f8f8f2" fill-opacity="0.34"/><rect x="4.28" y="224" width="5.35" height="1.75" fill="#f92672" fill-opacity="0.5"/><rect x="10.70" y="224" width="7.49" height="1.75" fill="#66d9ef" fill-opacity="0.5"/><rect x="19.26" y="224" width="1.07" height="1.75" fill="#f8f8f2" fill-opacity="0.34"/><rect x="21.40" y="224" width="6.42" height="1.75" fill="#f8f8f2" fill-opacity="0.34"/><rect x="28.89" y="224" width="1.07" height="1.75" fill="#f8f8f2" fill-opacity="0.34"/><rect x="31.03" y="224" width="8.56" height="1.75" fill="#f8f8f2" fill-opacity="0.34"/><rect x="40.66" y="224" width="2.14" height="1.75" fill="#f8f8f2" fill-opacity="0.34"/><rect x="43.87" y="224" width="26.75" height="1.75" fill="#f8f8f2" fill-opacity="0.34"/><rect x="8.56" y="226" width="1.07" height="1.75" fill="#f8f8f2" fill-opacity="0.34"/><rect x="10.70" y="226" width="16.05" height="1.75" fill="#f8f8f2" fill-opacity="0.34"/><rect x="8.56" y="228" width="1.07" height="1.75" fill="#f8f8f2" fill-opacity="0.34"/><rect x="10.70" y="228" width="17.12" height="1.75" fill="#f8f8f2" fill-opacity="0.34"/><rect x="4.28" y="232" width="6.42" height="1.75" fill="#66d9ef" fill-opacity="0.5"/><rect x="11.77" y="232" width="7.49" height="1.75" fill="#f8f8f2" fill-opacity="0.34"/><rect x="20.33" y="232" width="1.07" height="1.75" fill="#f8f8f2" fill-opacity="0.34"/><rect x="22.47" y="232" width="1.07" height="1.75" fill="#ae81ff" fill-opacity="0.55"/><rect x="23.54" y="232" width="1.07" height="1.75" fill="#f8f8f2" fill-opacity="0.34"/><rect x="4.28" y="234" width="6.42" height="1.75" fill="#66d9ef" fill-opacity="0.5"/><rect x="11.77" y="234" width="7.49" height="1.75" fill="#f8f8f2" fill-opacity="0.34"/><rect x="20.33" y="234" width="1.07" height="1.75" fill="#f8f8f2" fill-opacity="0.34"/><rect x="22.47" y="234" width="1.07" height="1.75" fill="#ae81ff" fill-opacity="0.55"/><rect x="23.54" y="234" width="1.07" height="1.75" fill="#f8f8f2" fill-opacity="0.34"/><rect x="4.28" y="236" width="3.21" height="1.75" fill="#f92672" fill-opacity="0.5"/><rect x="8.56" y="236" width="2.14" height="1.75" fill="#f8f8f2" fill-opacity="0.34"/><rect x="11.77" y="236" width="8.56" height="1.75" fill="#f8f8f2" fill-opacity="0.34"/><rect x="21.40" y="236" width="1.07" height="1.75" fill="#f8f8f2" fill-opacity="0.34"/><rect x="23.54" y="236" width="1.07" height="1.75" fill="#ae81ff" fill-opacity="0.55"/><rect x="24.61" y="236" width="1.07" height="1.75" fill="#f8f8f2" fill-opacity="0.34"/><rect x="26.75" y="236" width="2.14" height="1.75" fill="#f8f8f2" fill-opacity="0.34"/><rect x="29.96" y="236" width="6.42" height="1.75" fill="#f8f8f2" fill-opacity="0.9"/><rect x="36.38" y="236" width="1.07" height="1.75" fill="#f8f8f2" fill-opacity="0.34"/><rect x="38.52" y="236" width="7.49" height="1.75" fill="#f8f8f2" fill-opacity="0.34"/><rect x="47.08" y="236" width="2.14" height="1.75" fill="#f8f8f2" fill-opacity="0.34"/><rect x="50.29" y="236" width="1.07" height="1.75" fill="#ae81ff" fill-opacity="0.55"/><rect x="51.36" y="236" width="1.07" height="1.75" fill="#f8f8f2" fill-opacity="0.34"/><rect x="53.50" y="236" width="7.49" height="1.75" fill="#f8f8f2" fill-opacity="0.34"/><rect x="62.06" y="236" width="2.14" height="1.75" fill="#f8f8f2" fill-opacity="0.34"/><rect x="65.27" y="236" width="1.07" height="1.75" fill="#ae81ff" fill-opacity="0.55"/><rect x="66.34" y="236" width="1.07" height="1.75" fill="#f8f8f2" fill-opacity="0.34"/><rect x="4.28" y="238" width="1.07" height="1.75" fill="#f8f8f2" fill-opacity="0.34"/><rect x="8.56" y="240" width="7.49" height="1.75" fill="#66d9ef" fill-opacity="0.5"/><rect x="17.12" y="240" width="2.14" height="1.75" fill="#f8f8f2" fill-opacity="0.34"/><rect x="20.33" y="240" width="1.07" height="1.75" fill="#f8f8f2" fill-opacity="0.34"/><rect x="22.47" y="240" width="7.49" height="1.75" fill="#f8f8f2" fill-opacity="0.34"/><rect x="29.96" y="240" width="7.49" height="1.75" fill="#66d9ef" fill-opacity="0.5"/><rect x="37.45" y="240" width="13.91" height="1.75" fill="#f8f8f2" fill-opacity="0.34"/><rect x="52.43" y="240" width="1.07" height="1.75" fill="#f8f8f2" fill-opacity="0.34"/><rect x="54.57" y="240" width="1.07" height="1.75" fill="#ae81ff" fill-opacity="0.55"/><rect x="55.64" y="240" width="3.21" height="1.75" fill="#f8f8f2" fill-opacity="0.34"/><rect x="8.56" y="242" width="7.49" height="1.75" fill="#66d9ef" fill-opacity="0.5"/><rect x="17.12" y="242" width="2.14" height="1.75" fill="#f8f8f2" fill-opacity="0.34"/><rect x="20.33" y="242" width="1.07" height="1.75" fill="#f8f8f2" fill-opacity="0.34"/><rect x="22.47" y="242" width="7.49" height="1.75" fill="#f8f8f2" fill-opacity="0.34"/><rect x="29.96" y="242" width="7.49" height="1.75" fill="#66d9ef" fill-opacity="0.5"/><rect x="37.45" y="242" width="13.91" height="1.75" fill="#f8f8f2" fill-opacity="0.34"/><rect x="52.43" y="242" width="1.07" height="1.75" fill="#f8f8f2" fill-opacity="0.34"/><rect x="54.57" y="242" width="1.07" height="1.75" fill="#ae81ff" fill-opacity="0.55"/><rect x="55.64" y="242" width="3.21" height="1.75" fill="#f8f8f2" fill-opacity="0.34"/><rect x="8.56" y="244" width="7.49" height="1.75" fill="#66d9ef" fill-opacity="0.5"/><rect x="17.12" y="244" width="2.14" height="1.75" fill="#f8f8f2" fill-opacity="0.34"/><rect x="20.33" y="244" width="1.07" height="1.75" fill="#f8f8f2" fill-opacity="0.34"/><rect x="22.47" y="244" width="7.49" height="1.75" fill="#f8f8f2" fill-opacity="0.34"/><rect x="29.96" y="244" width="7.49" height="1.75" fill="#66d9ef" fill-opacity="0.5"/><rect x="37.45" y="244" width="13.91" height="1.75" fill="#f8f8f2" fill-opacity="0.34"/><rect x="52.43" y="244" width="1.07" height="1.75" fill="#f8f8f2" fill-opacity="0.34"/><rect x="54.57" y="244" width="1.07" height="1.75" fill="#ae81ff" fill-opacity="0.55"/><rect x="55.64" y="244" width="3.21" height="1.75" fill="#f8f8f2" fill-opacity="0.34"/><rect x="8.56" y="246" width="7.49" height="1.75" fill="#66d9ef" fill-opacity="0.5"/><rect x="17.12" y="246" width="2.14" height="1.75" fill="#f8f8f2" fill-opacity="0.34"/><rect x="20.33" y="246" width="1.07" height="1.75" fill="#f8f8f2" fill-opacity="0.34"/><rect x="22.47" y="246" width="7.49" height="1.75" fill="#f8f8f2" fill-opacity="0.34"/><rect x="29.96" y="246" width="7.49" height="1.75" fill="#66d9ef" fill-opacity="0.5"/><rect x="37.45" y="246" width="13.91" height="1.75" fill="#f8f8f2" fill-opacity="0.34"/><rect x="52.43" y="246" width="1.07" height="1.75" fill="#f8f8f2" fill-opacity="0.34"/><rect x="54.57" y="246" width="1.07" height="1.75" fill="#ae81ff" fill-opacity="0.55"/><rect x="55.64" y="246" width="3.21" height="1.75" fill="#f8f8f2" fill-opacity="0.34"/><rect x="8.56" y="250" width="2.14" height="1.75" fill="#f92672" fill-opacity="0.5"/><rect x="11.77" y="250" width="4.28" height="1.75" fill="#f8f8f2" fill-opacity="0.34"/><rect x="17.12" y="250" width="1.07" height="1.75" fill="#f8f8f2" fill-opacity="0.34"/><rect x="19.26" y="250" width="2.14" height="1.75" fill="#f8f8f2" fill-opacity="0.34"/><rect x="22.47" y="250" width="1.07" height="1.75" fill="#f8f8f2" fill-opacity="0.34"/><rect x="24.61" y="250" width="2.14" height="1.75" fill="#f8f8f2" fill-opacity="0.34"/><rect x="27.82" y="250" width="1.07" height="1.75" fill="#f8f8f2" fill-opacity="0.34"/><rect x="29.96" y="250" width="3.21" height="1.75" fill="#f8f8f2" fill-opacity="0.34"/><rect x="34.24" y="250" width="1.07" height="1.75" fill="#f8f8f2" fill-opacity="0.34"/><rect x="36.38" y="250" width="4.28" height="1.75" fill="#ae81ff" fill-opacity="0.55"/><rect x="40.66" y="250" width="1.07" height="1.75" fill="#f8f8f2" fill-opacity="0.34"/><rect x="12.84" y="252" width="6.42" height="1.75" fill="#f92672" fill-opacity="0.5"/><rect x="20.33" y="252" width="5.35" height="1.75" fill="#ae81ff" fill-opacity="0.55"/><rect x="25.68" y="252" width="1.07" height="1.75" fill="#f8f8f2" fill-opacity="0.34"/><rect x="8.56" y="256" width="11.77" height="1.75" fill="#f8f8f2" fill-opacity="0.34"/><rect x="21.40" y="256" width="1.07" height="1.75" fill="#f8f8f2" fill-opacity="0.34"/><rect x="23.54" y="256" width="1.07" height="1.75" fill="#ae81ff" fill-opacity="0.55"/><rect x="24.61" y="256" width="1.07" height="1.75" fill="#f8f8f2" fill-opacity="0.34"/><rect x="26.75" y="256" width="1.07" height="1.75" fill="#f8f8f2" fill-opacity="0.34"/><rect x="28.89" y="256" width="3.21" height="1.75" fill="#f8f8f2" fill-opacity="0.34"/><rect x="33.17" y="256" width="2.14" height="1.75" fill="#f8f8f2" fill-opacity="0.34"/><rect x="36.38" y="256" width="1.07" height="1.75" fill="#ae81ff" fill-opacity="0.55"/><rect x="37.45" y="256" width="1.07" height="1.75" fill="#f8f8f2" fill-opacity="0.34"/><rect x="39.59" y="256" width="1.07" height="1.75" fill="#f8f8f2" fill-opacity="0.34"/><rect x="41.73" y="256" width="3.21" height="1.75" fill="#f8f8f2" fill-opacity="0.34"/><rect x="46.01" y="256" width="2.14" height="1.75" fill="#f8f8f2" fill-opacity="0.34"/><rect x="49.22" y="256" width="1.07" height="1.75" fill="#ae81ff" fill-opacity="0.55"/><rect x="50.29" y="256" width="2.14" height="1.75" fill="#f8f8f2" fill-opacity="0.34"/><rect x="8.56" y="258" width="11.77" height="1.75" fill="#f8f8f2" fill-opacity="0.34"/><rect x="21.40" y="258" width="1.07" height="1.75" fill="#f8f8f2" fill-opacity="0.34"/><rect x="23.54" y="258" width="1.07" height="1.75" fill="#ae81ff" fill-opacity="0.55"/><rect x="24.61" y="258" width="1.07" height="1.75" fill="#f8f8f2" fill-opacity="0.34"/><rect x="26.75" y="258" width="1.07" height="1.75" fill="#f8f8f2" fill-opacity="0.34"/><rect x="28.89" y="258" width="3.21" height="1.75" fill="#f8f8f2" fill-opacity="0.34"/><rect x="33.17" y="258" width="2.14" height="1.75" fill="#f8f8f2" fill-opacity="0.34"/><rect x="36.38" y="258" width="1.07" height="1.75" fill="#ae81ff" fill-opacity="0.55"/><rect x="37.45" y="258" width="1.07" height="1.75" fill="#f8f8f2" fill-opacity="0.34"/><rect x="39.59" y="258" width="1.07" height="1.75" fill="#f8f8f2" fill-opacity="0.34"/><rect x="41.73" y="258" width="3.21" height="1.75" fill="#f8f8f2" fill-opacity="0.34"/><rect x="46.01" y="258" width="2.14" height="1.75" fill="#f8f8f2" fill-opacity="0.34"/><rect x="49.22" y="258" width="1.07" height="1.75" fill="#ae81ff" fill-opacity="0.55"/><rect x="50.29" y="258" width="1.07" height="1.75" fill="#f8f8f2" fill-opacity="0.34"/><rect x="52.43" y="258" width="1.07" height="1.75" fill="#f8f8f2" fill-opacity="0.34"/><rect x="54.57" y="258" width="4.28" height="1.75" fill="#ae81ff" fill-opacity="0.55"/><rect x="58.85" y="258" width="1.07" height="1.75" fill="#f8f8f2" fill-opacity="0.34"/><rect x="8.56" y="260" width="11.77" height="1.75" fill="#f8f8f2" fill-opacity="0.34"/><rect x="21.40" y="260" width="1.07" height="1.75" fill="#f8f8f2" fill-opacity="0.34"/><rect x="23.54" y="260" width="1.07" height="1.75" fill="#ae81ff" fill-opacity="0.55"/><rect x="24.61" y="260" width="1.07" height="1.75" fill="#f8f8f2" fill-opacity="0.34"/><rect x="26.75" y="260" width="1.07" height="1.75" fill="#f8f8f2" fill-opacity="0.34"/><rect x="28.89" y="260" width="3.21" height="1.75" fill="#f8f8f2" fill-opacity="0.34"/><rect x="33.17" y="260" width="2.14" height="1.75" fill="#f8f8f2" fill-opacity="0.34"/><rect x="36.38" y="260" width="1.07" height="1.75" fill="#ae81ff" fill-opacity="0.55"/><rect x="37.45" y="260" width="1.07" height="1.75" fill="#f8f8f2" fill-opacity="0.34"/><rect x="39.59" y="260" width="1.07" height="1.75" fill="#f8f8f2" fill-opacity="0.34"/><rect x="41.73" y="260" width="3.21" height="1.75" fill="#f8f8f2" fill-opacity="0.34"/><rect x="4.28" y="262" width="1.07" height="1.75" fill="#f8f8f2" fill-opacity="0.34"/><rect x="4.28" y="266" width="2.14" height="1.75" fill="#f92672" fill-opacity="0.5"/><rect x="7.49" y="266" width="8.56" height="1.75" fill="#f8f8f2" fill-opacity="0.34"/><rect x="17.12" y="266" width="1.07" height="1.75" fill="#f8f8f2" fill-opacity="0.34"/><rect x="19.26" y="266" width="6.42" height="1.75" fill="#f8f8f2" fill-opacity="0.9"/><rect x="25.68" y="266" width="1.07" height="1.75" fill="#f8f8f2" fill-opacity="0.34"/><rect x="4.28" y="268" width="1.07" height="1.75" fill="#f8f8f2" fill-opacity="0.34"/><rect x="8.56" y="270" width="7.49" height="1.75" fill="#66d9ef" fill-opacity="0.5"/><rect x="17.12" y="270" width="3.21" height="1.75" fill="#f8f8f2" fill-opacity="0.34"/><rect x="21.40" y="270" width="3.21" height="1.75" fill="#f8f8f2" fill-opacity="0.34"/><rect x="25.68" y="270" width="3.21" height="1.75" fill="#f8f8f2" fill-opacity="0.34"/><rect x="8.56" y="274" width="2.14" height="1.75" fill="#f92672" fill-opacity="0.5"/><rect x="11.77" y="274" width="8.56" height="1.75" fill="#f8f8f2" fill-opacity="0.34"/><rect x="21.40" y="274" width="1.07" height="1.75" fill="#f8f8f2" fill-opacity="0.34"/><rect x="23.54" y="274" width="1.07" height="1.75" fill="#ae81ff" fill-opacity="0.55"/><rect x="25.68" y="274" width="1.07" height="1.75" fill="#f8f8f2" fill-opacity="0.34"/><rect x="27.82" y="274" width="6.42" height="1.75" fill="#f8f8f2" fill-opacity="0.9"/><rect x="34.24" y="274" width="1.07" height="1.75" fill="#f8f8f2" fill-opacity="0.34"/><rect x="8.56" y="276" width="1.07" height="1.75" fill="#f8f8f2" fill-opacity="0.34"/><rect x="12.84" y="278" width="2.14" height="1.75" fill="#f8f8f2" fill-opacity="0.34"/><rect x="16.05" y="278" width="1.07" height="1.75" fill="#f8f8f2" fill-opacity="0.34"/><rect x="18.19" y="278" width="8.56" height="1.75" fill="#f8f8f2" fill-opacity="0.34"/><rect x="26.75" y="278" width="7.49" height="1.75" fill="#66d9ef" fill-opacity="0.5"/><rect x="34.24" y="278" width="19.26" height="1.75" fill="#f8f8f2" fill-opacity="0.34"/><rect x="12.84" y="280" width="2.14" height="1.75" fill="#f8f8f2" fill-opacity="0.34"/><rect x="16.05" y="280" width="1.07" height="1.75" fill="#f8f8f2" fill-opacity="0.34"/><rect x="18.19" y="280" width="8.56" height="1.75" fill="#f8f8f2" fill-opacity="0.34"/><rect x="26.75" y="280" width="7.49" height="1.75" fill="#66d9ef" fill-opacity="0.5"/><rect x="34.24" y="280" width="19.26" height="1.75" fill="#f8f8f2" fill-opacity="0.34"/><rect x="12.84" y="282" width="2.14" height="1.75" fill="#f92672" fill-opacity="0.5"/><rect x="16.05" y="282" width="4.28" height="1.75" fill="#f8f8f2" fill-opacity="0.34"/><rect x="21.40" y="282" width="1.07" height="1.75" fill="#f8f8f2" fill-opacity="0.34"/><rect x="23.54" y="282" width="3.21" height="1.75" fill="#f8f8f2" fill-opacity="0.34"/><rect x="27.82" y="282" width="1.07" height="1.75" fill="#f8f8f2" fill-opacity="0.34"/><rect x="29.96" y="282" width="4.28" height="1.75" fill="#ae81ff" fill-opacity="0.55"/><rect x="34.24" y="282" width="1.07" height="1.75" fill="#f8f8f2" fill-opacity="0.34"/><rect x="17.12" y="284" width="6.42" height="1.75" fill="#f92672" fill-opacity="0.5"/><rect x="24.61" y="284" width="5.35" height="1.75" fill="#ae81ff" fill-opacity="0.55"/><rect x="29.96" y="284" width="1.07" height="1.75" fill="#f8f8f2" fill-opacity="0.34"/><rect x="12.84" y="288" width="14.98" height="1.75" fill="#f8f8f2" fill-opacity="0.34"/><rect x="28.89" y="288" width="1.07" height="1.75" fill="#f8f8f2" fill-opacity="0.34"/><rect x="31.03" y="288" width="3.21" height="1.75" fill="#f8f8f2" fill-opacity="0.34"/><rect x="35.31" y="288" width="2.14" height="1.75" fill="#f8f8f2" fill-opacity="0.34"/><rect x="38.52" y="288" width="1.07" height="1.75" fill="#ae81ff" fill-opacity="0.55"/><rect x="39.59" y="288" width="1.07" height="1.75" fill="#f8f8f2" fill-opacity="0.34"/><rect x="41.73" y="288" width="1.07" height="1.75" fill="#f8f8f2" fill-opacity="0.34"/><rect x="43.87" y="288" width="3.21" height="1.75" fill="#f8f8f2" fill-opacity="0.34"/><rect x="48.15" y="288" width="2.14" height="1.75" fill="#f8f8f2" fill-opacity="0.34"/><rect x="51.36" y="288" width="1.07" height="1.75" fill="#ae81ff" fill-opacity="0.55"/><rect x="52.43" y="288" width="2.14" height="1.75" fill="#f8f8f2" fill-opacity="0.34"/><rect x="12.84" y="292" width="2.14" height="1.75" fill="#f92672" fill-opacity="0.5"/><rect x="16.05" y="292" width="8.56" height="1.75" fill="#f8f8f2" fill-opacity="0.34"/><rect x="25.68" y="292" width="1.07" height="1.75" fill="#f8f8f2" fill-opacity="0.34"/><rect x="27.82" y="292" width="6.42" height="1.75" fill="#f8f8f2" fill-opacity="0.9"/><rect x="34.24" y="292" width="1.07" height="1.75" fill="#f8f8f2" fill-opacity="0.34"/><rect x="12.84" y="294" width="1.07" height="1.75" fill="#f8f8f2" fill-opacity="0.34"/><rect x="17.12" y="296" width="2.14" height="1.75" fill="#f8f8f2" fill-opacity="0.34"/><rect x="20.33" y="296" width="1.07" height="1.75" fill="#f8f8f2" fill-opacity="0.34"/><rect x="22.47" y="296" width="8.56" height="1.75" fill="#f8f8f2" fill-opacity="0.34"/><rect x="31.03" y="296" width="7.49" height="1.75" fill="#66d9ef" fill-opacity="0.5"/><rect x="38.52" y="296" width="19.26" height="1.75" fill="#f8f8f2" fill-opacity="0.34"/><rect x="17.12" y="298" width="2.14" height="1.75" fill="#f92672" fill-opacity="0.5"/><rect x="20.33" y="298" width="3.21" height="1.75" fill="#f8f8f2" fill-opacity="0.34"/><rect x="24.61" y="298" width="1.07" height="1.75" fill="#f8f8f2" fill-opacity="0.34"/><rect x="26.75" y="298" width="4.28" height="1.75" fill="#ae81ff" fill-opacity="0.55"/><rect x="31.03" y="298" width="1.07" height="1.75" fill="#f8f8f2" fill-opacity="0.34"/><rect x="21.40" y="300" width="6.42" height="1.75" fill="#f92672" fill-opacity="0.5"/><rect x="28.89" y="300" width="5.35" height="1.75" fill="#ae81ff" fill-opacity="0.55"/><rect x="34.24" y="300" width="1.07" height="1.75" fill="#f8f8f2" fill-opacity="0.34"/><rect x="17.12" y="304" width="14.98" height="1.75" fill="#f8f8f2" fill-opacity="0.34"/><rect x="33.17" y="304" width="1.07" height="1.75" fill="#f8f8f2" fill-opacity="0.34"/><rect x="35.31" y="304" width="4.28" height="1.75" fill="#f8f8f2" fill-opacity="0.34"/><rect x="40.66" y="304" width="2.14" height="1.75" fill="#f8f8f2" fill-opacity="0.34"/><rect x="43.87" y="304" width="1.07" height="1.75" fill="#ae81ff" fill-opacity="0.55"/><rect x="44.94" y="304" width="1.07" height="1.75" fill="#f8f8f2" fill-opacity="0.34"/><rect x="47.08" y="304" width="1.07" height="1.75" fill="#f8f8f2" fill-opacity="0.34"/><rect x="49.22" y="304" width="3.21" height="1.75" fill="#f8f8f2" fill-opacity="0.34"/><rect x="53.50" y="304" width="2.14" height="1.75" fill="#f8f8f2" fill-opacity="0.34"/><rect x="56.71" y="304" width="1.07" height="1.75" fill="#ae81ff" fill-opacity="0.55"/><rect x="57.78" y="304" width="2.14" height="1.75" fill="#f8f8f2" fill-opacity="0.34"/><rect x="60.99" y="304" width="1.07" height="1.75" fill="#f8f8f2" fill-opacity="0.34"/><rect x="63.13" y="304" width="4.28" height="1.75" fill="#ae81ff" fill-opacity="0.55"/><rect x="67.41" y="304" width="1.07" height="1.75" fill="#f8f8f2" fill-opacity="0.34"/><rect x="12.84" y="306" width="1.07" height="1.75" fill="#f8f8f2" fill-opacity="0.34"/><rect x="8.56" y="308" width="1.07" height="1.75" fill="#f8f8f2" fill-opacity="0.34"/><rect x="4.28" y="310" width="1.07" height="1.75" fill="#f8f8f2" fill-opacity="0.34"/><rect x="4.28" y="314" width="6.42" height="1.75" fill="#f92672" fill-opacity="0.5"/><rect x="11.77" y="314" width="4.28" height="1.75" fill="#ae81ff" fill-opacity="0.55"/><rect x="16.05" y="314" width="1.07" height="1.75" fill="#f8f8f2" fill-opacity="0.34"/><rect x="0.00" y="316" width="1.07" height="1.75" fill="#f8f8f2" fill-opacity="0.34"/></svg>
<div id="scroll"></div><div id="thumb"></div>
</body></html>
